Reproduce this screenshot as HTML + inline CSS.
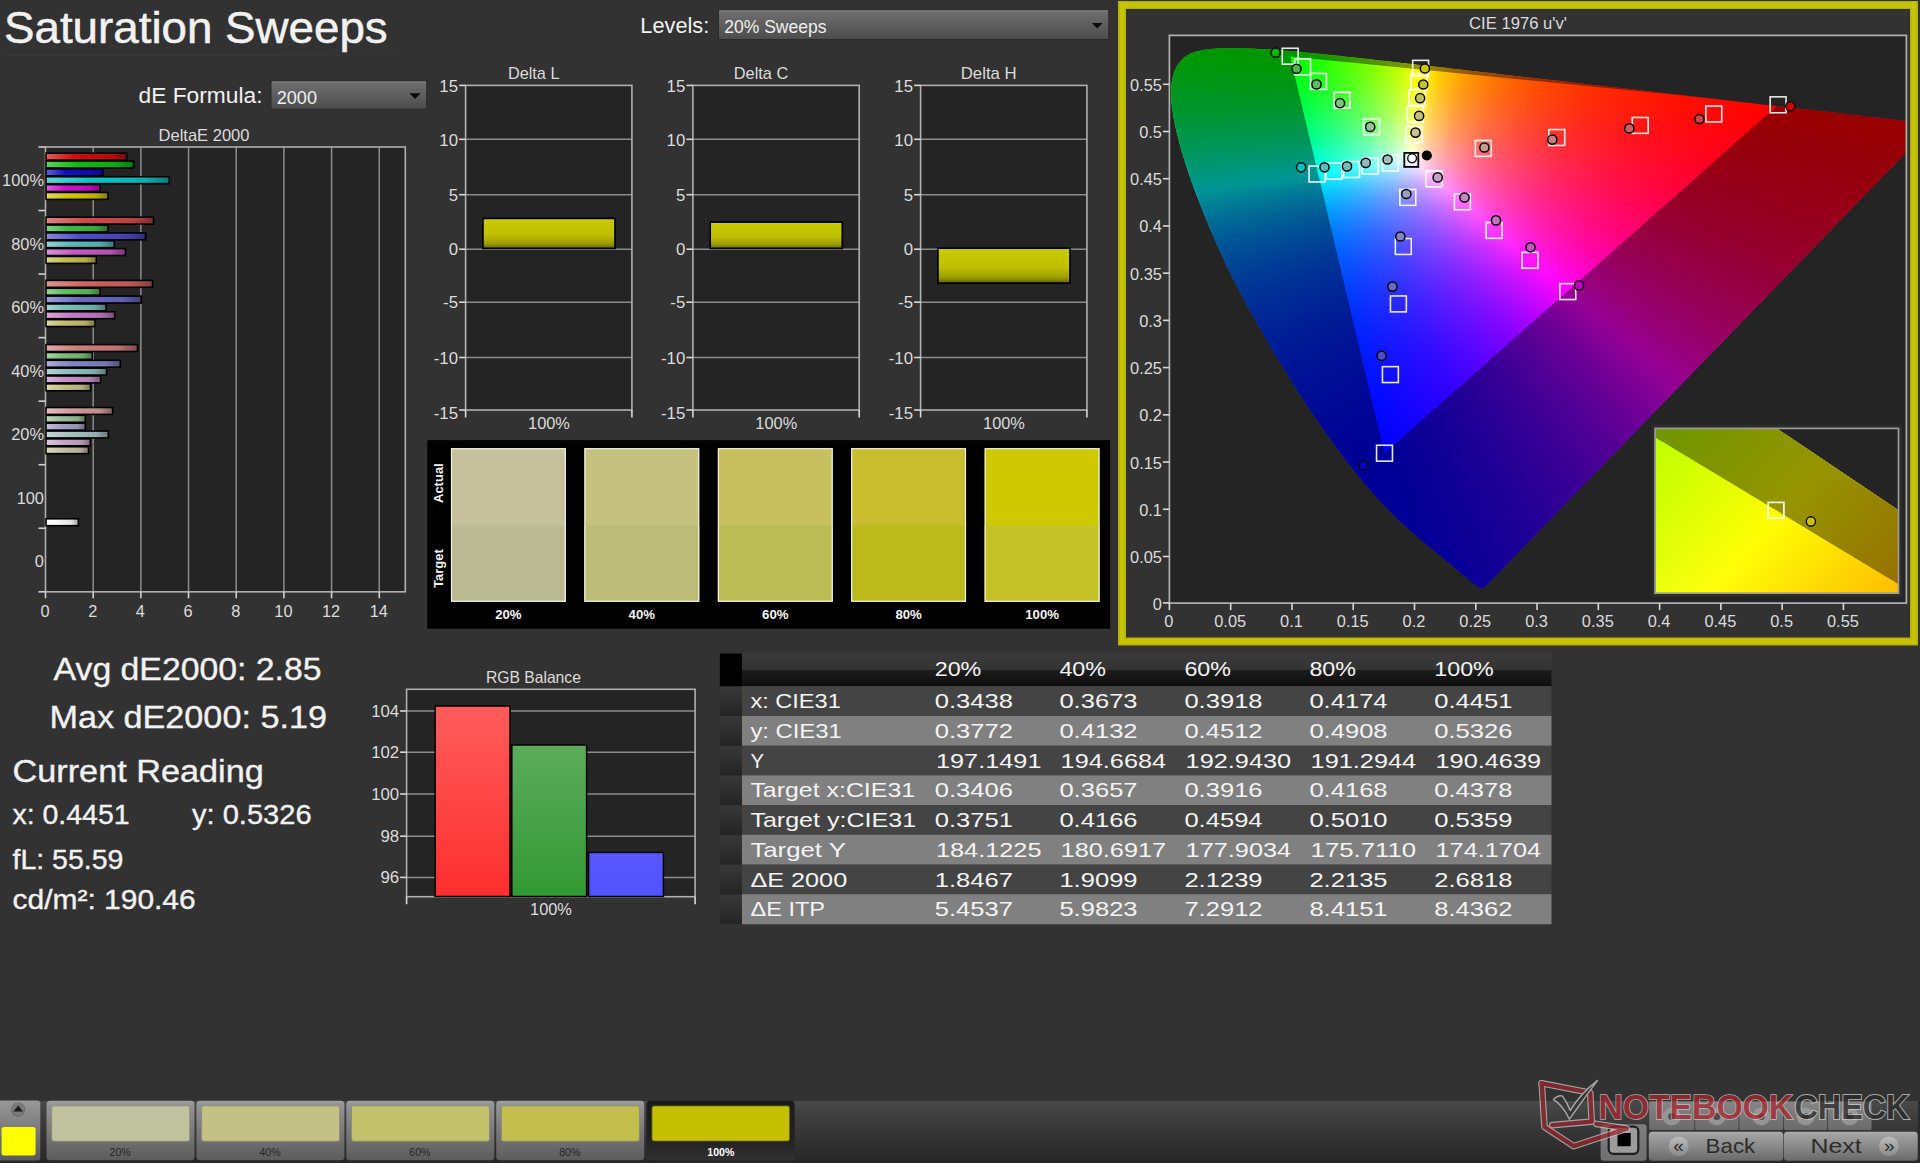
<!DOCTYPE html>
<html><head><meta charset="utf-8"><title>Saturation Sweeps</title>
<style>html,body{margin:0;padding:0;background:#323232;overflow:hidden}svg{display:block}text{font-family:"Liberation Sans", sans-serif}</style></head>
<body>
<svg width="1920" height="1163" viewBox="0 0 1920 1163">
<defs>
<linearGradient id="g1" x1="0" y1="0" x2="0" y2="1"><stop offset="0" stop-color="#707070"/><stop offset="0.5" stop-color="#5e5e5e"/><stop offset="1" stop-color="#4c4c4c"/></linearGradient>
<linearGradient id="g2" x1="0" y1="0" x2="0" y2="1"><stop offset="0" stop-color="#707070"/><stop offset="0.5" stop-color="#5e5e5e"/><stop offset="1" stop-color="#4c4c4c"/></linearGradient>
<linearGradient id="g3" x1="0" y1="0" x2="1" y2="0"><stop offset="0" stop-color="#3b3b3b"/><stop offset="0.6" stop-color="#393939"/><stop offset="1" stop-color="#323232"/></linearGradient>
<linearGradient id="g4" x1="0" y1="0" x2="1" y2="0"><stop offset="0" stop-color="#e05f5f"/><stop offset="0.35" stop-color="#d00c0c"/><stop offset="0.8" stop-color="#bb0b0b"/><stop offset="1" stop-color="#810707"/></linearGradient>
<linearGradient id="g5" x1="0" y1="0" x2="1" y2="0"><stop offset="0" stop-color="#5fd35f"/><stop offset="0.35" stop-color="#0cbc0c"/><stop offset="0.8" stop-color="#0ba90b"/><stop offset="1" stop-color="#077507"/></linearGradient>
<linearGradient id="g6" x1="0" y1="0" x2="1" y2="0"><stop offset="0" stop-color="#6060d8"/><stop offset="0.35" stop-color="#0e0ec4"/><stop offset="0.8" stop-color="#0d0db0"/><stop offset="1" stop-color="#09097a"/></linearGradient>
<linearGradient id="g7" x1="0" y1="0" x2="1" y2="0"><stop offset="0" stop-color="#5fd8d8"/><stop offset="0.35" stop-color="#0cc4c4"/><stop offset="0.8" stop-color="#0bb0b0"/><stop offset="1" stop-color="#077a7a"/></linearGradient>
<linearGradient id="g8" x1="0" y1="0" x2="1" y2="0"><stop offset="0" stop-color="#df61df"/><stop offset="0.35" stop-color="#ce10ce"/><stop offset="0.8" stop-color="#b90eb9"/><stop offset="1" stop-color="#800a80"/></linearGradient>
<linearGradient id="g9" x1="0" y1="0" x2="1" y2="0"><stop offset="0" stop-color="#ddd95d"/><stop offset="0.35" stop-color="#ccc60a"/><stop offset="0.8" stop-color="#b8b209"/><stop offset="1" stop-color="#7e7b06"/></linearGradient>
<linearGradient id="g10" x1="0" y1="0" x2="1" y2="0"><stop offset="0" stop-color="#e08686"/><stop offset="0.35" stop-color="#d04848"/><stop offset="0.8" stop-color="#bb4141"/><stop offset="1" stop-color="#812d2d"/></linearGradient>
<linearGradient id="g11" x1="0" y1="0" x2="1" y2="0"><stop offset="0" stop-color="#82d182"/><stop offset="0.35" stop-color="#42ba42"/><stop offset="0.8" stop-color="#3ba73b"/><stop offset="1" stop-color="#297329"/></linearGradient>
<linearGradient id="g12" x1="0" y1="0" x2="1" y2="0"><stop offset="0" stop-color="#8989d9"/><stop offset="0.35" stop-color="#4c4cc6"/><stop offset="0.8" stop-color="#4444b2"/><stop offset="1" stop-color="#2f2f7b"/></linearGradient>
<linearGradient id="g13" x1="0" y1="0" x2="1" y2="0"><stop offset="0" stop-color="#93d3d3"/><stop offset="0.35" stop-color="#5cbcbc"/><stop offset="0.8" stop-color="#53a9a9"/><stop offset="1" stop-color="#397575"/></linearGradient>
<linearGradient id="g14" x1="0" y1="0" x2="1" y2="0"><stop offset="0" stop-color="#d993d9"/><stop offset="0.35" stop-color="#c65cc6"/><stop offset="0.8" stop-color="#b253b2"/><stop offset="1" stop-color="#7b397b"/></linearGradient>
<linearGradient id="g15" x1="0" y1="0" x2="1" y2="0"><stop offset="0" stop-color="#d9d58c"/><stop offset="0.35" stop-color="#c6c050"/><stop offset="0.8" stop-color="#b2ad48"/><stop offset="1" stop-color="#7b7732"/></linearGradient>
<linearGradient id="g16" x1="0" y1="0" x2="1" y2="0"><stop offset="0" stop-color="#e09797"/><stop offset="0.35" stop-color="#d06262"/><stop offset="0.8" stop-color="#bb5858"/><stop offset="1" stop-color="#813d3d"/></linearGradient>
<linearGradient id="g17" x1="0" y1="0" x2="1" y2="0"><stop offset="0" stop-color="#96d496"/><stop offset="0.35" stop-color="#60be60"/><stop offset="0.8" stop-color="#56ab56"/><stop offset="1" stop-color="#3c763c"/></linearGradient>
<linearGradient id="g18" x1="0" y1="0" x2="1" y2="0"><stop offset="0" stop-color="#9d9dd7"/><stop offset="0.35" stop-color="#6a6ac2"/><stop offset="0.8" stop-color="#5f5faf"/><stop offset="1" stop-color="#424278"/></linearGradient>
<linearGradient id="g19" x1="0" y1="0" x2="1" y2="0"><stop offset="0" stop-color="#a7d3d0"/><stop offset="0.35" stop-color="#7abcb8"/><stop offset="0.8" stop-color="#6ea9a6"/><stop offset="1" stop-color="#4c7572"/></linearGradient>
<linearGradient id="g20" x1="0" y1="0" x2="1" y2="0"><stop offset="0" stop-color="#d9a7d9"/><stop offset="0.35" stop-color="#c67ac6"/><stop offset="0.8" stop-color="#b26eb2"/><stop offset="1" stop-color="#7b4c7b"/></linearGradient>
<linearGradient id="g21" x1="0" y1="0" x2="1" y2="0"><stop offset="0" stop-color="#d9d5a1"/><stop offset="0.35" stop-color="#c6c070"/><stop offset="0.8" stop-color="#b2ad65"/><stop offset="1" stop-color="#7b7745"/></linearGradient>
<linearGradient id="g22" x1="0" y1="0" x2="1" y2="0"><stop offset="0" stop-color="#e0a9a9"/><stop offset="0.35" stop-color="#d07c7c"/><stop offset="0.8" stop-color="#bb7070"/><stop offset="1" stop-color="#814d4d"/></linearGradient>
<linearGradient id="g23" x1="0" y1="0" x2="1" y2="0"><stop offset="0" stop-color="#a6d4a6"/><stop offset="0.35" stop-color="#78be78"/><stop offset="0.8" stop-color="#6cab6c"/><stop offset="1" stop-color="#4a764a"/></linearGradient>
<linearGradient id="g24" x1="0" y1="0" x2="1" y2="0"><stop offset="0" stop-color="#aeaed7"/><stop offset="0.35" stop-color="#8484c2"/><stop offset="0.8" stop-color="#7777af"/><stop offset="1" stop-color="#525278"/></linearGradient>
<linearGradient id="g25" x1="0" y1="0" x2="1" y2="0"><stop offset="0" stop-color="#b4d5d3"/><stop offset="0.35" stop-color="#8ec0bc"/><stop offset="0.8" stop-color="#80ada9"/><stop offset="1" stop-color="#587775"/></linearGradient>
<linearGradient id="g26" x1="0" y1="0" x2="1" y2="0"><stop offset="0" stop-color="#d9b6d9"/><stop offset="0.35" stop-color="#c690c6"/><stop offset="0.8" stop-color="#b282b2"/><stop offset="1" stop-color="#7b597b"/></linearGradient>
<linearGradient id="g27" x1="0" y1="0" x2="1" y2="0"><stop offset="0" stop-color="#d9d7af"/><stop offset="0.35" stop-color="#c6c286"/><stop offset="0.8" stop-color="#b2af79"/><stop offset="1" stop-color="#7b7853"/></linearGradient>
<linearGradient id="g28" x1="0" y1="0" x2="1" y2="0"><stop offset="0" stop-color="#e0bfbf"/><stop offset="0.35" stop-color="#d09e9e"/><stop offset="0.8" stop-color="#bb8e8e"/><stop offset="1" stop-color="#816262"/></linearGradient>
<linearGradient id="g29" x1="0" y1="0" x2="1" y2="0"><stop offset="0" stop-color="#bbd5bb"/><stop offset="0.35" stop-color="#98c098"/><stop offset="0.8" stop-color="#89ad89"/><stop offset="1" stop-color="#5e775e"/></linearGradient>
<linearGradient id="g30" x1="0" y1="0" x2="1" y2="0"><stop offset="0" stop-color="#c2c2d9"/><stop offset="0.35" stop-color="#a2a2c6"/><stop offset="0.8" stop-color="#9292b2"/><stop offset="1" stop-color="#64647b"/></linearGradient>
<linearGradient id="g31" x1="0" y1="0" x2="1" y2="0"><stop offset="0" stop-color="#c6d7d5"/><stop offset="0.35" stop-color="#a8c2c0"/><stop offset="0.8" stop-color="#97afad"/><stop offset="1" stop-color="#687877"/></linearGradient>
<linearGradient id="g32" x1="0" y1="0" x2="1" y2="0"><stop offset="0" stop-color="#dbc6db"/><stop offset="0.35" stop-color="#c8a8c8"/><stop offset="0.8" stop-color="#b497b4"/><stop offset="1" stop-color="#7c687c"/></linearGradient>
<linearGradient id="g33" x1="0" y1="0" x2="1" y2="0"><stop offset="0" stop-color="#d9d8c3"/><stop offset="0.35" stop-color="#c6c4a4"/><stop offset="0.8" stop-color="#b2b094"/><stop offset="1" stop-color="#7b7a66"/></linearGradient>
<linearGradient id="g34" x1="0" y1="0" x2="1" y2="0"><stop offset="0" stop-color="#fcfcfc"/><stop offset="0.35" stop-color="#fafafa"/><stop offset="0.8" stop-color="#e1e1e1"/><stop offset="1" stop-color="#9b9b9b"/></linearGradient>
<linearGradient id="g35" x1="0" y1="0" x2="0" y2="1"><stop offset="0" stop-color="#d2d21e"/><stop offset="0.08" stop-color="#c8c800"/><stop offset="0.55" stop-color="#c0c000"/><stop offset="0.85" stop-color="#9a9a00"/><stop offset="1" stop-color="#5e5e00"/></linearGradient>
<linearGradient id="g36" x1="0" y1="0" x2="0" y2="1"><stop offset="0" stop-color="#d2d21e"/><stop offset="0.08" stop-color="#c8c800"/><stop offset="0.55" stop-color="#c0c000"/><stop offset="0.85" stop-color="#9a9a00"/><stop offset="1" stop-color="#5e5e00"/></linearGradient>
<linearGradient id="g37" x1="0" y1="0" x2="0" y2="1"><stop offset="0" stop-color="#d2d21e"/><stop offset="0.08" stop-color="#c8c800"/><stop offset="0.55" stop-color="#c0c000"/><stop offset="0.85" stop-color="#9a9a00"/><stop offset="1" stop-color="#5e5e00"/></linearGradient>
<clipPath id="cplot"><rect x="1169.4" y="35.4" width="737" height="567.7"/></clipPath>
<clipPath id="cloc"><path d="M1484.32,587.42 L1483.09,587.82 L1481.58,587.93 L1480.13,587.78 L1478.62,587.03 L1477.46,586.33 L1476.16,585.46 L1474.69,584.39 L1473.02,583.11 L1472.1,582.39 L1471.1,581.61 L1470.02,580.76 L1468.86,579.85 L1467.63,578.87 L1466.34,577.83 L1464.99,576.71 L1463.58,575.51 L1462.1,574.23 L1460.54,572.88 L1458.91,571.48 L1457.2,570.02 L1455.42,568.51 L1453.54,566.94 L1451.57,565.29 L1449.48,563.55 L1447.27,561.72 L1444.93,559.78 L1442.47,557.74 L1439.88,555.6 L1437.18,553.36 L1434.36,551.03 L1431.44,548.62 L1428.42,546.12 L1425.28,543.51 L1422.03,540.76 L1418.63,537.87 L1415.08,534.79 L1411.37,531.54 L1407.53,528.09 L1403.56,524.46 L1399.47,520.63 L1395.26,516.6 L1390.92,512.33 L1386.39,507.73 L1381.63,502.73 L1376.57,497.2 L1371.15,491.06 L1365.35,484.26 L1359.2,476.83 L1352.75,468.8 L1346.06,460.24 L1339.2,451.18 L1332.16,441.62 L1324.94,431.52 L1317.54,420.88 L1309.99,409.7 L1302.29,397.96 L1294.5,385.74 L1286.66,373.1 L1278.78,360.14 L1270.92,346.93 L1263.1,333.55 L1255.36,320.01 L1247.76,306.37 L1240.38,292.66 L1233.32,278.97 L1226.65,265.41 L1220.39,252.06 L1214.53,238.98 L1209.05,226.2 L1203.92,213.77 L1199.13,201.74 L1194.73,190.18 L1190.73,179.14 L1187.14,168.66 L1183.95,158.77 L1181.16,149.48 L1178.76,140.77 L1176.72,132.63 L1175.02,125.01 L1173.64,117.89 L1172.56,111.28 L1171.78,105.17 L1171.29,99.52 L1171.08,94.29 L1171.14,89.44 L1171.45,84.91 L1172,80.7 L1172.79,76.8 L1173.81,73.19 L1175.08,69.89 L1176.57,66.87 L1178.26,64.11 L1180.14,61.63 L1182.2,59.42 L1184.44,57.48 L1186.85,55.79 L1189.39,54.32 L1192.07,53.07 L1194.85,52.02 L1197.74,51.14 L1200.73,50.43 L1203.81,49.87 L1206.97,49.43 L1210.22,49.08 L1213.53,48.8 L1216.91,48.59 L1220.35,48.44 L1223.82,48.33 L1227.3,48.26 L1230.78,48.23 L1234.26,48.22 L1237.73,48.24 L1241.22,48.28 L1244.72,48.34 L1248.26,48.44 L1251.84,48.56 L1255.44,48.71 L1259.09,48.88 L1262.79,49.07 L1266.53,49.29 L1270.34,49.53 L1274.21,49.8 L1278.14,50.08 L1282.13,50.39 L1286.19,50.72 L1290.31,51.07 L1294.51,51.44 L1298.78,51.82 L1303.14,52.23 L1307.57,52.65 L1312.1,53.09 L1316.71,53.55 L1321.41,54.03 L1326.21,54.52 L1331.1,55.04 L1336.09,55.56 L1341.19,56.11 L1346.39,56.67 L1351.7,57.25 L1357.11,57.84 L1362.64,58.45 L1368.29,59.08 L1374.04,59.72 L1379.92,60.38 L1385.91,61.05 L1392.03,61.74 L1398.28,62.45 L1404.64,63.17 L1411.13,63.91 L1417.75,64.67 L1424.5,65.44 L1431.38,66.23 L1438.39,67.03 L1445.53,67.86 L1452.8,68.69 L1460.19,69.55 L1467.72,70.42 L1475.37,71.3 L1483.14,72.2 L1491.03,73.11 L1499.04,74.03 L1507.17,74.97 L1515.41,75.92 L1523.76,76.88 L1532.21,77.85 L1540.76,78.83 L1549.4,79.83 L1558.12,80.83 L1566.92,81.84 L1575.79,82.86 L1584.74,83.9 L1593.74,84.94 L1602.76,85.98 L1611.75,87.02 L1620.67,88.05 L1629.5,89.07 L1638.22,90.08 L1646.88,91.07 L1655.5,92.07 L1664.1,93.06 L1672.71,94.05 L1681.28,95.04 L1689.77,96.01 L1698.15,96.98 L1706.36,97.92 L1714.36,98.84 L1722.17,99.74 L1729.8,100.61 L1737.26,101.46 L1744.55,102.3 L1751.68,103.12 L1758.64,103.92 L1765.4,104.7 L1771.98,105.46 L1778.35,106.2 L1784.52,106.91 L1790.49,107.6 L1796.25,108.27 L1801.81,108.91 L1807.18,109.53 L1812.36,110.12 L1817.36,110.7 L1822.19,111.25 L1826.85,111.79 L1831.35,112.31 L1835.68,112.8 L1839.86,113.28 L1843.9,113.75 L1847.83,114.2 L1851.65,114.64 L1855.39,115.07 L1859.03,115.49 L1862.56,115.9 L1865.98,116.3 L1869.29,116.68 L1872.49,117.05 L1875.57,117.4 L1878.55,117.75 L1881.42,118.08 L1884.18,118.4 L1886.84,118.71 L1889.4,119 L1891.85,119.28 L1894.18,119.55 L1896.39,119.81 L1898.46,120.04 L1900.4,120.27 L1902.22,120.48 L1903.94,120.67 L1905.58,120.86 L1907.17,121.05 L1908.68,121.22 L1910.13,121.39 L1911.5,121.55 L1914.03,121.84 L1916.28,122.1 L1918.24,122.33 L1919.87,122.51 L1921.23,122.67 L1923.08,122.89 L1924.79,123.08 L1926.26,123.25 L1927.62,123.41 L1929,123.57 L1930.75,123.77 L1932.1,123.93 L1933.51,124.09Z"/></clipPath>
<linearGradient id="s1" gradientUnits="userSpaceOnUse" x1="1209" x2="1263"><stop offset="0" stop-color="#00ff00"/><stop offset="1" stop-color="#00ff00"/></linearGradient>
<linearGradient id="s2" gradientUnits="userSpaceOnUse" x1="1196" x2="1292"><stop offset="0" stop-color="#00ff02"/><stop offset="0.9896" stop-color="#02ff00"/><stop offset="1" stop-color="#03ff00"/></linearGradient>
<linearGradient id="s3" gradientUnits="userSpaceOnUse" x1="1190" x2="1313"><stop offset="0" stop-color="#00ff04"/><stop offset="0.8293" stop-color="#02ff00"/><stop offset="1" stop-color="#1bff00"/></linearGradient>
<linearGradient id="s4" gradientUnits="userSpaceOnUse" x1="1186" x2="1333"><stop offset="0" stop-color="#00ff06"/><stop offset="0.7211" stop-color="#02ff00"/><stop offset="0.932" stop-color="#29ff00"/><stop offset="1" stop-color="#39ff00"/></linearGradient>
<linearGradient id="s5" gradientUnits="userSpaceOnUse" x1="1183" x2="1351"><stop offset="0" stop-color="#00ff08"/><stop offset="0.6488" stop-color="#01ff00"/><stop offset="0.8333" stop-color="#28ff00"/><stop offset="1" stop-color="#58ff00"/></linearGradient>
<linearGradient id="s6" gradientUnits="userSpaceOnUse" x1="1181" x2="1370"><stop offset="0" stop-color="#00ff0b"/><stop offset="0.5926" stop-color="#02ff01"/><stop offset="0.7566" stop-color="#2aff00"/><stop offset="0.9471" stop-color="#69ff00"/><stop offset="1" stop-color="#7dff00"/></linearGradient>
<linearGradient id="s7" gradientUnits="userSpaceOnUse" x1="1179" x2="1387"><stop offset="0" stop-color="#00ff0d"/><stop offset="0.5481" stop-color="#01ff03"/><stop offset="0.6971" stop-color="#29ff00"/><stop offset="0.8702" stop-color="#68ff00"/><stop offset="1" stop-color="#a4ff00"/></linearGradient>
<linearGradient id="s8" gradientUnits="userSpaceOnUse" x1="1177" x2="1405"><stop offset="0" stop-color="#00ff0f"/><stop offset="0.5132" stop-color="#02ff05"/><stop offset="0.6491" stop-color="#2aff01"/><stop offset="0.807" stop-color="#6aff00"/><stop offset="0.9561" stop-color="#b7ff00"/><stop offset="1" stop-color="#d1ff00"/></linearGradient>
<linearGradient id="s9" gradientUnits="userSpaceOnUse" x1="1176" x2="1423"><stop offset="0" stop-color="#00ff11"/><stop offset="0.4777" stop-color="#02ff07"/><stop offset="0.5992" stop-color="#28ff04"/><stop offset="0.7449" stop-color="#68ff00"/><stop offset="0.8826" stop-color="#b5ff00"/><stop offset="0.9919" stop-color="#ffff00"/><stop offset="1" stop-color="#fff900"/></linearGradient>
<linearGradient id="s10" gradientUnits="userSpaceOnUse" x1="1175" x2="1440"><stop offset="0" stop-color="#00ff14"/><stop offset="0.4528" stop-color="#02ff09"/><stop offset="0.5698" stop-color="#2bff06"/><stop offset="0.7057" stop-color="#6cff02"/><stop offset="0.834" stop-color="#baff00"/><stop offset="0.9283" stop-color="#fffe00"/><stop offset="1" stop-color="#ffcd00"/></linearGradient>
<linearGradient id="s11" gradientUnits="userSpaceOnUse" x1="1174" x2="1457"><stop offset="0" stop-color="#00ff16"/><stop offset="0.4276" stop-color="#02ff0c"/><stop offset="0.5336" stop-color="#29ff08"/><stop offset="0.6608" stop-color="#6aff04"/><stop offset="0.7809" stop-color="#b8ff01"/><stop offset="0.8728" stop-color="#fffe00"/><stop offset="0.9435" stop-color="#ffca00"/><stop offset="1" stop-color="#ffab00"/></linearGradient>
<linearGradient id="s12" gradientUnits="userSpaceOnUse" x1="1173" x2="1475"><stop offset="0" stop-color="#00ff18"/><stop offset="0.4073" stop-color="#02ff0e"/><stop offset="0.5066" stop-color="#2aff0b"/><stop offset="0.6225" stop-color="#69ff07"/><stop offset="0.7318" stop-color="#b5ff03"/><stop offset="0.8212" stop-color="#fffd00"/><stop offset="0.8874" stop-color="#ffca00"/><stop offset="0.9735" stop-color="#ff9a00"/><stop offset="1" stop-color="#ff8f00"/></linearGradient>
<linearGradient id="s13" gradientUnits="userSpaceOnUse" x1="1172" x2="1492"><stop offset="0" stop-color="#00ff1b"/><stop offset="0.3875" stop-color="#02ff11"/><stop offset="0.4813" stop-color="#29ff0e"/><stop offset="0.5906" stop-color="#69ff0a"/><stop offset="0.6937" stop-color="#b5ff06"/><stop offset="0.775" stop-color="#feff02"/><stop offset="0.8406" stop-color="#ffc900"/><stop offset="0.9219" stop-color="#ff9a00"/><stop offset="1" stop-color="#ff7900"/></linearGradient>
<linearGradient id="s14" gradientUnits="userSpaceOnUse" x1="1171" x2="1509"><stop offset="0" stop-color="#00ff1d"/><stop offset="0.3728" stop-color="#02ff13"/><stop offset="0.4615" stop-color="#2aff11"/><stop offset="0.5651" stop-color="#6bff0d"/><stop offset="0.6627" stop-color="#b8ff09"/><stop offset="0.7367" stop-color="#ffff05"/><stop offset="0.7959" stop-color="#ffcb02"/><stop offset="0.8728" stop-color="#ff9a00"/><stop offset="0.9734" stop-color="#ff6f00"/><stop offset="1" stop-color="#ff6700"/></linearGradient>
<linearGradient id="s15" gradientUnits="userSpaceOnUse" x1="1171" x2="1527"><stop offset="0" stop-color="#00ff20"/><stop offset="0.3539" stop-color="#02ff16"/><stop offset="0.4382" stop-color="#2aff13"/><stop offset="0.5365" stop-color="#6bff10"/><stop offset="0.6292" stop-color="#b8ff0c"/><stop offset="0.6994" stop-color="#fffe08"/><stop offset="0.7556" stop-color="#ffca04"/><stop offset="0.8287" stop-color="#ff9a01"/><stop offset="0.9242" stop-color="#ff6f00"/><stop offset="1" stop-color="#ff5700"/></linearGradient>
<linearGradient id="s16" gradientUnits="userSpaceOnUse" x1="1170" x2="1544"><stop offset="0" stop-color="#00ff22"/><stop offset="0.3396" stop-color="#01ff19"/><stop offset="0.4171" stop-color="#28ff17"/><stop offset="0.5107" stop-color="#68ff13"/><stop offset="0.5989" stop-color="#b6ff0f"/><stop offset="0.6684" stop-color="#fffe0c"/><stop offset="0.7219" stop-color="#ffc907"/><stop offset="0.7888" stop-color="#ff9b03"/><stop offset="0.877" stop-color="#ff7000"/><stop offset="0.9973" stop-color="#ff4b00"/><stop offset="1" stop-color="#ff4a00"/></linearGradient>
<linearGradient id="s17" gradientUnits="userSpaceOnUse" x1="1170" x2="1562"><stop offset="0" stop-color="#00ff25"/><stop offset="0.3265" stop-color="#02ff1c"/><stop offset="0.4005" stop-color="#29ff1a"/><stop offset="0.4872" stop-color="#68ff16"/><stop offset="0.5714" stop-color="#b6ff13"/><stop offset="0.6378" stop-color="#fffd0f"/><stop offset="0.6888" stop-color="#ffc90a"/><stop offset="0.7526" stop-color="#ff9a05"/><stop offset="0.8367" stop-color="#ff7002"/><stop offset="0.9515" stop-color="#ff4a00"/><stop offset="1" stop-color="#ff3e00"/></linearGradient>
<linearGradient id="s18" gradientUnits="userSpaceOnUse" x1="1170" x2="1579"><stop offset="0" stop-color="#00ff27"/><stop offset="0.313" stop-color="#01ff1f"/><stop offset="0.3839" stop-color="#28ff1d"/><stop offset="0.467" stop-color="#68ff1a"/><stop offset="0.5452" stop-color="#b3ff16"/><stop offset="0.6088" stop-color="#feff13"/><stop offset="0.6601" stop-color="#ffc80d"/><stop offset="0.7213" stop-color="#ff9908"/><stop offset="0.802" stop-color="#ff6f03"/><stop offset="0.912" stop-color="#ff4900"/><stop offset="1" stop-color="#ff3500"/></linearGradient>
<linearGradient id="s19" gradientUnits="userSpaceOnUse" x1="1169" x2="1596"><stop offset="0" stop-color="#00ff2a"/><stop offset="0.3044" stop-color="#02ff22"/><stop offset="0.3724" stop-color="#2aff20"/><stop offset="0.452" stop-color="#6aff1d"/><stop offset="0.5269" stop-color="#b6ff1a"/><stop offset="0.5855" stop-color="#ffff17"/><stop offset="0.6323" stop-color="#ffca10"/><stop offset="0.6909" stop-color="#ff9a0a"/><stop offset="0.7681" stop-color="#ff6f05"/><stop offset="0.8735" stop-color="#ff4a01"/><stop offset="1" stop-color="#ff2d00"/></linearGradient>
<linearGradient id="s20" gradientUnits="userSpaceOnUse" x1="1169" x2="1614"><stop offset="0" stop-color="#00ff2d"/><stop offset="0.2921" stop-color="#01ff25"/><stop offset="0.3551" stop-color="#27ff23"/><stop offset="0.4315" stop-color="#67ff21"/><stop offset="0.5034" stop-color="#b4ff1e"/><stop offset="0.5618" stop-color="#ffff1b"/><stop offset="0.6045" stop-color="#ffcb14"/><stop offset="0.6607" stop-color="#ff9b0d"/><stop offset="0.7348" stop-color="#ff7007"/><stop offset="0.8337" stop-color="#ff4a02"/><stop offset="0.973" stop-color="#ff2a00"/><stop offset="1" stop-color="#ff2500"/></linearGradient>
<linearGradient id="s21" gradientUnits="userSpaceOnUse" x1="1169" x2="1631"><stop offset="0" stop-color="#00ff2f"/><stop offset="0.2835" stop-color="#02ff29"/><stop offset="0.3463" stop-color="#2aff27"/><stop offset="0.4199" stop-color="#6bff24"/><stop offset="0.4892" stop-color="#b9ff21"/><stop offset="0.5411" stop-color="#fffe1f"/><stop offset="0.5823" stop-color="#ffcb17"/><stop offset="0.6364" stop-color="#ff9a10"/><stop offset="0.7078" stop-color="#ff6f09"/><stop offset="0.803" stop-color="#ff4a04"/><stop offset="0.9394" stop-color="#ff2900"/><stop offset="1" stop-color="#ff1f00"/></linearGradient>
<linearGradient id="s22" gradientUnits="userSpaceOnUse" x1="1169" x2="1648"><stop offset="0" stop-color="#00ff32"/><stop offset="0.2735" stop-color="#02ff2c"/><stop offset="0.3319" stop-color="#28ff2a"/><stop offset="0.4008" stop-color="#67ff28"/><stop offset="0.4676" stop-color="#b4ff26"/><stop offset="0.5219" stop-color="#fffd23"/><stop offset="0.5616" stop-color="#ffca1a"/><stop offset="0.6138" stop-color="#ff9a12"/><stop offset="0.6827" stop-color="#ff6f0b"/><stop offset="0.7745" stop-color="#ff4905"/><stop offset="0.9061" stop-color="#ff2901"/><stop offset="1" stop-color="#ff1900"/></linearGradient>
<linearGradient id="s23" gradientUnits="userSpaceOnUse" x1="1169" x2="1666"><stop offset="0" stop-color="#00ff35"/><stop offset="0.2656" stop-color="#02ff2f"/><stop offset="0.3239" stop-color="#2bff2e"/><stop offset="0.3903" stop-color="#6bff2c"/><stop offset="0.4527" stop-color="#b7ff2a"/><stop offset="0.503" stop-color="#fffd27"/><stop offset="0.5412" stop-color="#ffc91e"/><stop offset="0.5915" stop-color="#ff9915"/><stop offset="0.6559" stop-color="#ff6f0e"/><stop offset="0.7445" stop-color="#ff4907"/><stop offset="0.8692" stop-color="#ff2902"/><stop offset="1" stop-color="#ff1400"/></linearGradient>
<linearGradient id="s24" gradientUnits="userSpaceOnUse" x1="1169" x2="1683"><stop offset="0" stop-color="#00ff38"/><stop offset="0.2568" stop-color="#02ff33"/><stop offset="0.3113" stop-color="#29ff32"/><stop offset="0.3755" stop-color="#68ff30"/><stop offset="0.4358" stop-color="#b4ff2e"/><stop offset="0.4844" stop-color="#ffff2c"/><stop offset="0.5233" stop-color="#ffc921"/><stop offset="0.57" stop-color="#ff9a18"/><stop offset="0.6323" stop-color="#ff6f10"/><stop offset="0.7179" stop-color="#ff4909"/><stop offset="0.8385" stop-color="#ff2903"/><stop offset="1" stop-color="#ff1000"/></linearGradient>
<linearGradient id="s25" gradientUnits="userSpaceOnUse" x1="1169" x2="1700"><stop offset="0" stop-color="#00ff3a"/><stop offset="0.2505" stop-color="#02ff36"/><stop offset="0.3032" stop-color="#2aff35"/><stop offset="0.3653" stop-color="#6aff34"/><stop offset="0.4237" stop-color="#b7ff32"/><stop offset="0.4689" stop-color="#ffff31"/><stop offset="0.5047" stop-color="#ffca26"/><stop offset="0.5499" stop-color="#ff9b1c"/><stop offset="0.6102" stop-color="#ff7013"/><stop offset="0.6911" stop-color="#ff4a0b"/><stop offset="0.806" stop-color="#ff2904"/><stop offset="0.9755" stop-color="#ff0f00"/><stop offset="1" stop-color="#ff0c00"/></linearGradient>
<linearGradient id="s26" gradientUnits="userSpaceOnUse" x1="1169" x2="1718"><stop offset="0" stop-color="#00ff3d"/><stop offset="0.2423" stop-color="#02ff3a"/><stop offset="0.2933" stop-color="#29ff39"/><stop offset="0.3534" stop-color="#6aff38"/><stop offset="0.4098" stop-color="#b7ff36"/><stop offset="0.4536" stop-color="#fffe35"/><stop offset="0.4882" stop-color="#ffc929"/><stop offset="0.5319" stop-color="#ff9a1f"/><stop offset="0.5902" stop-color="#ff6f15"/><stop offset="0.6685" stop-color="#ff4a0d"/><stop offset="0.7796" stop-color="#ff2906"/><stop offset="0.9435" stop-color="#ff0e00"/><stop offset="1" stop-color="#ff0900"/></linearGradient>
<linearGradient id="s27" gradientUnits="userSpaceOnUse" x1="1169" x2="1735"><stop offset="0" stop-color="#00ff40"/><stop offset="0.2367" stop-color="#02ff3e"/><stop offset="0.2862" stop-color="#2bff3d"/><stop offset="0.3445" stop-color="#6cff3c"/><stop offset="0.3993" stop-color="#baff3b"/><stop offset="0.4399" stop-color="#fffe3a"/><stop offset="0.4735" stop-color="#ffc92d"/><stop offset="0.5159" stop-color="#ff9922"/><stop offset="0.5724" stop-color="#ff6e17"/><stop offset="0.6484" stop-color="#ff490f"/><stop offset="0.7562" stop-color="#ff2807"/><stop offset="0.9152" stop-color="#ff0e01"/><stop offset="1" stop-color="#ff0600"/></linearGradient>
<linearGradient id="s28" gradientUnits="userSpaceOnUse" x1="1169" x2="1753"><stop offset="0" stop-color="#00ff43"/><stop offset="0.2295" stop-color="#02ff41"/><stop offset="0.2757" stop-color="#28ff41"/><stop offset="0.3305" stop-color="#67ff40"/><stop offset="0.3836" stop-color="#b5ff40"/><stop offset="0.4264" stop-color="#fffd3e"/><stop offset="0.4589" stop-color="#ffc831"/><stop offset="0.5" stop-color="#ff9925"/><stop offset="0.5548" stop-color="#ff6e1a"/><stop offset="0.6284" stop-color="#ff4810"/><stop offset="0.7329" stop-color="#ff2808"/><stop offset="0.887" stop-color="#ff0e02"/><stop offset="1" stop-color="#ff0300"/></linearGradient>
<linearGradient id="s29" gradientUnits="userSpaceOnUse" x1="1170" x2="1770"><stop offset="0" stop-color="#00ff46"/><stop offset="0.2217" stop-color="#01ff45"/><stop offset="0.2667" stop-color="#28ff45"/><stop offset="0.32" stop-color="#67ff45"/><stop offset="0.37" stop-color="#b2ff44"/><stop offset="0.4117" stop-color="#feff44"/><stop offset="0.445" stop-color="#ffc735"/><stop offset="0.485" stop-color="#ff9828"/><stop offset="0.5383" stop-color="#ff6d1c"/><stop offset="0.61" stop-color="#ff4812"/><stop offset="0.7117" stop-color="#ff280a"/><stop offset="0.8617" stop-color="#ff0d03"/><stop offset="1" stop-color="#ff0100"/></linearGradient>
<linearGradient id="s30" gradientUnits="userSpaceOnUse" x1="1170" x2="1787"><stop offset="0" stop-color="#00ff49"/><stop offset="0.2172" stop-color="#02ff49"/><stop offset="0.2609" stop-color="#29ff49"/><stop offset="0.3128" stop-color="#69ff49"/><stop offset="0.3614" stop-color="#b5ff49"/><stop offset="0.4003" stop-color="#ffff49"/><stop offset="0.4295" stop-color="#ffcb3a"/><stop offset="0.4668" stop-color="#ff9c2d"/><stop offset="0.517" stop-color="#ff7120"/><stop offset="0.5851" stop-color="#ff4b15"/><stop offset="0.6807" stop-color="#ff2a0c"/><stop offset="0.8217" stop-color="#ff0f04"/><stop offset="0.9951" stop-color="#ff0000"/><stop offset="1" stop-color="#ff0000"/></linearGradient>
<linearGradient id="s31" gradientUnits="userSpaceOnUse" x1="1170" x2="1805"><stop offset="0" stop-color="#00ff4c"/><stop offset="0.211" stop-color="#01ff4d"/><stop offset="0.2535" stop-color="#28ff4d"/><stop offset="0.3039" stop-color="#69ff4e"/><stop offset="0.3512" stop-color="#b5ff4e"/><stop offset="0.389" stop-color="#fffe4e"/><stop offset="0.4173" stop-color="#ffcb3e"/><stop offset="0.4535" stop-color="#ff9c30"/><stop offset="0.5008" stop-color="#ff7123"/><stop offset="0.5654" stop-color="#ff4c18"/><stop offset="0.6567" stop-color="#ff2b0e"/><stop offset="0.7906" stop-color="#ff1006"/><stop offset="0.9622" stop-color="#ff0000"/><stop offset="1" stop-color="#ff0000"/></linearGradient>
<linearGradient id="s32" gradientUnits="userSpaceOnUse" x1="1170" x2="1822"><stop offset="0" stop-color="#00ff4f"/><stop offset="0.2071" stop-color="#02ff51"/><stop offset="0.2485" stop-color="#2aff52"/><stop offset="0.2975" stop-color="#6bff52"/><stop offset="0.3436" stop-color="#b8ff53"/><stop offset="0.3788" stop-color="#fffe53"/><stop offset="0.4064" stop-color="#ffca43"/><stop offset="0.4417" stop-color="#ff9b34"/><stop offset="0.4877" stop-color="#ff7126"/><stop offset="0.5506" stop-color="#ff4b1a"/><stop offset="0.6396" stop-color="#ff2a0f"/><stop offset="0.7699" stop-color="#ff1007"/><stop offset="0.934" stop-color="#ff0001"/><stop offset="1" stop-color="#ff0000"/></linearGradient>
<linearGradient id="s33" gradientUnits="userSpaceOnUse" x1="1171" x2="1839"><stop offset="0" stop-color="#00ff52"/><stop offset="0.2006" stop-color="#01ff55"/><stop offset="0.2395" stop-color="#27ff56"/><stop offset="0.2859" stop-color="#66ff57"/><stop offset="0.3308" stop-color="#b2ff58"/><stop offset="0.3683" stop-color="#fffd58"/><stop offset="0.3952" stop-color="#ffc947"/><stop offset="0.4296" stop-color="#ff9a37"/><stop offset="0.4746" stop-color="#ff7029"/><stop offset="0.5359" stop-color="#ff4a1c"/><stop offset="0.6228" stop-color="#ff2a11"/><stop offset="0.75" stop-color="#ff0f08"/><stop offset="0.9087" stop-color="#ff0002"/><stop offset="1" stop-color="#ff0000"/></linearGradient>
<linearGradient id="s34" gradientUnits="userSpaceOnUse" x1="1171" x2="1857"><stop offset="0" stop-color="#00ff56"/><stop offset="0.1968" stop-color="#02ff59"/><stop offset="0.2362" stop-color="#2aff5a"/><stop offset="0.2813" stop-color="#6aff5c"/><stop offset="0.3236" stop-color="#b5ff5d"/><stop offset="0.3571" stop-color="#feff5e"/><stop offset="0.3863" stop-color="#ffc64a"/><stop offset="0.4198" stop-color="#ff983a"/><stop offset="0.465" stop-color="#ff6d2b"/><stop offset="0.5262" stop-color="#ff481d"/><stop offset="0.6122" stop-color="#ff2712"/><stop offset="0.7391" stop-color="#ff0d08"/><stop offset="0.8863" stop-color="#ff0002"/><stop offset="1" stop-color="#ff0000"/></linearGradient>
<linearGradient id="s35" gradientUnits="userSpaceOnUse" x1="1171" x2="1874"><stop offset="0" stop-color="#00ff59"/><stop offset="0.192" stop-color="#01ff5e"/><stop offset="0.229" stop-color="#28ff5f"/><stop offset="0.2731" stop-color="#67ff60"/><stop offset="0.3144" stop-color="#b3ff62"/><stop offset="0.3485" stop-color="#ffff64"/><stop offset="0.3741" stop-color="#ffca51"/><stop offset="0.4068" stop-color="#ff9a3f"/><stop offset="0.4495" stop-color="#ff702f"/><stop offset="0.5078" stop-color="#ff4a21"/><stop offset="0.5903" stop-color="#ff2914"/><stop offset="0.7112" stop-color="#ff0f0a"/><stop offset="0.8578" stop-color="#ff0003"/><stop offset="1" stop-color="#ff0000"/></linearGradient>
<linearGradient id="s36" gradientUnits="userSpaceOnUse" x1="1171" x2="1891"><stop offset="0" stop-color="#00ff5c"/><stop offset="0.1889" stop-color="#02ff62"/><stop offset="0.225" stop-color="#29ff63"/><stop offset="0.2681" stop-color="#69ff66"/><stop offset="0.3083" stop-color="#b6ff68"/><stop offset="0.3403" stop-color="#ffff6a"/><stop offset="0.3653" stop-color="#ffca55"/><stop offset="0.3972" stop-color="#ff9a42"/><stop offset="0.4389" stop-color="#ff6f32"/><stop offset="0.4958" stop-color="#ff4923"/><stop offset="0.5764" stop-color="#ff2916"/><stop offset="0.6944" stop-color="#ff0e0b"/><stop offset="0.8361" stop-color="#ff0004"/><stop offset="1" stop-color="#ff0000"/></linearGradient>
<linearGradient id="s37" gradientUnits="userSpaceOnUse" x1="1172" x2="1907"><stop offset="0" stop-color="#00ff60"/><stop offset="0.1837" stop-color="#02ff66"/><stop offset="0.219" stop-color="#29ff68"/><stop offset="0.2612" stop-color="#69ff6b"/><stop offset="0.3007" stop-color="#b6ff6d"/><stop offset="0.332" stop-color="#fffe6f"/><stop offset="0.3565" stop-color="#ffc95a"/><stop offset="0.3878" stop-color="#ff9946"/><stop offset="0.4286" stop-color="#ff6e35"/><stop offset="0.4844" stop-color="#ff4925"/><stop offset="0.5633" stop-color="#ff2818"/><stop offset="0.6789" stop-color="#ff0e0c"/><stop offset="0.815" stop-color="#ff0005"/><stop offset="1" stop-color="#ff0000"/></linearGradient>
<linearGradient id="s38" gradientUnits="userSpaceOnUse" x1="1172" x2="1907"><stop offset="0" stop-color="#00ff63"/><stop offset="0.185" stop-color="#02ff6b"/><stop offset="0.2204" stop-color="#2aff6d"/><stop offset="0.2612" stop-color="#69ff70"/><stop offset="0.3007" stop-color="#b6ff73"/><stop offset="0.332" stop-color="#fffd75"/><stop offset="0.3551" stop-color="#ffcb5f"/><stop offset="0.385" stop-color="#ff9c4b"/><stop offset="0.4245" stop-color="#ff7139"/><stop offset="0.4789" stop-color="#ff4b29"/><stop offset="0.5551" stop-color="#ff2a1a"/><stop offset="0.6667" stop-color="#ff100f"/><stop offset="0.8068" stop-color="#ff0006"/><stop offset="1" stop-color="#ff0001"/></linearGradient>
<linearGradient id="s39" gradientUnits="userSpaceOnUse" x1="1173" x2="1907"><stop offset="0" stop-color="#00ff66"/><stop offset="0.1839" stop-color="#02ff6f"/><stop offset="0.2193" stop-color="#29ff72"/><stop offset="0.2602" stop-color="#69ff75"/><stop offset="0.2997" stop-color="#b6ff79"/><stop offset="0.3297" stop-color="#feff7c"/><stop offset="0.3569" stop-color="#ffc562"/><stop offset="0.3883" stop-color="#ff964d"/><stop offset="0.4292" stop-color="#ff6c3a"/><stop offset="0.485" stop-color="#ff4729"/><stop offset="0.564" stop-color="#ff271b"/><stop offset="0.6812" stop-color="#ff0d0f"/><stop offset="0.812" stop-color="#ff0007"/><stop offset="1" stop-color="#ff0001"/></linearGradient>
<linearGradient id="s40" gradientUnits="userSpaceOnUse" x1="1173" x2="1907"><stop offset="0" stop-color="#00ff6a"/><stop offset="0.1853" stop-color="#02ff74"/><stop offset="0.2207" stop-color="#2bff77"/><stop offset="0.2616" stop-color="#6bff7a"/><stop offset="0.2997" stop-color="#b6ff7e"/><stop offset="0.3297" stop-color="#ffff82"/><stop offset="0.3542" stop-color="#ffc969"/><stop offset="0.3842" stop-color="#ff9a53"/><stop offset="0.4237" stop-color="#ff703f"/><stop offset="0.4782" stop-color="#ff4a2e"/><stop offset="0.5545" stop-color="#ff291e"/><stop offset="0.6676" stop-color="#ff0e11"/><stop offset="0.8038" stop-color="#ff0008"/><stop offset="1" stop-color="#ff0002"/></linearGradient>
<linearGradient id="s41" gradientUnits="userSpaceOnUse" x1="1173" x2="1907"><stop offset="0" stop-color="#00ff6d"/><stop offset="0.1853" stop-color="#02ff79"/><stop offset="0.2193" stop-color="#28ff7c"/><stop offset="0.2602" stop-color="#68ff80"/><stop offset="0.2984" stop-color="#b4ff84"/><stop offset="0.3297" stop-color="#ffff88"/><stop offset="0.3529" stop-color="#ffcb6f"/><stop offset="0.3828" stop-color="#ff9b58"/><stop offset="0.4223" stop-color="#ff7043"/><stop offset="0.4755" stop-color="#ff4a31"/><stop offset="0.5504" stop-color="#ff2a21"/><stop offset="0.6608" stop-color="#ff0f13"/><stop offset="0.7984" stop-color="#ff0009"/><stop offset="1" stop-color="#ff0002"/></linearGradient>
<linearGradient id="s42" gradientUnits="userSpaceOnUse" x1="1174" x2="1907"><stop offset="0" stop-color="#00ff71"/><stop offset="0.1842" stop-color="#01ff7d"/><stop offset="0.2183" stop-color="#28ff81"/><stop offset="0.2592" stop-color="#68ff85"/><stop offset="0.2974" stop-color="#b4ff8a"/><stop offset="0.3288" stop-color="#fffe8e"/><stop offset="0.352" stop-color="#ffca74"/><stop offset="0.382" stop-color="#ff9a5c"/><stop offset="0.4216" stop-color="#ff6f46"/><stop offset="0.4748" stop-color="#ff4a33"/><stop offset="0.5498" stop-color="#ff2922"/><stop offset="0.6603" stop-color="#ff0f14"/><stop offset="0.7954" stop-color="#ff000a"/><stop offset="1" stop-color="#ff0003"/></linearGradient>
<linearGradient id="s43" gradientUnits="userSpaceOnUse" x1="1174" x2="1907"><stop offset="0" stop-color="#00ff75"/><stop offset="0.1855" stop-color="#02ff82"/><stop offset="0.2196" stop-color="#29ff86"/><stop offset="0.2606" stop-color="#6aff8b"/><stop offset="0.2988" stop-color="#b7ff90"/><stop offset="0.3288" stop-color="#fffd94"/><stop offset="0.352" stop-color="#ffc979"/><stop offset="0.382" stop-color="#ff9a60"/><stop offset="0.4216" stop-color="#ff6f4a"/><stop offset="0.4748" stop-color="#ff4936"/><stop offset="0.5498" stop-color="#ff2924"/><stop offset="0.6603" stop-color="#ff0e15"/><stop offset="0.794" stop-color="#ff000b"/><stop offset="1" stop-color="#ff0003"/></linearGradient>
<linearGradient id="s44" gradientUnits="userSpaceOnUse" x1="1175" x2="1907"><stop offset="0" stop-color="#00ff78"/><stop offset="0.1844" stop-color="#01ff87"/><stop offset="0.2186" stop-color="#28ff8b"/><stop offset="0.2582" stop-color="#67ff90"/><stop offset="0.2964" stop-color="#b4ff96"/><stop offset="0.3279" stop-color="#fffd9b"/><stop offset="0.3511" stop-color="#ffc97e"/><stop offset="0.3811" stop-color="#ff9964"/><stop offset="0.4208" stop-color="#ff6e4d"/><stop offset="0.474" stop-color="#ff4938"/><stop offset="0.5492" stop-color="#ff2826"/><stop offset="0.6598" stop-color="#ff0e17"/><stop offset="0.791" stop-color="#ff000c"/><stop offset="1" stop-color="#ff0004"/></linearGradient>
<linearGradient id="s45" gradientUnits="userSpaceOnUse" x1="1175" x2="1907"><stop offset="0" stop-color="#00ff7c"/><stop offset="0.1858" stop-color="#02ff8c"/><stop offset="0.2199" stop-color="#2aff91"/><stop offset="0.2596" stop-color="#69ff96"/><stop offset="0.2978" stop-color="#b7ff9d"/><stop offset="0.3265" stop-color="#feffa3"/><stop offset="0.3511" stop-color="#ffc884"/><stop offset="0.3811" stop-color="#ff9869"/><stop offset="0.4208" stop-color="#ff6d50"/><stop offset="0.474" stop-color="#ff483b"/><stop offset="0.5492" stop-color="#ff2828"/><stop offset="0.6598" stop-color="#ff0e18"/><stop offset="0.7896" stop-color="#ff000e"/><stop offset="1" stop-color="#ff0005"/></linearGradient>
<linearGradient id="s46" gradientUnits="userSpaceOnUse" x1="1176" x2="1907"><stop offset="0" stop-color="#00ff80"/><stop offset="0.1847" stop-color="#01ff92"/><stop offset="0.2175" stop-color="#27ff96"/><stop offset="0.2572" stop-color="#66ff9c"/><stop offset="0.2941" stop-color="#b1ffa3"/><stop offset="0.3256" stop-color="#ffffa9"/><stop offset="0.3488" stop-color="#ffca8a"/><stop offset="0.3776" stop-color="#ff9b6f"/><stop offset="0.4159" stop-color="#ff7056"/><stop offset="0.4679" stop-color="#ff4a3f"/><stop offset="0.5417" stop-color="#ff292b"/><stop offset="0.6498" stop-color="#ff0f1b"/><stop offset="0.7825" stop-color="#ff000f"/><stop offset="1" stop-color="#ff0005"/></linearGradient>
<linearGradient id="s47" gradientUnits="userSpaceOnUse" x1="1176" x2="1907"><stop offset="0" stop-color="#00ff84"/><stop offset="0.186" stop-color="#02ff97"/><stop offset="0.2202" stop-color="#2aff9c"/><stop offset="0.2599" stop-color="#6bffa3"/><stop offset="0.2969" stop-color="#b8ffaa"/><stop offset="0.3256" stop-color="#fffeb0"/><stop offset="0.3475" stop-color="#ffcc91"/><stop offset="0.3762" stop-color="#ff9c75"/><stop offset="0.4145" stop-color="#ff715a"/><stop offset="0.4665" stop-color="#ff4a42"/><stop offset="0.539" stop-color="#ff2a2e"/><stop offset="0.6457" stop-color="#ff0f1c"/><stop offset="0.7784" stop-color="#ff0010"/><stop offset="1" stop-color="#ff0006"/></linearGradient>
<linearGradient id="s48" gradientUnits="userSpaceOnUse" x1="1177" x2="1907"><stop offset="0" stop-color="#00ff87"/><stop offset="0.1849" stop-color="#01ff9c"/><stop offset="0.2178" stop-color="#28ffa1"/><stop offset="0.2575" stop-color="#68ffa9"/><stop offset="0.2945" stop-color="#b5ffb0"/><stop offset="0.3247" stop-color="#fffeb7"/><stop offset="0.3466" stop-color="#ffcb97"/><stop offset="0.3753" stop-color="#ff9b79"/><stop offset="0.4137" stop-color="#ff705e"/><stop offset="0.4658" stop-color="#ff4a45"/><stop offset="0.5384" stop-color="#ff2930"/><stop offset="0.6452" stop-color="#ff0f1e"/><stop offset="0.7767" stop-color="#ff0011"/><stop offset="1" stop-color="#ff0006"/></linearGradient>
<linearGradient id="s49" gradientUnits="userSpaceOnUse" x1="1177" x2="1907"><stop offset="0" stop-color="#00ff8b"/><stop offset="0.1863" stop-color="#02ffa2"/><stop offset="0.2192" stop-color="#29ffa7"/><stop offset="0.2575" stop-color="#68ffaf"/><stop offset="0.2945" stop-color="#b5ffb7"/><stop offset="0.3247" stop-color="#fffdbe"/><stop offset="0.3466" stop-color="#ffca9d"/><stop offset="0.3753" stop-color="#ff9a7e"/><stop offset="0.4123" stop-color="#ff7062"/><stop offset="0.463" stop-color="#ff4b49"/><stop offset="0.5342" stop-color="#ff2a33"/><stop offset="0.6397" stop-color="#ff0f20"/><stop offset="0.7712" stop-color="#ff0013"/><stop offset="1" stop-color="#ff0007"/></linearGradient>
<linearGradient id="s50" gradientUnits="userSpaceOnUse" x1="1178" x2="1907"><stop offset="0" stop-color="#00ff8f"/><stop offset="0.1852" stop-color="#02ffa7"/><stop offset="0.2181" stop-color="#29ffad"/><stop offset="0.2565" stop-color="#68ffb5"/><stop offset="0.2936" stop-color="#b5ffbe"/><stop offset="0.3224" stop-color="#feffc6"/><stop offset="0.3471" stop-color="#ffc7a0"/><stop offset="0.3759" stop-color="#ff9881"/><stop offset="0.4143" stop-color="#ff6d64"/><stop offset="0.4664" stop-color="#ff484a"/><stop offset="0.5405" stop-color="#ff2733"/><stop offset="0.6488" stop-color="#ff0d20"/><stop offset="0.7737" stop-color="#ff0014"/><stop offset="1" stop-color="#ff0008"/></linearGradient>
<linearGradient id="s51" gradientUnits="userSpaceOnUse" x1="1178" x2="1907"><stop offset="0" stop-color="#00ff93"/><stop offset="0.1866" stop-color="#02ffad"/><stop offset="0.2195" stop-color="#2affb3"/><stop offset="0.2579" stop-color="#6affbc"/><stop offset="0.2936" stop-color="#b5ffc5"/><stop offset="0.3224" stop-color="#ffffce"/><stop offset="0.3457" stop-color="#ffc8a8"/><stop offset="0.3745" stop-color="#ff9987"/><stop offset="0.4115" stop-color="#ff6f69"/><stop offset="0.4623" stop-color="#ff494f"/><stop offset="0.5336" stop-color="#ff2937"/><stop offset="0.6392" stop-color="#ff0f23"/><stop offset="0.7668" stop-color="#ff0015"/><stop offset="1" stop-color="#ff0008"/></linearGradient>
<linearGradient id="s52" gradientUnits="userSpaceOnUse" x1="1179" x2="1907"><stop offset="0" stop-color="#00ff98"/><stop offset="0.1854" stop-color="#02ffb2"/><stop offset="0.2184" stop-color="#29ffb9"/><stop offset="0.2569" stop-color="#6affc2"/><stop offset="0.2926" stop-color="#b5ffcc"/><stop offset="0.3214" stop-color="#ffffd5"/><stop offset="0.3434" stop-color="#ffcab0"/><stop offset="0.3709" stop-color="#ff9c8e"/><stop offset="0.408" stop-color="#ff716f"/><stop offset="0.4574" stop-color="#ff4b53"/><stop offset="0.5275" stop-color="#ff2a3b"/><stop offset="0.6305" stop-color="#ff1026"/><stop offset="0.761" stop-color="#ff0017"/><stop offset="1" stop-color="#ff0009"/></linearGradient>
<linearGradient id="s53" gradientUnits="userSpaceOnUse" x1="1180" x2="1907"><stop offset="0" stop-color="#00ff9c"/><stop offset="0.1857" stop-color="#02ffb8"/><stop offset="0.2187" stop-color="#2bffc0"/><stop offset="0.2572" stop-color="#6cffc9"/><stop offset="0.293" stop-color="#b9ffd4"/><stop offset="0.3205" stop-color="#fffedd"/><stop offset="0.3425" stop-color="#ffcab6"/><stop offset="0.37" stop-color="#ff9b93"/><stop offset="0.4072" stop-color="#ff7073"/><stop offset="0.4567" stop-color="#ff4a56"/><stop offset="0.5268" stop-color="#ff2a3d"/><stop offset="0.63" stop-color="#ff0f27"/><stop offset="0.7579" stop-color="#ff0018"/><stop offset="1" stop-color="#ff000a"/></linearGradient>
<linearGradient id="s54" gradientUnits="userSpaceOnUse" x1="1180" x2="1907"><stop offset="0" stop-color="#00ffa0"/><stop offset="0.1829" stop-color="#00ffbe"/><stop offset="0.2091" stop-color="#1dffc4"/><stop offset="0.2462" stop-color="#57ffcd"/><stop offset="0.282" stop-color="#9fffd8"/><stop offset="0.3205" stop-color="#fffde4"/><stop offset="0.3425" stop-color="#ffc9bc"/><stop offset="0.37" stop-color="#ff9a98"/><stop offset="0.4072" stop-color="#ff6f77"/><stop offset="0.4567" stop-color="#ff4a59"/><stop offset="0.5268" stop-color="#ff293f"/><stop offset="0.63" stop-color="#ff0f29"/><stop offset="0.7565" stop-color="#ff0019"/><stop offset="1" stop-color="#ff000b"/></linearGradient>
<linearGradient id="s55" gradientUnits="userSpaceOnUse" x1="1181" x2="1906"><stop offset="0" stop-color="#00ffa4"/><stop offset="0.1793" stop-color="#00ffc3"/><stop offset="0.189" stop-color="#05ffc5"/><stop offset="0.2234" stop-color="#32ffce"/><stop offset="0.2607" stop-color="#73ffd9"/><stop offset="0.2952" stop-color="#c0ffe4"/><stop offset="0.3186" stop-color="#feffed"/><stop offset="0.3434" stop-color="#ffc5c0"/><stop offset="0.3724" stop-color="#ff959a"/><stop offset="0.4097" stop-color="#ff6c78"/><stop offset="0.4607" stop-color="#ff475a"/><stop offset="0.5338" stop-color="#ff263f"/><stop offset="0.6414" stop-color="#ff0c29"/><stop offset="0.76" stop-color="#ff001a"/><stop offset="1" stop-color="#ff000b"/></linearGradient>
<linearGradient id="s56" gradientUnits="userSpaceOnUse" x1="1181" x2="1904"><stop offset="0" stop-color="#00ffa9"/><stop offset="0.1757" stop-color="#00ffc8"/><stop offset="0.1881" stop-color="#03ffcb"/><stop offset="0.2213" stop-color="#2dffd3"/><stop offset="0.2586" stop-color="#6effdf"/><stop offset="0.2932" stop-color="#b9ffeb"/><stop offset="0.3195" stop-color="#fefff6"/><stop offset="0.343" stop-color="#ffc7c8"/><stop offset="0.3707" stop-color="#ff98a2"/><stop offset="0.408" stop-color="#ff6d7e"/><stop offset="0.4578" stop-color="#ff485f"/><stop offset="0.5284" stop-color="#ff2844"/><stop offset="0.6321" stop-color="#ff0e2c"/><stop offset="0.7552" stop-color="#ff001c"/><stop offset="1" stop-color="#ff000c"/></linearGradient>
<linearGradient id="s57" gradientUnits="userSpaceOnUse" x1="1182" x2="1902"><stop offset="0" stop-color="#00ffad"/><stop offset="0.1722" stop-color="#00ffcd"/><stop offset="0.1875" stop-color="#02ffd1"/><stop offset="0.2194" stop-color="#2affda"/><stop offset="0.2569" stop-color="#6bffe5"/><stop offset="0.2917" stop-color="#b6fff2"/><stop offset="0.3194" stop-color="#fffffe"/><stop offset="0.3403" stop-color="#ffccd3"/><stop offset="0.3681" stop-color="#ff9caa"/><stop offset="0.4042" stop-color="#ff7186"/><stop offset="0.4528" stop-color="#ff4b65"/><stop offset="0.5222" stop-color="#ff2a48"/><stop offset="0.6236" stop-color="#ff0f2f"/><stop offset="0.75" stop-color="#ff001e"/><stop offset="1" stop-color="#ff000d"/></linearGradient>
<linearGradient id="s58" gradientUnits="userSpaceOnUse" x1="1183" x2="1900"><stop offset="0" stop-color="#00ffb2"/><stop offset="0.1688" stop-color="#00ffd2"/><stop offset="0.1869" stop-color="#02ffd7"/><stop offset="0.219" stop-color="#2affe0"/><stop offset="0.2566" stop-color="#6affed"/><stop offset="0.2915" stop-color="#b6fffa"/><stop offset="0.311" stop-color="#e5fbff"/><stop offset="0.3222" stop-color="#fff6ff"/><stop offset="0.3445" stop-color="#ffc3d2"/><stop offset="0.3724" stop-color="#ff95aa"/><stop offset="0.41" stop-color="#ff6b85"/><stop offset="0.4616" stop-color="#ff4564"/><stop offset="0.5342" stop-color="#ff2647"/><stop offset="0.6416" stop-color="#ff0c2e"/><stop offset="0.7573" stop-color="#ff001f"/><stop offset="1" stop-color="#ff000e"/></linearGradient>
<linearGradient id="s59" gradientUnits="userSpaceOnUse" x1="1183" x2="1898"><stop offset="0" stop-color="#00ffb6"/><stop offset="0.165" stop-color="#00ffd7"/><stop offset="0.1888" stop-color="#03ffde"/><stop offset="0.221" stop-color="#2bffe7"/><stop offset="0.2587" stop-color="#6dfff5"/><stop offset="0.2895" stop-color="#aefdff"/><stop offset="0.3273" stop-color="#ffeafd"/><stop offset="0.351" stop-color="#ffb7cf"/><stop offset="0.3818" stop-color="#ff89a6"/><stop offset="0.4224" stop-color="#ff6081"/><stop offset="0.4783" stop-color="#ff3c5f"/><stop offset="0.558" stop-color="#ff1e43"/><stop offset="0.6769" stop-color="#ff072a"/><stop offset="0.772" stop-color="#ff001f"/><stop offset="1" stop-color="#ff000f"/></linearGradient>
<linearGradient id="s60" gradientUnits="userSpaceOnUse" x1="1184" x2="1896"><stop offset="0" stop-color="#00ffbb"/><stop offset="0.1615" stop-color="#00ffdd"/><stop offset="0.1882" stop-color="#02ffe4"/><stop offset="0.2205" stop-color="#2bffee"/><stop offset="0.257" stop-color="#6afffc"/><stop offset="0.2809" stop-color="#98f8ff"/><stop offset="0.3301" stop-color="#ffe3fe"/><stop offset="0.3539" stop-color="#ffb1d1"/><stop offset="0.3848" stop-color="#ff85a7"/><stop offset="0.427" stop-color="#ff5c81"/><stop offset="0.4846" stop-color="#ff3960"/><stop offset="0.5674" stop-color="#ff1b42"/><stop offset="0.691" stop-color="#ff052a"/><stop offset="0.7823" stop-color="#ff001f"/><stop offset="1" stop-color="#ff0010"/></linearGradient>
<linearGradient id="s61" gradientUnits="userSpaceOnUse" x1="1185" x2="1894"><stop offset="0" stop-color="#00ffbf"/><stop offset="0.158" stop-color="#00ffe2"/><stop offset="0.1876" stop-color="#01ffeb"/><stop offset="0.2186" stop-color="#28fff5"/><stop offset="0.2525" stop-color="#60fcff"/><stop offset="0.3061" stop-color="#c6e6ff"/><stop offset="0.3329" stop-color="#ffdbff"/><stop offset="0.3583" stop-color="#ffa9d0"/><stop offset="0.3907" stop-color="#ff7da6"/><stop offset="0.4344" stop-color="#ff5680"/><stop offset="0.4951" stop-color="#ff345e"/><stop offset="0.5839" stop-color="#ff1740"/><stop offset="0.7137" stop-color="#ff0228"/><stop offset="0.9492" stop-color="#ff0013"/><stop offset="1" stop-color="#ff0011"/></linearGradient>
<linearGradient id="s62" gradientUnits="userSpaceOnUse" x1="1185" x2="1892"><stop offset="0" stop-color="#00ffc4"/><stop offset="0.1556" stop-color="#00ffe7"/><stop offset="0.1895" stop-color="#02fff2"/><stop offset="0.2207" stop-color="#29fffd"/><stop offset="0.2673" stop-color="#75efff"/><stop offset="0.3225" stop-color="#e0d9ff"/><stop offset="0.338" stop-color="#ffd1fd"/><stop offset="0.3635" stop-color="#ffa2cf"/><stop offset="0.3975" stop-color="#ff76a5"/><stop offset="0.4427" stop-color="#ff507e"/><stop offset="0.5064" stop-color="#ff2f5c"/><stop offset="0.5997" stop-color="#ff133f"/><stop offset="0.7327" stop-color="#ff0027"/><stop offset="0.9788" stop-color="#ff0013"/><stop offset="1" stop-color="#ff0011"/></linearGradient>
<linearGradient id="s63" gradientUnits="userSpaceOnUse" x1="1186" x2="1890"><stop offset="0" stop-color="#00ffc9"/><stop offset="0.152" stop-color="#00ffed"/><stop offset="0.1889" stop-color="#01fff8"/><stop offset="0.2159" stop-color="#22fcff"/><stop offset="0.267" stop-color="#72e8ff"/><stop offset="0.3239" stop-color="#dcd1ff"/><stop offset="0.3409" stop-color="#ffcafe"/><stop offset="0.3679" stop-color="#ff9acf"/><stop offset="0.4034" stop-color="#ff70a3"/><stop offset="0.4517" stop-color="#ff4a7c"/><stop offset="0.5199" stop-color="#ff295a"/><stop offset="0.6207" stop-color="#ff0f3c"/><stop offset="0.7429" stop-color="#ff0028"/><stop offset="0.9929" stop-color="#ff0013"/><stop offset="1" stop-color="#ff0012"/></linearGradient>
<linearGradient id="s64" gradientUnits="userSpaceOnUse" x1="1187" x2="1888"><stop offset="0" stop-color="#00ffce"/><stop offset="0.1498" stop-color="#00fff2"/><stop offset="0.1897" stop-color="#02feff"/><stop offset="0.2282" stop-color="#32f0ff"/><stop offset="0.2825" stop-color="#89dcff"/><stop offset="0.3409" stop-color="#f9c4ff"/><stop offset="0.3452" stop-color="#ffc0fd"/><stop offset="0.3738" stop-color="#ff91cc"/><stop offset="0.4108" stop-color="#ff68a1"/><stop offset="0.4608" stop-color="#ff447a"/><stop offset="0.5321" stop-color="#ff2558"/><stop offset="0.6391" stop-color="#ff0b3a"/><stop offset="0.7504" stop-color="#ff0028"/><stop offset="1" stop-color="#ff0013"/></linearGradient>
<linearGradient id="s65" gradientUnits="userSpaceOnUse" x1="1187" x2="1886"><stop offset="0" stop-color="#00ffd3"/><stop offset="0.1474" stop-color="#00fff8"/><stop offset="0.1774" stop-color="#00fcff"/><stop offset="0.1917" stop-color="#03f7ff"/><stop offset="0.2318" stop-color="#34e9ff"/><stop offset="0.2876" stop-color="#8dd4ff"/><stop offset="0.3491" stop-color="#ffbafe"/><stop offset="0.3777" stop-color="#ff8dcd"/><stop offset="0.4149" stop-color="#ff65a2"/><stop offset="0.4664" stop-color="#ff417b"/><stop offset="0.5393" stop-color="#ff2258"/><stop offset="0.6466" stop-color="#ff0a3b"/><stop offset="0.7525" stop-color="#ff002a"/><stop offset="1" stop-color="#ff0014"/></linearGradient>
<linearGradient id="s66" gradientUnits="userSpaceOnUse" x1="1188" x2="1884"><stop offset="0" stop-color="#00ffd8"/><stop offset="0.1552" stop-color="#00fdff"/><stop offset="0.1911" stop-color="#02f1ff"/><stop offset="0.2299" stop-color="#30e3ff"/><stop offset="0.2859" stop-color="#86ceff"/><stop offset="0.3463" stop-color="#f4b6ff"/><stop offset="0.3534" stop-color="#ffb1fc"/><stop offset="0.3822" stop-color="#ff86cd"/><stop offset="0.421" stop-color="#ff5fa1"/><stop offset="0.4741" stop-color="#ff3c7a"/><stop offset="0.5489" stop-color="#ff1f58"/><stop offset="0.6595" stop-color="#ff083a"/><stop offset="0.7557" stop-color="#ff002b"/><stop offset="1" stop-color="#ff0015"/></linearGradient>
<linearGradient id="s67" gradientUnits="userSpaceOnUse" x1="1189" x2="1882"><stop offset="0" stop-color="#00ffdd"/><stop offset="0.1356" stop-color="#00fdff"/><stop offset="0.1905" stop-color="#02eaff"/><stop offset="0.2294" stop-color="#2eddff"/><stop offset="0.2872" stop-color="#85c8ff"/><stop offset="0.3564" stop-color="#ffabfd"/><stop offset="0.3867" stop-color="#ff80cc"/><stop offset="0.4257" stop-color="#ff5ba1"/><stop offset="0.4791" stop-color="#ff3a7a"/><stop offset="0.5541" stop-color="#ff1d58"/><stop offset="0.6667" stop-color="#ff073b"/><stop offset="0.759" stop-color="#ff002c"/><stop offset="1" stop-color="#ff0016"/></linearGradient>
<linearGradient id="s68" gradientUnits="userSpaceOnUse" x1="1189" x2="1880"><stop offset="0" stop-color="#00ffe2"/><stop offset="0.1158" stop-color="#00fdff"/><stop offset="0.1925" stop-color="#02e4ff"/><stop offset="0.233" stop-color="#31d6ff"/><stop offset="0.2923" stop-color="#88c0ff"/><stop offset="0.3603" stop-color="#ffa5fe"/><stop offset="0.3907" stop-color="#ff7cce"/><stop offset="0.4313" stop-color="#ff57a2"/><stop offset="0.4863" stop-color="#ff367a"/><stop offset="0.563" stop-color="#ff1b58"/><stop offset="0.6773" stop-color="#ff053b"/><stop offset="0.7656" stop-color="#ff002d"/><stop offset="1" stop-color="#ff0017"/></linearGradient>
<linearGradient id="s69" gradientUnits="userSpaceOnUse" x1="1190" x2="1878"><stop offset="0" stop-color="#00ffe7"/><stop offset="0.0959" stop-color="#00fdff"/><stop offset="0.1919" stop-color="#02deff"/><stop offset="0.2326" stop-color="#2fd0ff"/><stop offset="0.2922" stop-color="#84bbff"/><stop offset="0.3561" stop-color="#f2a3ff"/><stop offset="0.3634" stop-color="#ffa0ff"/><stop offset="0.3939" stop-color="#ff78cf"/><stop offset="0.4346" stop-color="#ff54a3"/><stop offset="0.4898" stop-color="#ff347c"/><stop offset="0.5683" stop-color="#ff1959"/><stop offset="0.6846" stop-color="#ff043b"/><stop offset="0.7776" stop-color="#ff002d"/><stop offset="1" stop-color="#ff0018"/></linearGradient>
<linearGradient id="s70" gradientUnits="userSpaceOnUse" x1="1191" x2="1876"><stop offset="0" stop-color="#00ffed"/><stop offset="0.0759" stop-color="#00fdff"/><stop offset="0.1927" stop-color="#02d8ff"/><stop offset="0.235" stop-color="#31caff"/><stop offset="0.2964" stop-color="#88b4ff"/><stop offset="0.3679" stop-color="#ff98fd"/><stop offset="0.4" stop-color="#ff71cc"/><stop offset="0.4423" stop-color="#ff4ea1"/><stop offset="0.4993" stop-color="#ff307a"/><stop offset="0.5796" stop-color="#ff1658"/><stop offset="0.6993" stop-color="#ff023a"/><stop offset="0.892" stop-color="#ff0022"/><stop offset="1" stop-color="#ff0019"/></linearGradient>
<linearGradient id="s71" gradientUnits="userSpaceOnUse" x1="1192" x2="1875"><stop offset="0" stop-color="#00fff2"/><stop offset="0.0556" stop-color="#00fcff"/><stop offset="0.1918" stop-color="#02d3ff"/><stop offset="0.2343" stop-color="#2fc4ff"/><stop offset="0.2958" stop-color="#84afff"/><stop offset="0.3631" stop-color="#f396ff"/><stop offset="0.3704" stop-color="#ff93fe"/><stop offset="0.4026" stop-color="#ff6dce"/><stop offset="0.4451" stop-color="#ff4ba2"/><stop offset="0.5022" stop-color="#ff2e7b"/><stop offset="0.5827" stop-color="#ff1559"/><stop offset="0.7028" stop-color="#ff023b"/><stop offset="0.8946" stop-color="#ff0023"/><stop offset="1" stop-color="#ff001a"/></linearGradient>
<linearGradient id="s72" gradientUnits="userSpaceOnUse" x1="1192" x2="1873"><stop offset="0" stop-color="#00fff8"/><stop offset="0.0382" stop-color="#00fcff"/><stop offset="0.1938" stop-color="#02cdff"/><stop offset="0.2379" stop-color="#31beff"/><stop offset="0.301" stop-color="#87a9ff"/><stop offset="0.3686" stop-color="#f590ff"/><stop offset="0.3759" stop-color="#ff8cfc"/><stop offset="0.4082" stop-color="#ff68cd"/><stop offset="0.4508" stop-color="#ff48a2"/><stop offset="0.5095" stop-color="#ff2b7b"/><stop offset="0.5918" stop-color="#ff1359"/><stop offset="0.7151" stop-color="#ff003b"/><stop offset="0.9119" stop-color="#ff0022"/><stop offset="1" stop-color="#ff001b"/></linearGradient>
<linearGradient id="s73" gradientUnits="userSpaceOnUse" x1="1193" x2="1871"><stop offset="0" stop-color="#00fffd"/><stop offset="0.1932" stop-color="#02c8ff"/><stop offset="0.2375" stop-color="#2fbaff"/><stop offset="0.3024" stop-color="#86a4ff"/><stop offset="0.3791" stop-color="#ff87fd"/><stop offset="0.413" stop-color="#ff63cd"/><stop offset="0.4572" stop-color="#ff43a1"/><stop offset="0.5177" stop-color="#ff277a"/><stop offset="0.6032" stop-color="#ff1058"/><stop offset="0.7242" stop-color="#ff003b"/><stop offset="0.9233" stop-color="#ff0022"/><stop offset="1" stop-color="#ff001c"/></linearGradient>
<linearGradient id="s74" gradientUnits="userSpaceOnUse" x1="1194" x2="1869"><stop offset="0" stop-color="#00fbff"/><stop offset="0.1941" stop-color="#02c3ff"/><stop offset="0.24" stop-color="#31b4ff"/><stop offset="0.3052" stop-color="#879eff"/><stop offset="0.3822" stop-color="#ff83fe"/><stop offset="0.4163" stop-color="#ff60ce"/><stop offset="0.4607" stop-color="#ff41a3"/><stop offset="0.5215" stop-color="#ff267b"/><stop offset="0.6074" stop-color="#ff0f59"/><stop offset="0.7259" stop-color="#ff003d"/><stop offset="0.923" stop-color="#ff0024"/><stop offset="1" stop-color="#ff001e"/></linearGradient>
<linearGradient id="s75" gradientUnits="userSpaceOnUse" x1="1195" x2="1867"><stop offset="0" stop-color="#00f5ff"/><stop offset="0.1935" stop-color="#02beff"/><stop offset="0.2396" stop-color="#2fafff"/><stop offset="0.3065" stop-color="#8599ff"/><stop offset="0.3795" stop-color="#f580ff"/><stop offset="0.3869" stop-color="#ff7cfd"/><stop offset="0.4211" stop-color="#ff5bcd"/><stop offset="0.4673" stop-color="#ff3da1"/><stop offset="0.5298" stop-color="#ff227a"/><stop offset="0.6176" stop-color="#ff0d58"/><stop offset="0.7292" stop-color="#ff003e"/><stop offset="0.9256" stop-color="#ff0025"/><stop offset="1" stop-color="#ff001f"/></linearGradient>
<linearGradient id="s76" gradientUnits="userSpaceOnUse" x1="1195" x2="1865"><stop offset="0" stop-color="#00f0ff"/><stop offset="0.1955" stop-color="#02b9ff"/><stop offset="0.2433" stop-color="#31aaff"/><stop offset="0.3119" stop-color="#8894ff"/><stop offset="0.391" stop-color="#ff78fe"/><stop offset="0.4269" stop-color="#ff57cd"/><stop offset="0.4731" stop-color="#ff3aa2"/><stop offset="0.5358" stop-color="#ff207b"/><stop offset="0.6254" stop-color="#ff0b59"/><stop offset="0.7313" stop-color="#ff0040"/><stop offset="0.9269" stop-color="#ff0026"/><stop offset="1" stop-color="#ff0020"/></linearGradient>
<linearGradient id="s77" gradientUnits="userSpaceOnUse" x1="1196" x2="1863"><stop offset="0" stop-color="#00ebff"/><stop offset="0.1949" stop-color="#02b4ff"/><stop offset="0.2429" stop-color="#30a6ff"/><stop offset="0.3118" stop-color="#8590ff"/><stop offset="0.3868" stop-color="#f477ff"/><stop offset="0.3958" stop-color="#ff72fc"/><stop offset="0.4318" stop-color="#ff52cc"/><stop offset="0.4798" stop-color="#ff36a1"/><stop offset="0.5442" stop-color="#ff1d7a"/><stop offset="0.6357" stop-color="#ff0958"/><stop offset="0.7346" stop-color="#ff0041"/><stop offset="0.9295" stop-color="#ff0027"/><stop offset="1" stop-color="#ff0021"/></linearGradient>
<linearGradient id="s78" gradientUnits="userSpaceOnUse" x1="1197" x2="1861"><stop offset="0" stop-color="#00e6ff"/><stop offset="0.1958" stop-color="#02b0ff"/><stop offset="0.2455" stop-color="#31a1ff"/><stop offset="0.3163" stop-color="#888aff"/><stop offset="0.3991" stop-color="#ff6efd"/><stop offset="0.4352" stop-color="#ff4fce"/><stop offset="0.4834" stop-color="#ff34a2"/><stop offset="0.5497" stop-color="#ff1c7b"/><stop offset="0.6431" stop-color="#ff0858"/><stop offset="0.7364" stop-color="#ff0042"/><stop offset="0.9292" stop-color="#ff0028"/><stop offset="1" stop-color="#ff0022"/></linearGradient>
<linearGradient id="s79" gradientUnits="userSpaceOnUse" x1="1198" x2="1859"><stop offset="0" stop-color="#00e1ff"/><stop offset="0.1952" stop-color="#02acff"/><stop offset="0.2451" stop-color="#309dff"/><stop offset="0.3177" stop-color="#8786ff"/><stop offset="0.4024" stop-color="#ff6afe"/><stop offset="0.4402" stop-color="#ff4bcd"/><stop offset="0.4902" stop-color="#ff30a1"/><stop offset="0.5567" stop-color="#ff197a"/><stop offset="0.652" stop-color="#ff0658"/><stop offset="0.7398" stop-color="#ff0044"/><stop offset="0.9319" stop-color="#ff0029"/><stop offset="1" stop-color="#ff0023"/></linearGradient>
<linearGradient id="s80" gradientUnits="userSpaceOnUse" x1="1198" x2="1857"><stop offset="0" stop-color="#00dcff"/><stop offset="0.1973" stop-color="#02a7ff"/><stop offset="0.2489" stop-color="#3198ff"/><stop offset="0.3217" stop-color="#8782ff"/><stop offset="0.4006" stop-color="#f668ff"/><stop offset="0.4082" stop-color="#ff65fc"/><stop offset="0.4461" stop-color="#ff48cd"/><stop offset="0.4962" stop-color="#ff2ea1"/><stop offset="0.5645" stop-color="#ff177a"/><stop offset="0.6616" stop-color="#ff0558"/><stop offset="0.7466" stop-color="#ff0044"/><stop offset="0.9393" stop-color="#ff002a"/><stop offset="1" stop-color="#ff0024"/></linearGradient>
<linearGradient id="s81" gradientUnits="userSpaceOnUse" x1="1199" x2="1855"><stop offset="0" stop-color="#00d8ff"/><stop offset="0.1966" stop-color="#02a3ff"/><stop offset="0.2485" stop-color="#3094ff"/><stop offset="0.3232" stop-color="#867eff"/><stop offset="0.4116" stop-color="#ff61fd"/><stop offset="0.4497" stop-color="#ff45ce"/><stop offset="0.5" stop-color="#ff2ca2"/><stop offset="0.5686" stop-color="#ff167b"/><stop offset="0.6662" stop-color="#ff0459"/><stop offset="0.7546" stop-color="#ff0045"/><stop offset="0.9497" stop-color="#ff002a"/><stop offset="1" stop-color="#ff0026"/></linearGradient>
<linearGradient id="s82" gradientUnits="userSpaceOnUse" x1="1200" x2="1853"><stop offset="0" stop-color="#00d3ff"/><stop offset="0.1975" stop-color="#029fff"/><stop offset="0.2511" stop-color="#3290ff"/><stop offset="0.3277" stop-color="#8979ff"/><stop offset="0.415" stop-color="#ff5efe"/><stop offset="0.4548" stop-color="#ff41cd"/><stop offset="0.5069" stop-color="#ff28a1"/><stop offset="0.5773" stop-color="#ff137b"/><stop offset="0.6769" stop-color="#ff0358"/><stop offset="0.8254" stop-color="#ff003b"/><stop offset="1" stop-color="#ff0027"/></linearGradient>
<linearGradient id="s83" gradientUnits="userSpaceOnUse" x1="1201" x2="1851"><stop offset="0" stop-color="#00ceff"/><stop offset="0.1969" stop-color="#029bff"/><stop offset="0.2492" stop-color="#2e8dff"/><stop offset="0.3262" stop-color="#8476ff"/><stop offset="0.4092" stop-color="#f25dff"/><stop offset="0.42" stop-color="#ff59fd"/><stop offset="0.46" stop-color="#ff3ecd"/><stop offset="0.5123" stop-color="#ff26a2"/><stop offset="0.5846" stop-color="#ff117a"/><stop offset="0.6862" stop-color="#ff0158"/><stop offset="0.8385" stop-color="#ff003a"/><stop offset="1" stop-color="#ff0028"/></linearGradient>
<linearGradient id="s84" gradientUnits="userSpaceOnUse" x1="1202" x2="1849"><stop offset="0" stop-color="#00caff"/><stop offset="0.1978" stop-color="#0297ff"/><stop offset="0.2535" stop-color="#3288ff"/><stop offset="0.3323" stop-color="#8971ff"/><stop offset="0.4235" stop-color="#ff55fd"/><stop offset="0.4637" stop-color="#ff3bce"/><stop offset="0.5178" stop-color="#ff24a2"/><stop offset="0.5904" stop-color="#ff107b"/><stop offset="0.694" stop-color="#ff0158"/><stop offset="0.8485" stop-color="#ff003b"/><stop offset="1" stop-color="#ff0029"/></linearGradient>
<linearGradient id="s85" gradientUnits="userSpaceOnUse" x1="1202" x2="1847"><stop offset="0" stop-color="#00c6ff"/><stop offset="0.1984" stop-color="#0294ff"/><stop offset="0.2527" stop-color="#2f85ff"/><stop offset="0.3318" stop-color="#846fff"/><stop offset="0.4186" stop-color="#f355ff"/><stop offset="0.4295" stop-color="#ff51fc"/><stop offset="0.4713" stop-color="#ff37cc"/><stop offset="0.5271" stop-color="#ff20a0"/><stop offset="0.6031" stop-color="#ff0d79"/><stop offset="0.7101" stop-color="#ff0057"/><stop offset="0.8698" stop-color="#ff0039"/><stop offset="1" stop-color="#ff002b"/></linearGradient>
<linearGradient id="s86" gradientUnits="userSpaceOnUse" x1="1203" x2="1845"><stop offset="0" stop-color="#00c2ff"/><stop offset="0.1994" stop-color="#0290ff"/><stop offset="0.2555" stop-color="#3081ff"/><stop offset="0.3364" stop-color="#866bff"/><stop offset="0.433" stop-color="#ff4efd"/><stop offset="0.4751" stop-color="#ff35cd"/><stop offset="0.5312" stop-color="#ff1fa1"/><stop offset="0.6075" stop-color="#ff0c7a"/><stop offset="0.7118" stop-color="#ff0058"/><stop offset="0.8707" stop-color="#ff003b"/><stop offset="1" stop-color="#ff002c"/></linearGradient>
<linearGradient id="s87" gradientUnits="userSpaceOnUse" x1="1204" x2="1843"><stop offset="0" stop-color="#00beff"/><stop offset="0.1987" stop-color="#028dff"/><stop offset="0.2551" stop-color="#2f7eff"/><stop offset="0.338" stop-color="#8567ff"/><stop offset="0.4366" stop-color="#ff4bfe"/><stop offset="0.4789" stop-color="#ff33ce"/><stop offset="0.5352" stop-color="#ff1da2"/><stop offset="0.6119" stop-color="#ff0b7b"/><stop offset="0.7121" stop-color="#ff005b"/><stop offset="0.8685" stop-color="#ff003d"/><stop offset="1" stop-color="#ff002d"/></linearGradient>
<linearGradient id="s88" gradientUnits="userSpaceOnUse" x1="1205" x2="1842"><stop offset="0" stop-color="#00baff"/><stop offset="0.1994" stop-color="#028aff"/><stop offset="0.2575" stop-color="#307aff"/><stop offset="0.3422" stop-color="#8863ff"/><stop offset="0.4396" stop-color="#ff48fe"/><stop offset="0.4835" stop-color="#ff30cd"/><stop offset="0.5416" stop-color="#ff1ba1"/><stop offset="0.6201" stop-color="#ff097a"/><stop offset="0.7143" stop-color="#ff005c"/><stop offset="0.8713" stop-color="#ff003e"/><stop offset="1" stop-color="#ff002e"/></linearGradient>
<linearGradient id="s89" gradientUnits="userSpaceOnUse" x1="1206" x2="1840"><stop offset="0" stop-color="#00b6ff"/><stop offset="0.1987" stop-color="#0286ff"/><stop offset="0.2571" stop-color="#2f77ff"/><stop offset="0.3423" stop-color="#8561ff"/><stop offset="0.4338" stop-color="#f347ff"/><stop offset="0.4448" stop-color="#ff44fd"/><stop offset="0.489" stop-color="#ff2dcd"/><stop offset="0.5473" stop-color="#ff19a1"/><stop offset="0.6262" stop-color="#ff087b"/><stop offset="0.7145" stop-color="#ff005e"/><stop offset="0.8691" stop-color="#ff0040"/><stop offset="1" stop-color="#ff0030"/></linearGradient>
<linearGradient id="s90" gradientUnits="userSpaceOnUse" x1="1207" x2="1838"><stop offset="0" stop-color="#00b2ff"/><stop offset="0.1997" stop-color="#0283ff"/><stop offset="0.2599" stop-color="#3174ff"/><stop offset="0.3471" stop-color="#875dff"/><stop offset="0.4406" stop-color="#f643ff"/><stop offset="0.4485" stop-color="#ff41fe"/><stop offset="0.4929" stop-color="#ff2bce"/><stop offset="0.5515" stop-color="#ff17a3"/><stop offset="0.6323" stop-color="#ff077b"/><stop offset="0.7163" stop-color="#ff0060"/><stop offset="0.87" stop-color="#ff0041"/><stop offset="1" stop-color="#ff0031"/></linearGradient>
<linearGradient id="s91" gradientUnits="userSpaceOnUse" x1="1207" x2="1836"><stop offset="0" stop-color="#00afff"/><stop offset="0.2003" stop-color="#0280ff"/><stop offset="0.2607" stop-color="#2f71ff"/><stop offset="0.3482" stop-color="#855aff"/><stop offset="0.4436" stop-color="#f441ff"/><stop offset="0.4547" stop-color="#ff3dfc"/><stop offset="0.5008" stop-color="#ff27cc"/><stop offset="0.5612" stop-color="#ff14a1"/><stop offset="0.6439" stop-color="#ff057a"/><stop offset="0.725" stop-color="#ff0060"/><stop offset="0.8808" stop-color="#ff0041"/><stop offset="1" stop-color="#ff0033"/></linearGradient>
<linearGradient id="s92" gradientUnits="userSpaceOnUse" x1="1208" x2="1834"><stop offset="0" stop-color="#00abff"/><stop offset="0.2013" stop-color="#027dff"/><stop offset="0.2636" stop-color="#316eff"/><stop offset="0.353" stop-color="#8757ff"/><stop offset="0.4505" stop-color="#f73dff"/><stop offset="0.4585" stop-color="#ff3afd"/><stop offset="0.5048" stop-color="#ff25cd"/><stop offset="0.5655" stop-color="#ff13a2"/><stop offset="0.6486" stop-color="#ff047b"/><stop offset="0.7332" stop-color="#ff0060"/><stop offset="0.8914" stop-color="#ff0042"/><stop offset="1" stop-color="#ff0034"/></linearGradient>
<linearGradient id="s93" gradientUnits="userSpaceOnUse" x1="1209" x2="1832"><stop offset="0" stop-color="#00a8ff"/><stop offset="0.2006" stop-color="#027aff"/><stop offset="0.2632" stop-color="#2f6bff"/><stop offset="0.3547" stop-color="#8654ff"/><stop offset="0.4526" stop-color="#f43bff"/><stop offset="0.4623" stop-color="#ff38fe"/><stop offset="0.5088" stop-color="#ff23ce"/><stop offset="0.5714" stop-color="#ff11a2"/><stop offset="0.6565" stop-color="#ff037b"/><stop offset="0.7769" stop-color="#ff0058"/><stop offset="0.9551" stop-color="#ff003b"/><stop offset="1" stop-color="#ff0035"/></linearGradient>
<linearGradient id="s94" gradientUnits="userSpaceOnUse" x1="1210" x2="1830"><stop offset="0" stop-color="#00a4ff"/><stop offset="0.2016" stop-color="#0277ff"/><stop offset="0.2661" stop-color="#3168ff"/><stop offset="0.3597" stop-color="#8851ff"/><stop offset="0.4597" stop-color="#f837ff"/><stop offset="0.4677" stop-color="#ff35fd"/><stop offset="0.5161" stop-color="#ff20cc"/><stop offset="0.579" stop-color="#ff0fa1"/><stop offset="0.6661" stop-color="#ff017a"/><stop offset="0.7887" stop-color="#ff0058"/><stop offset="0.971" stop-color="#ff003a"/><stop offset="1" stop-color="#ff0037"/></linearGradient>
<linearGradient id="s95" gradientUnits="userSpaceOnUse" x1="1211" x2="1828"><stop offset="0" stop-color="#00a1ff"/><stop offset="0.201" stop-color="#0275ff"/><stop offset="0.2658" stop-color="#2f65ff"/><stop offset="0.3598" stop-color="#864fff"/><stop offset="0.4716" stop-color="#ff32fd"/><stop offset="0.5203" stop-color="#ff1fcd"/><stop offset="0.5851" stop-color="#ff0ea1"/><stop offset="0.6726" stop-color="#ff017a"/><stop offset="0.7974" stop-color="#ff0058"/><stop offset="0.9822" stop-color="#ff003a"/><stop offset="1" stop-color="#ff0038"/></linearGradient>
<linearGradient id="s96" gradientUnits="userSpaceOnUse" x1="1212" x2="1826"><stop offset="0" stop-color="#009eff"/><stop offset="0.202" stop-color="#0272ff"/><stop offset="0.2687" stop-color="#3162ff"/><stop offset="0.3648" stop-color="#884bff"/><stop offset="0.4756" stop-color="#ff30fe"/><stop offset="0.5244" stop-color="#ff1dce"/><stop offset="0.5896" stop-color="#ff0ca2"/><stop offset="0.6775" stop-color="#ff007b"/><stop offset="0.8029" stop-color="#ff0059"/><stop offset="0.9886" stop-color="#ff003b"/><stop offset="1" stop-color="#ff003a"/></linearGradient>
<linearGradient id="s97" gradientUnits="userSpaceOnUse" x1="1213" x2="1824"><stop offset="0" stop-color="#009bff"/><stop offset="0.2013" stop-color="#026fff"/><stop offset="0.2684" stop-color="#3060ff"/><stop offset="0.365" stop-color="#8549ff"/><stop offset="0.4812" stop-color="#ff2dfd"/><stop offset="0.5319" stop-color="#ff1acd"/><stop offset="0.599" stop-color="#ff0aa1"/><stop offset="0.6907" stop-color="#ff007a"/><stop offset="0.82" stop-color="#ff0057"/><stop offset="1" stop-color="#ff003b"/></linearGradient>
<linearGradient id="s98" gradientUnits="userSpaceOnUse" x1="1213" x2="1822"><stop offset="0" stop-color="#0098ff"/><stop offset="0.2036" stop-color="#026cff"/><stop offset="0.2726" stop-color="#315dff"/><stop offset="0.3711" stop-color="#8846ff"/><stop offset="0.486" stop-color="#ff2afd"/><stop offset="0.5369" stop-color="#ff18cd"/><stop offset="0.6043" stop-color="#ff09a2"/><stop offset="0.6946" stop-color="#ff007b"/><stop offset="0.8243" stop-color="#ff0058"/><stop offset="1" stop-color="#ff003d"/></linearGradient>
<linearGradient id="s99" gradientUnits="userSpaceOnUse" x1="1214" x2="1820"><stop offset="0" stop-color="#0095ff"/><stop offset="0.203" stop-color="#026aff"/><stop offset="0.2723" stop-color="#305bff"/><stop offset="0.3729" stop-color="#8744ff"/><stop offset="0.4901" stop-color="#ff28fe"/><stop offset="0.5413" stop-color="#ff17ce"/><stop offset="0.6089" stop-color="#ff08a3"/><stop offset="0.6947" stop-color="#ff007e"/><stop offset="0.8218" stop-color="#ff005b"/><stop offset="1" stop-color="#ff003e"/></linearGradient>
<linearGradient id="s100" gradientUnits="userSpaceOnUse" x1="1215" x2="1818"><stop offset="0" stop-color="#0092ff"/><stop offset="0.204" stop-color="#0268ff"/><stop offset="0.2753" stop-color="#3158ff"/><stop offset="0.3781" stop-color="#8941ff"/><stop offset="0.4959" stop-color="#ff25fd"/><stop offset="0.5489" stop-color="#ff14cd"/><stop offset="0.6186" stop-color="#ff06a1"/><stop offset="0.6982" stop-color="#ff007f"/><stop offset="0.8259" stop-color="#ff005c"/><stop offset="1" stop-color="#ff0040"/></linearGradient>
<linearGradient id="s101" gradientUnits="userSpaceOnUse" x1="1216" x2="1816"><stop offset="0" stop-color="#008fff"/><stop offset="0.2033" stop-color="#0265ff"/><stop offset="0.275" stop-color="#3056ff"/><stop offset="0.3783" stop-color="#863fff"/><stop offset="0.5" stop-color="#ff23fe"/><stop offset="0.5533" stop-color="#ff13ce"/><stop offset="0.6233" stop-color="#ff05a2"/><stop offset="0.7" stop-color="#ff0081"/><stop offset="0.8267" stop-color="#ff005e"/><stop offset="1" stop-color="#ff0041"/></linearGradient>
<linearGradient id="s102" gradientUnits="userSpaceOnUse" x1="1217" x2="1814"><stop offset="0" stop-color="#008cff"/><stop offset="0.2044" stop-color="#0263ff"/><stop offset="0.2781" stop-color="#3153ff"/><stop offset="0.3836" stop-color="#893cff"/><stop offset="0.5042" stop-color="#ff21fe"/><stop offset="0.5578" stop-color="#ff11ce"/><stop offset="0.6298" stop-color="#ff04a2"/><stop offset="0.7102" stop-color="#ff0081"/><stop offset="0.8409" stop-color="#ff005d"/><stop offset="1" stop-color="#ff0043"/></linearGradient>
<linearGradient id="s103" gradientUnits="userSpaceOnUse" x1="1218" x2="1812"><stop offset="0" stop-color="#0089ff"/><stop offset="0.2037" stop-color="#0261ff"/><stop offset="0.2761" stop-color="#2f52ff"/><stop offset="0.3822" stop-color="#853bff"/><stop offset="0.5101" stop-color="#ff1ffd"/><stop offset="0.5657" stop-color="#ff0fcd"/><stop offset="0.638" stop-color="#ff03a1"/><stop offset="0.7374" stop-color="#ff007a"/><stop offset="0.8771" stop-color="#ff0058"/><stop offset="1" stop-color="#ff0045"/></linearGradient>
<linearGradient id="s104" gradientUnits="userSpaceOnUse" x1="1219" x2="1811"><stop offset="0" stop-color="#0086ff"/><stop offset="0.2044" stop-color="#025eff"/><stop offset="0.2804" stop-color="#314fff"/><stop offset="0.3885" stop-color="#8838ff"/><stop offset="0.5135" stop-color="#ff1dfe"/><stop offset="0.5693" stop-color="#ff0ece"/><stop offset="0.6436" stop-color="#ff02a2"/><stop offset="0.7449" stop-color="#ff007a"/><stop offset="0.8868" stop-color="#ff0058"/><stop offset="1" stop-color="#ff0046"/></linearGradient>
<linearGradient id="s105" gradientUnits="userSpaceOnUse" x1="1220" x2="1809"><stop offset="0" stop-color="#0084ff"/><stop offset="0.2037" stop-color="#025cff"/><stop offset="0.2784" stop-color="#2f4dff"/><stop offset="0.3888" stop-color="#8636ff"/><stop offset="0.5076" stop-color="#f51dff"/><stop offset="0.5195" stop-color="#ff1afd"/><stop offset="0.5772" stop-color="#ff0ccc"/><stop offset="0.6537" stop-color="#ff00a0"/><stop offset="0.7572" stop-color="#ff0079"/><stop offset="0.9032" stop-color="#ff0057"/><stop offset="1" stop-color="#ff0048"/></linearGradient>
<linearGradient id="s106" gradientUnits="userSpaceOnUse" x1="1221" x2="1807"><stop offset="0" stop-color="#0081ff"/><stop offset="0.2048" stop-color="#025aff"/><stop offset="0.2833" stop-color="#314aff"/><stop offset="0.3959" stop-color="#8933ff"/><stop offset="0.5239" stop-color="#ff19fd"/><stop offset="0.5819" stop-color="#ff0bcd"/><stop offset="0.6587" stop-color="#ff00a1"/><stop offset="0.7628" stop-color="#ff007a"/><stop offset="0.9096" stop-color="#ff0058"/><stop offset="1" stop-color="#ff0049"/></linearGradient>
<linearGradient id="s107" gradientUnits="userSpaceOnUse" x1="1222" x2="1805"><stop offset="0" stop-color="#007eff"/><stop offset="0.2041" stop-color="#0258ff"/><stop offset="0.2813" stop-color="#2f49ff"/><stop offset="0.3945" stop-color="#8632ff"/><stop offset="0.5283" stop-color="#ff17fe"/><stop offset="0.5866" stop-color="#ff09ce"/><stop offset="0.6638" stop-color="#ff00a2"/><stop offset="0.7684" stop-color="#ff007b"/><stop offset="0.916" stop-color="#ff0059"/><stop offset="1" stop-color="#ff004b"/></linearGradient>
<linearGradient id="s108" gradientUnits="userSpaceOnUse" x1="1223" x2="1803"><stop offset="0" stop-color="#007cff"/><stop offset="0.2052" stop-color="#0256ff"/><stop offset="0.2845" stop-color="#3046ff"/><stop offset="0.4" stop-color="#8830ff"/><stop offset="0.5345" stop-color="#ff15fd"/><stop offset="0.5948" stop-color="#ff07cc"/><stop offset="0.6741" stop-color="#ff00a0"/><stop offset="0.781" stop-color="#ff007a"/><stop offset="0.9328" stop-color="#ff0058"/><stop offset="1" stop-color="#ff004d"/></linearGradient>
<linearGradient id="s109" gradientUnits="userSpaceOnUse" x1="1224" x2="1801"><stop offset="0" stop-color="#0079ff"/><stop offset="0.2062" stop-color="#0254ff"/><stop offset="0.2894" stop-color="#3344ff"/><stop offset="0.4073" stop-color="#8b2dff"/><stop offset="0.539" stop-color="#ff13fd"/><stop offset="0.5997" stop-color="#ff06cd"/><stop offset="0.6759" stop-color="#ff00a3"/><stop offset="0.7834" stop-color="#ff007c"/><stop offset="0.9359" stop-color="#ff0059"/><stop offset="1" stop-color="#ff004f"/></linearGradient>
<linearGradient id="s110" gradientUnits="userSpaceOnUse" x1="1224" x2="1799"><stop offset="0" stop-color="#0077ff"/><stop offset="0.207" stop-color="#0252ff"/><stop offset="0.2887" stop-color="#3042ff"/><stop offset="0.407" stop-color="#872cff"/><stop offset="0.5443" stop-color="#ff11fe"/><stop offset="0.6052" stop-color="#ff05ce"/><stop offset="0.6783" stop-color="#ff00a5"/><stop offset="0.7843" stop-color="#ff007e"/><stop offset="0.9339" stop-color="#ff005b"/><stop offset="1" stop-color="#ff0050"/></linearGradient>
<linearGradient id="s111" gradientUnits="userSpaceOnUse" x1="1225" x2="1797"><stop offset="0" stop-color="#0075ff"/><stop offset="0.208" stop-color="#0250ff"/><stop offset="0.292" stop-color="#3240ff"/><stop offset="0.4126" stop-color="#8929ff"/><stop offset="0.5507" stop-color="#ff0ffd"/><stop offset="0.6136" stop-color="#ff04cc"/><stop offset="0.6941" stop-color="#ff00a2"/><stop offset="0.8059" stop-color="#ff007a"/><stop offset="0.9633" stop-color="#ff0058"/><stop offset="1" stop-color="#ff0052"/></linearGradient>
<linearGradient id="s112" gradientUnits="userSpaceOnUse" x1="1226" x2="1795"><stop offset="0" stop-color="#0073ff"/><stop offset="0.2074" stop-color="#024eff"/><stop offset="0.2917" stop-color="#313fff"/><stop offset="0.413" stop-color="#8728ff"/><stop offset="0.5554" stop-color="#ff0efe"/><stop offset="0.6186" stop-color="#ff03cd"/><stop offset="0.7012" stop-color="#ff00a2"/><stop offset="0.8137" stop-color="#ff007b"/><stop offset="0.9736" stop-color="#ff0058"/><stop offset="1" stop-color="#ff0054"/></linearGradient>
<linearGradient id="s113" gradientUnits="userSpaceOnUse" x1="1227" x2="1793"><stop offset="0" stop-color="#0070ff"/><stop offset="0.2085" stop-color="#024cff"/><stop offset="0.2951" stop-color="#323dff"/><stop offset="0.4187" stop-color="#8926ff"/><stop offset="0.5601" stop-color="#ff0cfe"/><stop offset="0.6237" stop-color="#ff02ce"/><stop offset="0.7085" stop-color="#ff00a2"/><stop offset="0.8233" stop-color="#ff007b"/><stop offset="0.9859" stop-color="#ff0058"/><stop offset="1" stop-color="#ff0056"/></linearGradient>
<linearGradient id="s114" gradientUnits="userSpaceOnUse" x1="1228" x2="1791"><stop offset="0" stop-color="#006eff"/><stop offset="0.2078" stop-color="#024bff"/><stop offset="0.2948" stop-color="#313bff"/><stop offset="0.421" stop-color="#8824ff"/><stop offset="0.5666" stop-color="#ff0bfd"/><stop offset="0.6323" stop-color="#ff01cd"/><stop offset="0.7176" stop-color="#ff00a1"/><stop offset="0.8348" stop-color="#ff007a"/><stop offset="1" stop-color="#ff0058"/></linearGradient>
<linearGradient id="s115" gradientUnits="userSpaceOnUse" x1="1229" x2="1789"><stop offset="0" stop-color="#006cff"/><stop offset="0.2089" stop-color="#0249ff"/><stop offset="0.2982" stop-color="#3239ff"/><stop offset="0.425" stop-color="#8923ff"/><stop offset="0.5714" stop-color="#ff09fe"/><stop offset="0.6375" stop-color="#ff00cd"/><stop offset="0.725" stop-color="#ff00a1"/><stop offset="0.8429" stop-color="#ff007a"/><stop offset="1" stop-color="#ff005a"/></linearGradient>
<linearGradient id="s116" gradientUnits="userSpaceOnUse" x1="1230" x2="1787"><stop offset="0" stop-color="#006aff"/><stop offset="0.2083" stop-color="#0247ff"/><stop offset="0.298" stop-color="#3138ff"/><stop offset="0.4273" stop-color="#8821ff"/><stop offset="0.5763" stop-color="#ff08fe"/><stop offset="0.6427" stop-color="#ff00ce"/><stop offset="0.7307" stop-color="#ff00a2"/><stop offset="0.851" stop-color="#ff007b"/><stop offset="1" stop-color="#ff005c"/></linearGradient>
<linearGradient id="s117" gradientUnits="userSpaceOnUse" x1="1231" x2="1785"><stop offset="0" stop-color="#0068ff"/><stop offset="0.2094" stop-color="#0245ff"/><stop offset="0.3014" stop-color="#3236ff"/><stop offset="0.4332" stop-color="#8a1fff"/><stop offset="0.583" stop-color="#ff06fd"/><stop offset="0.6516" stop-color="#ff00cd"/><stop offset="0.7419" stop-color="#ff00a1"/><stop offset="0.8646" stop-color="#ff007a"/><stop offset="1" stop-color="#ff005e"/></linearGradient>
<linearGradient id="s118" gradientUnits="userSpaceOnUse" x1="1232" x2="1783"><stop offset="0" stop-color="#0065ff"/><stop offset="0.2087" stop-color="#0244ff"/><stop offset="0.3013" stop-color="#3134ff"/><stop offset="0.4338" stop-color="#871eff"/><stop offset="0.588" stop-color="#ff05fe"/><stop offset="0.657" stop-color="#ff00cd"/><stop offset="0.7477" stop-color="#ff00a2"/><stop offset="0.8711" stop-color="#ff007a"/><stop offset="1" stop-color="#ff005f"/></linearGradient>
<linearGradient id="s119" gradientUnits="userSpaceOnUse" x1="1233" x2="1781"><stop offset="0" stop-color="#0063ff"/><stop offset="0.2099" stop-color="#0242ff"/><stop offset="0.3047" stop-color="#3232ff"/><stop offset="0.4398" stop-color="#891cff"/><stop offset="0.5949" stop-color="#ff04fd"/><stop offset="0.6642" stop-color="#ff00cd"/><stop offset="0.7573" stop-color="#ff00a1"/><stop offset="0.8832" stop-color="#ff007a"/><stop offset="1" stop-color="#ff0061"/></linearGradient>
<linearGradient id="s120" gradientUnits="userSpaceOnUse" x1="1234" x2="1780"><stop offset="0" stop-color="#0061ff"/><stop offset="0.2088" stop-color="#0241ff"/><stop offset="0.304" stop-color="#3131ff"/><stop offset="0.4414" stop-color="#881bff"/><stop offset="0.5989" stop-color="#ff03fd"/><stop offset="0.6703" stop-color="#ff00cd"/><stop offset="0.7637" stop-color="#ff00a1"/><stop offset="0.8919" stop-color="#ff007a"/><stop offset="1" stop-color="#ff0063"/></linearGradient>
<linearGradient id="s121" gradientUnits="userSpaceOnUse" x1="1235" x2="1778"><stop offset="0" stop-color="#005fff"/><stop offset="0.2099" stop-color="#023fff"/><stop offset="0.3076" stop-color="#322fff"/><stop offset="0.4457" stop-color="#8919ff"/><stop offset="0.6041" stop-color="#ff02fe"/><stop offset="0.6759" stop-color="#ff00cd"/><stop offset="0.7698" stop-color="#ff00a2"/><stop offset="0.8987" stop-color="#ff007b"/><stop offset="1" stop-color="#ff0065"/></linearGradient>
<linearGradient id="s122" gradientUnits="userSpaceOnUse" x1="1236" x2="1776"><stop offset="0" stop-color="#005eff"/><stop offset="0.2093" stop-color="#023eff"/><stop offset="0.3074" stop-color="#312eff"/><stop offset="0.4481" stop-color="#8818ff"/><stop offset="0.6111" stop-color="#ff01fd"/><stop offset="0.6833" stop-color="#ff00cd"/><stop offset="0.7796" stop-color="#ff00a1"/><stop offset="0.9111" stop-color="#ff007a"/><stop offset="1" stop-color="#ff0067"/></linearGradient>
<linearGradient id="s123" gradientUnits="userSpaceOnUse" x1="1238" x2="1774"><stop offset="0" stop-color="#005bff"/><stop offset="0.209" stop-color="#023cff"/><stop offset="0.3097" stop-color="#322cff"/><stop offset="0.4534" stop-color="#8a16ff"/><stop offset="0.6157" stop-color="#ff00fe"/><stop offset="0.6903" stop-color="#ff00cd"/><stop offset="0.7873" stop-color="#ff00a1"/><stop offset="0.9198" stop-color="#ff007a"/><stop offset="1" stop-color="#ff0069"/></linearGradient>
<linearGradient id="s124" gradientUnits="userSpaceOnUse" x1="1239" x2="1772"><stop offset="0" stop-color="#005aff"/><stop offset="0.2083" stop-color="#023bff"/><stop offset="0.3096" stop-color="#312bff"/><stop offset="0.454" stop-color="#8815ff"/><stop offset="0.621" stop-color="#ff00fe"/><stop offset="0.6961" stop-color="#ff00ce"/><stop offset="0.7955" stop-color="#ff00a1"/><stop offset="0.9306" stop-color="#ff007a"/><stop offset="1" stop-color="#ff006c"/></linearGradient>
<linearGradient id="s125" gradientUnits="userSpaceOnUse" x1="1240" x2="1770"><stop offset="0" stop-color="#0058ff"/><stop offset="0.2094" stop-color="#0239ff"/><stop offset="0.3132" stop-color="#322aff"/><stop offset="0.4604" stop-color="#8a14ff"/><stop offset="0.6189" stop-color="#fa00ff"/><stop offset="0.6302" stop-color="#ff00fc"/><stop offset="0.7075" stop-color="#ff00cb"/><stop offset="0.8094" stop-color="#ff00a0"/><stop offset="0.9472" stop-color="#ff0079"/><stop offset="1" stop-color="#ff006e"/></linearGradient>
<linearGradient id="s126" gradientUnits="userSpaceOnUse" x1="1241" x2="1768"><stop offset="0" stop-color="#0056ff"/><stop offset="0.2087" stop-color="#0238ff"/><stop offset="0.3131" stop-color="#3128ff"/><stop offset="0.463" stop-color="#8913ff"/><stop offset="0.6224" stop-color="#f800ff"/><stop offset="0.6357" stop-color="#ff00fc"/><stop offset="0.7135" stop-color="#ff00cc"/><stop offset="0.8159" stop-color="#ff00a0"/><stop offset="0.9564" stop-color="#ff0079"/><stop offset="1" stop-color="#ff0070"/></linearGradient>
<linearGradient id="s127" gradientUnits="userSpaceOnUse" x1="1242" x2="1766"><stop offset="0" stop-color="#0054ff"/><stop offset="0.2099" stop-color="#0236ff"/><stop offset="0.3168" stop-color="#3227ff"/><stop offset="0.4676" stop-color="#8911ff"/><stop offset="0.6202" stop-color="#f200ff"/><stop offset="0.6412" stop-color="#ff00fd"/><stop offset="0.7195" stop-color="#ff00cd"/><stop offset="0.8225" stop-color="#ff00a1"/><stop offset="0.9637" stop-color="#ff007a"/><stop offset="1" stop-color="#ff0072"/></linearGradient>
<linearGradient id="s128" gradientUnits="userSpaceOnUse" x1="1243" x2="1764"><stop offset="0" stop-color="#0052ff"/><stop offset="0.2092" stop-color="#0235ff"/><stop offset="0.3148" stop-color="#3026ff"/><stop offset="0.4683" stop-color="#8710ff"/><stop offset="0.618" stop-color="#ec00ff"/><stop offset="0.6468" stop-color="#ff00fd"/><stop offset="0.7255" stop-color="#ff00cd"/><stop offset="0.8292" stop-color="#ff00a2"/><stop offset="0.9712" stop-color="#ff007b"/><stop offset="1" stop-color="#ff0075"/></linearGradient>
<linearGradient id="s129" gradientUnits="userSpaceOnUse" x1="1244" x2="1762"><stop offset="0" stop-color="#0051ff"/><stop offset="0.2104" stop-color="#0234ff"/><stop offset="0.3205" stop-color="#3224ff"/><stop offset="0.4768" stop-color="#8a0fff"/><stop offset="0.6158" stop-color="#e600ff"/><stop offset="0.6525" stop-color="#ff00fe"/><stop offset="0.7336" stop-color="#ff00cd"/><stop offset="0.8398" stop-color="#ff00a1"/><stop offset="0.9846" stop-color="#ff007a"/><stop offset="1" stop-color="#ff0077"/></linearGradient>
<linearGradient id="s130" gradientUnits="userSpaceOnUse" x1="1245" x2="1760"><stop offset="0" stop-color="#004fff"/><stop offset="0.2097" stop-color="#0232ff"/><stop offset="0.3184" stop-color="#3023ff"/><stop offset="0.4757" stop-color="#870eff"/><stop offset="0.6136" stop-color="#e000ff"/><stop offset="0.6602" stop-color="#ff00fd"/><stop offset="0.7417" stop-color="#ff00cd"/><stop offset="0.8505" stop-color="#ff00a1"/><stop offset="0.9981" stop-color="#ff007a"/><stop offset="1" stop-color="#ff0079"/></linearGradient>
<linearGradient id="s131" gradientUnits="userSpaceOnUse" x1="1246" x2="1758"><stop offset="0" stop-color="#004dff"/><stop offset="0.2109" stop-color="#0231ff"/><stop offset="0.3223" stop-color="#3122ff"/><stop offset="0.4824" stop-color="#890dff"/><stop offset="0.6133" stop-color="#dc00ff"/><stop offset="0.666" stop-color="#ff00fd"/><stop offset="0.748" stop-color="#ff00cd"/><stop offset="0.8574" stop-color="#ff00a1"/><stop offset="1" stop-color="#ff007c"/></linearGradient>
<linearGradient id="s132" gradientUnits="userSpaceOnUse" x1="1247" x2="1756"><stop offset="0" stop-color="#004cff"/><stop offset="0.2102" stop-color="#0230ff"/><stop offset="0.3222" stop-color="#3021ff"/><stop offset="0.4833" stop-color="#870cff"/><stop offset="0.611" stop-color="#d700ff"/><stop offset="0.6719" stop-color="#ff00fe"/><stop offset="0.7564" stop-color="#ff00cd"/><stop offset="0.8664" stop-color="#ff00a2"/><stop offset="1" stop-color="#ff007e"/></linearGradient>
<linearGradient id="s133" gradientUnits="userSpaceOnUse" x1="1248" x2="1754"><stop offset="0" stop-color="#004aff"/><stop offset="0.2115" stop-color="#022fff"/><stop offset="0.3261" stop-color="#3120ff"/><stop offset="0.4901" stop-color="#890aff"/><stop offset="0.6107" stop-color="#d300ff"/><stop offset="0.6798" stop-color="#ff00fd"/><stop offset="0.7648" stop-color="#ff00cd"/><stop offset="0.8775" stop-color="#ff00a1"/><stop offset="1" stop-color="#ff0080"/></linearGradient>
<linearGradient id="s134" gradientUnits="userSpaceOnUse" x1="1249" x2="1752"><stop offset="0" stop-color="#0049ff"/><stop offset="0.2107" stop-color="#022eff"/><stop offset="0.326" stop-color="#311fff"/><stop offset="0.493" stop-color="#880aff"/><stop offset="0.6083" stop-color="#ce00ff"/><stop offset="0.6859" stop-color="#ff00fe"/><stop offset="0.7714" stop-color="#ff00ce"/><stop offset="0.8847" stop-color="#ff00a2"/><stop offset="1" stop-color="#ff0083"/></linearGradient>
<linearGradient id="s135" gradientUnits="userSpaceOnUse" x1="1251" x2="1750"><stop offset="0" stop-color="#0047ff"/><stop offset="0.2104" stop-color="#022cff"/><stop offset="0.3287" stop-color="#321dff"/><stop offset="0.499" stop-color="#8908ff"/><stop offset="0.6072" stop-color="#ca00ff"/><stop offset="0.6914" stop-color="#ff00fe"/><stop offset="0.7796" stop-color="#ff00cd"/><stop offset="0.8958" stop-color="#ff00a1"/><stop offset="1" stop-color="#ff0085"/></linearGradient>
<linearGradient id="s136" gradientUnits="userSpaceOnUse" x1="1252" x2="1748"><stop offset="0" stop-color="#0045ff"/><stop offset="0.2097" stop-color="#022bff"/><stop offset="0.3286" stop-color="#311cff"/><stop offset="0.5" stop-color="#8808ff"/><stop offset="0.6069" stop-color="#c600ff"/><stop offset="0.6996" stop-color="#ff00fd"/><stop offset="0.7883" stop-color="#ff00cd"/><stop offset="0.9052" stop-color="#ff00a1"/><stop offset="1" stop-color="#ff0088"/></linearGradient>
<linearGradient id="s137" gradientUnits="userSpaceOnUse" x1="1253" x2="1747"><stop offset="0" stop-color="#0044ff"/><stop offset="0.2105" stop-color="#022aff"/><stop offset="0.332" stop-color="#321bff"/><stop offset="0.5061" stop-color="#8906ff"/><stop offset="0.6053" stop-color="#c200ff"/><stop offset="0.7045" stop-color="#ff00fe"/><stop offset="0.7935" stop-color="#ff00ce"/><stop offset="0.9109" stop-color="#ff00a2"/><stop offset="1" stop-color="#ff008a"/></linearGradient>
<linearGradient id="s138" gradientUnits="userSpaceOnUse" x1="1254" x2="1745"><stop offset="0" stop-color="#0043ff"/><stop offset="0.2098" stop-color="#0229ff"/><stop offset="0.332" stop-color="#311aff"/><stop offset="0.5071" stop-color="#8706ff"/><stop offset="0.6049" stop-color="#bf00ff"/><stop offset="0.7128" stop-color="#ff00fd"/><stop offset="0.8045" stop-color="#ff00cc"/><stop offset="0.9246" stop-color="#ff00a1"/><stop offset="1" stop-color="#ff008d"/></linearGradient>
<linearGradient id="s139" gradientUnits="userSpaceOnUse" x1="1255" x2="1743"><stop offset="0" stop-color="#0041ff"/><stop offset="0.2111" stop-color="#0228ff"/><stop offset="0.3361" stop-color="#3219ff"/><stop offset="0.5143" stop-color="#8905ff"/><stop offset="0.6107" stop-color="#bf00ff"/><stop offset="0.7193" stop-color="#ff00fd"/><stop offset="0.8115" stop-color="#ff00cd"/><stop offset="0.9344" stop-color="#ff00a1"/><stop offset="1" stop-color="#ff008f"/></linearGradient>
<linearGradient id="s140" gradientUnits="userSpaceOnUse" x1="1256" x2="1741"><stop offset="0" stop-color="#0040ff"/><stop offset="0.2103" stop-color="#0227ff"/><stop offset="0.3361" stop-color="#3118ff"/><stop offset="0.5175" stop-color="#8804ff"/><stop offset="0.6186" stop-color="#c000ff"/><stop offset="0.7258" stop-color="#ff00fe"/><stop offset="0.8186" stop-color="#ff00ce"/><stop offset="0.9423" stop-color="#ff00a2"/><stop offset="1" stop-color="#ff0092"/></linearGradient>
<linearGradient id="s141" gradientUnits="userSpaceOnUse" x1="1257" x2="1739"><stop offset="0" stop-color="#003eff"/><stop offset="0.2116" stop-color="#0226ff"/><stop offset="0.3402" stop-color="#3217ff"/><stop offset="0.5249" stop-color="#8a03ff"/><stop offset="0.6763" stop-color="#de00ff"/><stop offset="0.7344" stop-color="#ff00fd"/><stop offset="0.8299" stop-color="#ff00cd"/><stop offset="0.9564" stop-color="#ff00a1"/><stop offset="1" stop-color="#ff0095"/></linearGradient>
<linearGradient id="s142" gradientUnits="userSpaceOnUse" x1="1258" x2="1737"><stop offset="0" stop-color="#003dff"/><stop offset="0.2109" stop-color="#0225ff"/><stop offset="0.3403" stop-color="#3116ff"/><stop offset="0.5261" stop-color="#8802ff"/><stop offset="0.7411" stop-color="#ff00fd"/><stop offset="0.8372" stop-color="#ff00cd"/><stop offset="0.9645" stop-color="#ff00a1"/><stop offset="1" stop-color="#ff0098"/></linearGradient>
<linearGradient id="s143" gradientUnits="userSpaceOnUse" x1="1260" x2="1735"><stop offset="0" stop-color="#003bff"/><stop offset="0.2105" stop-color="#0224ff"/><stop offset="0.3432" stop-color="#3215ff"/><stop offset="0.5326" stop-color="#8901ff"/><stop offset="0.7474" stop-color="#ff00fe"/><stop offset="0.8442" stop-color="#ff00ce"/><stop offset="0.9726" stop-color="#ff00a2"/><stop offset="1" stop-color="#ff009b"/></linearGradient>
<linearGradient id="s144" gradientUnits="userSpaceOnUse" x1="1261" x2="1733"><stop offset="0" stop-color="#003aff"/><stop offset="0.2097" stop-color="#0223ff"/><stop offset="0.3432" stop-color="#3114ff"/><stop offset="0.5339" stop-color="#8801ff"/><stop offset="0.7564" stop-color="#ff00fd"/><stop offset="0.8559" stop-color="#ff00cd"/><stop offset="0.9873" stop-color="#ff00a1"/><stop offset="1" stop-color="#ff009d"/></linearGradient>
<linearGradient id="s145" gradientUnits="userSpaceOnUse" x1="1262" x2="1731"><stop offset="0" stop-color="#0039ff"/><stop offset="0.2111" stop-color="#0222ff"/><stop offset="0.3475" stop-color="#3213ff"/><stop offset="0.5416" stop-color="#8900ff"/><stop offset="0.7633" stop-color="#ff00fd"/><stop offset="0.8635" stop-color="#ff00cd"/><stop offset="0.9957" stop-color="#ff00a1"/><stop offset="1" stop-color="#ff00a0"/></linearGradient>
<linearGradient id="s146" gradientUnits="userSpaceOnUse" x1="1263" x2="1729"><stop offset="0" stop-color="#0038ff"/><stop offset="0.2103" stop-color="#0221ff"/><stop offset="0.3476" stop-color="#3112ff"/><stop offset="0.5451" stop-color="#8900ff"/><stop offset="0.7704" stop-color="#ff00fe"/><stop offset="0.8712" stop-color="#ff00ce"/><stop offset="1" stop-color="#ff00a3"/></linearGradient>
<linearGradient id="s147" gradientUnits="userSpaceOnUse" x1="1264" x2="1727"><stop offset="0" stop-color="#0036ff"/><stop offset="0.2117" stop-color="#0220ff"/><stop offset="0.3521" stop-color="#3211ff"/><stop offset="0.5529" stop-color="#8a00ff"/><stop offset="0.7797" stop-color="#ff00fd"/><stop offset="0.8834" stop-color="#ff00cd"/><stop offset="1" stop-color="#ff00a6"/></linearGradient>
<linearGradient id="s148" gradientUnits="userSpaceOnUse" x1="1265" x2="1725"><stop offset="0" stop-color="#0035ff"/><stop offset="0.2109" stop-color="#021fff"/><stop offset="0.35" stop-color="#3011ff"/><stop offset="0.5522" stop-color="#8700ff"/><stop offset="0.787" stop-color="#ff00fe"/><stop offset="0.8913" stop-color="#ff00cd"/><stop offset="1" stop-color="#ff00a9"/></linearGradient>
<linearGradient id="s149" gradientUnits="userSpaceOnUse" x1="1267" x2="1723"><stop offset="0" stop-color="#0034ff"/><stop offset="0.2105" stop-color="#021eff"/><stop offset="0.3553" stop-color="#320fff"/><stop offset="0.5548" stop-color="#8700ff"/><stop offset="0.7961" stop-color="#ff00fd"/><stop offset="0.9035" stop-color="#ff00cc"/><stop offset="1" stop-color="#ff00ad"/></linearGradient>
<linearGradient id="s150" gradientUnits="userSpaceOnUse" x1="1268" x2="1721"><stop offset="0" stop-color="#0032ff"/><stop offset="0.2119" stop-color="#021dff"/><stop offset="0.3598" stop-color="#330eff"/><stop offset="0.5519" stop-color="#8300ff"/><stop offset="0.8035" stop-color="#ff00fd"/><stop offset="0.9117" stop-color="#ff00cd"/><stop offset="1" stop-color="#ff00b0"/></linearGradient>
<linearGradient id="s151" gradientUnits="userSpaceOnUse" x1="1269" x2="1719"><stop offset="0" stop-color="#0031ff"/><stop offset="0.2111" stop-color="#021cff"/><stop offset="0.36" stop-color="#320eff"/><stop offset="0.5489" stop-color="#8000ff"/><stop offset="0.7756" stop-color="#ed00ff"/><stop offset="0.8133" stop-color="#ff00fd"/><stop offset="0.9222" stop-color="#ff00cd"/><stop offset="1" stop-color="#ff00b3"/></linearGradient>
<linearGradient id="s152" gradientUnits="userSpaceOnUse" x1="1270" x2="1717"><stop offset="0" stop-color="#0030ff"/><stop offset="0.2125" stop-color="#021bff"/><stop offset="0.3647" stop-color="#330dff"/><stop offset="0.5481" stop-color="#7d00ff"/><stop offset="0.821" stop-color="#ff00fd"/><stop offset="0.9329" stop-color="#ff00cc"/><stop offset="1" stop-color="#ff00b6"/></linearGradient>
<linearGradient id="s153" gradientUnits="userSpaceOnUse" x1="1271" x2="1716"><stop offset="0" stop-color="#002fff"/><stop offset="0.2112" stop-color="#021bff"/><stop offset="0.3618" stop-color="#310cff"/><stop offset="0.5438" stop-color="#7a00ff"/><stop offset="0.7753" stop-color="#e600ff"/><stop offset="0.827" stop-color="#ff00fd"/><stop offset="0.9393" stop-color="#ff00cd"/><stop offset="1" stop-color="#ff00b9"/></linearGradient>
<linearGradient id="s154" gradientUnits="userSpaceOnUse" x1="1273" x2="1714"><stop offset="0" stop-color="#002eff"/><stop offset="0.2109" stop-color="#021aff"/><stop offset="0.3673" stop-color="#330bff"/><stop offset="0.5397" stop-color="#7600ff"/><stop offset="0.7755" stop-color="#e200ff"/><stop offset="0.8367" stop-color="#ff00fd"/><stop offset="0.9501" stop-color="#ff00cd"/><stop offset="1" stop-color="#ff00bc"/></linearGradient>
<linearGradient id="s155" gradientUnits="userSpaceOnUse" x1="1274" x2="1712"><stop offset="0" stop-color="#002dff"/><stop offset="0.21" stop-color="#0219ff"/><stop offset="0.3653" stop-color="#310bff"/><stop offset="0.5365" stop-color="#7300ff"/><stop offset="0.774" stop-color="#de00ff"/><stop offset="0.8447" stop-color="#ff00fd"/><stop offset="0.9612" stop-color="#ff00cc"/><stop offset="1" stop-color="#ff00c0"/></linearGradient>
<linearGradient id="s156" gradientUnits="userSpaceOnUse" x1="1275" x2="1710"><stop offset="0" stop-color="#002cff"/><stop offset="0.2115" stop-color="#0218ff"/><stop offset="0.3701" stop-color="#320aff"/><stop offset="0.5356" stop-color="#7100ff"/><stop offset="0.777" stop-color="#db00ff"/><stop offset="0.8529" stop-color="#ff00fd"/><stop offset="0.9701" stop-color="#ff00cd"/><stop offset="1" stop-color="#ff00c3"/></linearGradient>
<linearGradient id="s157" gradientUnits="userSpaceOnUse" x1="1276" x2="1708"><stop offset="0" stop-color="#002aff"/><stop offset="0.2106" stop-color="#0217ff"/><stop offset="0.3704" stop-color="#3109ff"/><stop offset="0.5324" stop-color="#6d00ff"/><stop offset="0.7778" stop-color="#d800ff"/><stop offset="0.8634" stop-color="#ff00fd"/><stop offset="0.9815" stop-color="#ff00cd"/><stop offset="1" stop-color="#ff00c7"/></linearGradient>
<linearGradient id="s158" gradientUnits="userSpaceOnUse" x1="1277" x2="1706"><stop offset="0" stop-color="#0029ff"/><stop offset="0.2121" stop-color="#0216ff"/><stop offset="0.3753" stop-color="#3208ff"/><stop offset="0.5315" stop-color="#6b00ff"/><stop offset="0.7786" stop-color="#d500ff"/><stop offset="0.8718" stop-color="#ff00fd"/><stop offset="0.993" stop-color="#ff00cd"/><stop offset="1" stop-color="#ff00ca"/></linearGradient>
<linearGradient id="s159" gradientUnits="userSpaceOnUse" x1="1279" x2="1704"><stop offset="0" stop-color="#0028ff"/><stop offset="0.2094" stop-color="#0216ff"/><stop offset="0.3741" stop-color="#3108ff"/><stop offset="0.5271" stop-color="#6800ff"/><stop offset="0.7788" stop-color="#d100ff"/><stop offset="0.88" stop-color="#ff00fe"/><stop offset="1" stop-color="#ff00ce"/></linearGradient>
<linearGradient id="s160" gradientUnits="userSpaceOnUse" x1="1280" x2="1702"><stop offset="0" stop-color="#0027ff"/><stop offset="0.2109" stop-color="#0215ff"/><stop offset="0.3791" stop-color="#3207ff"/><stop offset="0.5284" stop-color="#6700ff"/><stop offset="0.782" stop-color="#cf00ff"/><stop offset="0.891" stop-color="#ff00fd"/><stop offset="1" stop-color="#ff00d2"/></linearGradient>
<linearGradient id="s161" gradientUnits="userSpaceOnUse" x1="1281" x2="1700"><stop offset="0" stop-color="#0026ff"/><stop offset="0.21" stop-color="#0214ff"/><stop offset="0.3795" stop-color="#3107ff"/><stop offset="0.5251" stop-color="#6400ff"/><stop offset="0.7828" stop-color="#cc00ff"/><stop offset="0.8998" stop-color="#ff00fd"/><stop offset="1" stop-color="#ff00d5"/></linearGradient>
<linearGradient id="s162" gradientUnits="userSpaceOnUse" x1="1282" x2="1698"><stop offset="0" stop-color="#0025ff"/><stop offset="0.2115" stop-color="#0214ff"/><stop offset="0.3846" stop-color="#3206ff"/><stop offset="0.5264" stop-color="#6300ff"/><stop offset="0.7861" stop-color="#ca00ff"/><stop offset="0.9087" stop-color="#ff00fe"/><stop offset="1" stop-color="#ff00d9"/></linearGradient>
<linearGradient id="s163" gradientUnits="userSpaceOnUse" x1="1283" x2="1696"><stop offset="0" stop-color="#0024ff"/><stop offset="0.2107" stop-color="#0213ff"/><stop offset="0.385" stop-color="#3205ff"/><stop offset="0.5278" stop-color="#6200ff"/><stop offset="0.7918" stop-color="#c900ff"/><stop offset="0.9201" stop-color="#ff00fd"/><stop offset="1" stop-color="#ff00dd"/></linearGradient>
<linearGradient id="s164" gradientUnits="userSpaceOnUse" x1="1285" x2="1694"><stop offset="0" stop-color="#0023ff"/><stop offset="0.2103" stop-color="#0212ff"/><stop offset="0.3888" stop-color="#3205ff"/><stop offset="0.533" stop-color="#6200ff"/><stop offset="0.802" stop-color="#ca00ff"/><stop offset="0.9291" stop-color="#ff00fd"/><stop offset="1" stop-color="#ff00e1"/></linearGradient>
<linearGradient id="s165" gradientUnits="userSpaceOnUse" x1="1286" x2="1692"><stop offset="0" stop-color="#0022ff"/><stop offset="0.2094" stop-color="#0212ff"/><stop offset="0.3892" stop-color="#3204ff"/><stop offset="0.5369" stop-color="#6200ff"/><stop offset="0.8079" stop-color="#c900ff"/><stop offset="0.9409" stop-color="#ff00fd"/><stop offset="1" stop-color="#ff00e5"/></linearGradient>
<linearGradient id="s166" gradientUnits="userSpaceOnUse" x1="1287" x2="1690"><stop offset="0" stop-color="#0021ff"/><stop offset="0.2109" stop-color="#0211ff"/><stop offset="0.3945" stop-color="#3203ff"/><stop offset="0.5608" stop-color="#6800ff"/><stop offset="0.8387" stop-color="#d200ff"/><stop offset="0.9504" stop-color="#ff00fd"/><stop offset="1" stop-color="#ff00e9"/></linearGradient>
<linearGradient id="s167" gradientUnits="userSpaceOnUse" x1="1288" x2="1688"><stop offset="0" stop-color="#0020ff"/><stop offset="0.21" stop-color="#0210ff"/><stop offset="0.395" stop-color="#3203ff"/><stop offset="0.59" stop-color="#7100ff"/><stop offset="0.8725" stop-color="#dc00ff"/><stop offset="0.96" stop-color="#ff00fd"/><stop offset="1" stop-color="#ff00ed"/></linearGradient>
<linearGradient id="s168" gradientUnits="userSpaceOnUse" x1="1290" x2="1686"><stop offset="0" stop-color="#001fff"/><stop offset="0.2096" stop-color="#020fff"/><stop offset="0.399" stop-color="#3202ff"/><stop offset="0.6667" stop-color="#8a00ff"/><stop offset="0.9722" stop-color="#ff00fd"/><stop offset="1" stop-color="#ff00f2"/></linearGradient>
<linearGradient id="s169" gradientUnits="userSpaceOnUse" x1="1291" x2="1685"><stop offset="0" stop-color="#001eff"/><stop offset="0.2081" stop-color="#020fff"/><stop offset="0.3985" stop-color="#3202ff"/><stop offset="0.6701" stop-color="#8900ff"/><stop offset="0.9797" stop-color="#ff00fd"/><stop offset="1" stop-color="#ff00f5"/></linearGradient>
<linearGradient id="s170" gradientUnits="userSpaceOnUse" x1="1292" x2="1683"><stop offset="0" stop-color="#001eff"/><stop offset="0.2097" stop-color="#020eff"/><stop offset="0.4041" stop-color="#3201ff"/><stop offset="0.6803" stop-color="#8b00ff"/><stop offset="0.9898" stop-color="#ff00fe"/><stop offset="1" stop-color="#ff00f9"/></linearGradient>
<linearGradient id="s171" gradientUnits="userSpaceOnUse" x1="1293" x2="1681"><stop offset="0" stop-color="#001dff"/><stop offset="0.2088" stop-color="#020eff"/><stop offset="0.4046" stop-color="#3201ff"/><stop offset="0.683" stop-color="#8900ff"/><stop offset="1" stop-color="#ff00fe"/></linearGradient>
<linearGradient id="s172" gradientUnits="userSpaceOnUse" x1="1295" x2="1679"><stop offset="0" stop-color="#001cff"/><stop offset="0.2083" stop-color="#020dff"/><stop offset="0.4089" stop-color="#3300ff"/><stop offset="0.6927" stop-color="#8a00ff"/><stop offset="0.9974" stop-color="#fb00ff"/><stop offset="1" stop-color="#fc00ff"/></linearGradient>
<linearGradient id="s173" gradientUnits="userSpaceOnUse" x1="1296" x2="1677"><stop offset="0" stop-color="#001bff"/><stop offset="0.2073" stop-color="#020cff"/><stop offset="0.4068" stop-color="#3100ff"/><stop offset="0.6929" stop-color="#8800ff"/><stop offset="1" stop-color="#f700ff"/></linearGradient>
<linearGradient id="s174" gradientUnits="userSpaceOnUse" x1="1297" x2="1675"><stop offset="0" stop-color="#001aff"/><stop offset="0.209" stop-color="#020cff"/><stop offset="0.4153" stop-color="#3300ff"/><stop offset="0.7063" stop-color="#8a00ff"/><stop offset="1" stop-color="#f300ff"/></linearGradient>
<linearGradient id="s175" gradientUnits="userSpaceOnUse" x1="1298" x2="1673"><stop offset="0" stop-color="#0019ff"/><stop offset="0.208" stop-color="#020bff"/><stop offset="0.4133" stop-color="#3100ff"/><stop offset="0.7093" stop-color="#8900ff"/><stop offset="1" stop-color="#ee00ff"/></linearGradient>
<linearGradient id="s176" gradientUnits="userSpaceOnUse" x1="1300" x2="1671"><stop offset="0" stop-color="#0018ff"/><stop offset="0.2075" stop-color="#020bff"/><stop offset="0.4178" stop-color="#3200ff"/><stop offset="0.7197" stop-color="#8a00ff"/><stop offset="1" stop-color="#ea00ff"/></linearGradient>
<linearGradient id="s177" gradientUnits="userSpaceOnUse" x1="1301" x2="1669"><stop offset="0" stop-color="#0018ff"/><stop offset="0.2065" stop-color="#020aff"/><stop offset="0.4185" stop-color="#3100ff"/><stop offset="0.7228" stop-color="#8900ff"/><stop offset="1" stop-color="#e600ff"/></linearGradient>
<linearGradient id="s178" gradientUnits="userSpaceOnUse" x1="1302" x2="1667"><stop offset="0" stop-color="#0017ff"/><stop offset="0.2082" stop-color="#020aff"/><stop offset="0.4247" stop-color="#3200ff"/><stop offset="0.7342" stop-color="#8a00ff"/><stop offset="1" stop-color="#e200ff"/></linearGradient>
<linearGradient id="s179" gradientUnits="userSpaceOnUse" x1="1304" x2="1665"><stop offset="0" stop-color="#0016ff"/><stop offset="0.205" stop-color="#0209ff"/><stop offset="0.4238" stop-color="#3100ff"/><stop offset="0.7368" stop-color="#8800ff"/><stop offset="1" stop-color="#de00ff"/></linearGradient>
<linearGradient id="s180" gradientUnits="userSpaceOnUse" x1="1305" x2="1663"><stop offset="0" stop-color="#0015ff"/><stop offset="0.2067" stop-color="#0209ff"/><stop offset="0.4274" stop-color="#3100ff"/><stop offset="0.7458" stop-color="#8900ff"/><stop offset="1" stop-color="#da00ff"/></linearGradient>
<linearGradient id="s181" gradientUnits="userSpaceOnUse" x1="1306" x2="1661"><stop offset="0" stop-color="#0014ff"/><stop offset="0.2085" stop-color="#0208ff"/><stop offset="0.4254" stop-color="#3000ff"/><stop offset="0.7465" stop-color="#8700ff"/><stop offset="1" stop-color="#d600ff"/></linearGradient>
<linearGradient id="s182" gradientUnits="userSpaceOnUse" x1="1308" x2="1659"><stop offset="0" stop-color="#0014ff"/><stop offset="0.2051" stop-color="#0208ff"/><stop offset="0.4188" stop-color="#2e00ff"/><stop offset="0.7464" stop-color="#8400ff"/><stop offset="1" stop-color="#d200ff"/></linearGradient>
<linearGradient id="s183" gradientUnits="userSpaceOnUse" x1="1309" x2="1657"><stop offset="0" stop-color="#0013ff"/><stop offset="0.2069" stop-color="#0207ff"/><stop offset="0.4167" stop-color="#2d00ff"/><stop offset="0.7471" stop-color="#8200ff"/><stop offset="1" stop-color="#cf00ff"/></linearGradient>
<linearGradient id="s184" gradientUnits="userSpaceOnUse" x1="1310" x2="1655"><stop offset="0" stop-color="#0012ff"/><stop offset="0.2058" stop-color="#0207ff"/><stop offset="0.4145" stop-color="#2b00ff"/><stop offset="0.7478" stop-color="#8000ff"/><stop offset="1" stop-color="#cb00ff"/></linearGradient>
<linearGradient id="s185" gradientUnits="userSpaceOnUse" x1="1312" x2="1653"><stop offset="0" stop-color="#0011ff"/><stop offset="0.2053" stop-color="#0206ff"/><stop offset="0.4106" stop-color="#2a00ff"/><stop offset="0.7478" stop-color="#7e00ff"/><stop offset="1" stop-color="#c700ff"/></linearGradient>
<linearGradient id="s186" gradientUnits="userSpaceOnUse" x1="1313" x2="1652"><stop offset="0" stop-color="#0011ff"/><stop offset="0.2035" stop-color="#0206ff"/><stop offset="0.41" stop-color="#2a00ff"/><stop offset="0.7522" stop-color="#7e00ff"/><stop offset="1" stop-color="#c500ff"/></linearGradient>
<linearGradient id="s187" gradientUnits="userSpaceOnUse" x1="1314" x2="1650"><stop offset="0" stop-color="#0010ff"/><stop offset="0.2054" stop-color="#0205ff"/><stop offset="0.4107" stop-color="#2900ff"/><stop offset="0.756" stop-color="#7c00ff"/><stop offset="1" stop-color="#c100ff"/></linearGradient>
<linearGradient id="s188" gradientUnits="userSpaceOnUse" x1="1316" x2="1648"><stop offset="0" stop-color="#000fff"/><stop offset="0.2018" stop-color="#0205ff"/><stop offset="0.4096" stop-color="#2800ff"/><stop offset="0.762" stop-color="#7c00ff"/><stop offset="1" stop-color="#be00ff"/></linearGradient>
<linearGradient id="s189" gradientUnits="userSpaceOnUse" x1="1317" x2="1646"><stop offset="0" stop-color="#000fff"/><stop offset="0.2036" stop-color="#0204ff"/><stop offset="0.4164" stop-color="#2900ff"/><stop offset="0.7751" stop-color="#7d00ff"/><stop offset="1" stop-color="#ba00ff"/></linearGradient>
<linearGradient id="s190" gradientUnits="userSpaceOnUse" x1="1318" x2="1644"><stop offset="0" stop-color="#000eff"/><stop offset="0.2025" stop-color="#0204ff"/><stop offset="0.4264" stop-color="#2b00ff"/><stop offset="0.7914" stop-color="#7f00ff"/><stop offset="1" stop-color="#b700ff"/></linearGradient>
<linearGradient id="s191" gradientUnits="userSpaceOnUse" x1="1320" x2="1642"><stop offset="0" stop-color="#000dff"/><stop offset="0.2019" stop-color="#0203ff"/><stop offset="0.4503" stop-color="#2f00ff"/><stop offset="0.8261" stop-color="#8600ff"/><stop offset="1" stop-color="#b300ff"/></linearGradient>
<linearGradient id="s192" gradientUnits="userSpaceOnUse" x1="1321" x2="1640"><stop offset="0" stop-color="#000dff"/><stop offset="0.2006" stop-color="#0203ff"/><stop offset="0.4702" stop-color="#3200ff"/><stop offset="0.8527" stop-color="#8a00ff"/><stop offset="1" stop-color="#b000ff"/></linearGradient>
<linearGradient id="s193" gradientUnits="userSpaceOnUse" x1="1323" x2="1638"><stop offset="0" stop-color="#000cff"/><stop offset="0.2" stop-color="#0203ff"/><stop offset="0.4762" stop-color="#3300ff"/><stop offset="0.8667" stop-color="#8b00ff"/><stop offset="1" stop-color="#ad00ff"/></linearGradient>
<linearGradient id="s194" gradientUnits="userSpaceOnUse" x1="1324" x2="1636"><stop offset="0" stop-color="#000bff"/><stop offset="0.1987" stop-color="#0202ff"/><stop offset="0.4776" stop-color="#3200ff"/><stop offset="0.875" stop-color="#8b00ff"/><stop offset="1" stop-color="#aa00ff"/></linearGradient>
<linearGradient id="s195" gradientUnits="userSpaceOnUse" x1="1325" x2="1634"><stop offset="0" stop-color="#000bff"/><stop offset="0.2006" stop-color="#0202ff"/><stop offset="0.4854" stop-color="#3300ff"/><stop offset="0.8867" stop-color="#8b00ff"/><stop offset="1" stop-color="#a700ff"/></linearGradient>
<linearGradient id="s196" gradientUnits="userSpaceOnUse" x1="1327" x2="1632"><stop offset="0" stop-color="#000aff"/><stop offset="0.1967" stop-color="#0202ff"/><stop offset="0.4852" stop-color="#3200ff"/><stop offset="0.8951" stop-color="#8a00ff"/><stop offset="1" stop-color="#a400ff"/></linearGradient>
<linearGradient id="s197" gradientUnits="userSpaceOnUse" x1="1328" x2="1630"><stop offset="0" stop-color="#0009ff"/><stop offset="0.1987" stop-color="#0201ff"/><stop offset="0.4934" stop-color="#3300ff"/><stop offset="0.9106" stop-color="#8b00ff"/><stop offset="1" stop-color="#a100ff"/></linearGradient>
<linearGradient id="s198" gradientUnits="userSpaceOnUse" x1="1330" x2="1628"><stop offset="0" stop-color="#0009ff"/><stop offset="0.1946" stop-color="#0201ff"/><stop offset="0.4899" stop-color="#3200ff"/><stop offset="0.9128" stop-color="#8900ff"/><stop offset="1" stop-color="#9e00ff"/></linearGradient>
<linearGradient id="s199" gradientUnits="userSpaceOnUse" x1="1331" x2="1626"><stop offset="0" stop-color="#0008ff"/><stop offset="0.1966" stop-color="#0201ff"/><stop offset="0.5017" stop-color="#3300ff"/><stop offset="0.9322" stop-color="#8b00ff"/><stop offset="1" stop-color="#9b00ff"/></linearGradient>
<linearGradient id="s200" gradientUnits="userSpaceOnUse" x1="1333" x2="1624"><stop offset="0" stop-color="#0008ff"/><stop offset="0.1959" stop-color="#0300ff"/><stop offset="0.5086" stop-color="#3400ff"/><stop offset="0.9485" stop-color="#8c00ff"/><stop offset="1" stop-color="#9800ff"/></linearGradient>
<linearGradient id="s201" gradientUnits="userSpaceOnUse" x1="1334" x2="1622"><stop offset="0" stop-color="#0007ff"/><stop offset="0.1944" stop-color="#0200ff"/><stop offset="0.5069" stop-color="#3200ff"/><stop offset="0.9514" stop-color="#8a00ff"/><stop offset="1" stop-color="#9500ff"/></linearGradient>
<linearGradient id="s202" gradientUnits="userSpaceOnUse" x1="1336" x2="1621"><stop offset="0" stop-color="#0006ff"/><stop offset="0.193" stop-color="#0300ff"/><stop offset="0.5158" stop-color="#3400ff"/><stop offset="0.9684" stop-color="#8c00ff"/><stop offset="1" stop-color="#9300ff"/></linearGradient>
<linearGradient id="s203" gradientUnits="userSpaceOnUse" x1="1337" x2="1619"><stop offset="0" stop-color="#0006ff"/><stop offset="0.1915" stop-color="#0200ff"/><stop offset="0.5142" stop-color="#3200ff"/><stop offset="0.9716" stop-color="#8a00ff"/><stop offset="1" stop-color="#9000ff"/></linearGradient>
<linearGradient id="s204" gradientUnits="userSpaceOnUse" x1="1339" x2="1617"><stop offset="0" stop-color="#0005ff"/><stop offset="0.1906" stop-color="#0300ff"/><stop offset="0.5216" stop-color="#3300ff"/><stop offset="0.9892" stop-color="#8b00ff"/><stop offset="1" stop-color="#8d00ff"/></linearGradient>
<linearGradient id="s205" gradientUnits="userSpaceOnUse" x1="1340" x2="1615"><stop offset="0" stop-color="#0005ff"/><stop offset="0.1891" stop-color="#0200ff"/><stop offset="0.5236" stop-color="#3200ff"/><stop offset="1" stop-color="#8b00ff"/></linearGradient>
<linearGradient id="s206" gradientUnits="userSpaceOnUse" x1="1342" x2="1613"><stop offset="0" stop-color="#0004ff"/><stop offset="0.1882" stop-color="#0300ff"/><stop offset="0.5314" stop-color="#3300ff"/><stop offset="1" stop-color="#8800ff"/></linearGradient>
<linearGradient id="s207" gradientUnits="userSpaceOnUse" x1="1343" x2="1611"><stop offset="0" stop-color="#0004ff"/><stop offset="0.1866" stop-color="#0200ff"/><stop offset="0.5336" stop-color="#3300ff"/><stop offset="1" stop-color="#8500ff"/></linearGradient>
<linearGradient id="s208" gradientUnits="userSpaceOnUse" x1="1345" x2="1609"><stop offset="0" stop-color="#0003ff"/><stop offset="0.1856" stop-color="#0300ff"/><stop offset="0.5417" stop-color="#3300ff"/><stop offset="1" stop-color="#8300ff"/></linearGradient>
<linearGradient id="s209" gradientUnits="userSpaceOnUse" x1="1346" x2="1607"><stop offset="0" stop-color="#0003ff"/><stop offset="0.1839" stop-color="#0200ff"/><stop offset="0.5441" stop-color="#3300ff"/><stop offset="1" stop-color="#8000ff"/></linearGradient>
<linearGradient id="s210" gradientUnits="userSpaceOnUse" x1="1348" x2="1605"><stop offset="0" stop-color="#0002ff"/><stop offset="0.1829" stop-color="#0200ff"/><stop offset="0.5525" stop-color="#3300ff"/><stop offset="1" stop-color="#7e00ff"/></linearGradient>
<linearGradient id="s211" gradientUnits="userSpaceOnUse" x1="1349" x2="1603"><stop offset="0" stop-color="#0002ff"/><stop offset="0.1811" stop-color="#0200ff"/><stop offset="0.5551" stop-color="#3300ff"/><stop offset="1" stop-color="#7b00ff"/></linearGradient>
<linearGradient id="s212" gradientUnits="userSpaceOnUse" x1="1351" x2="1601"><stop offset="0" stop-color="#0001ff"/><stop offset="0.18" stop-color="#0200ff"/><stop offset="0.564" stop-color="#3300ff"/><stop offset="1" stop-color="#7900ff"/></linearGradient>
<linearGradient id="s213" gradientUnits="userSpaceOnUse" x1="1353" x2="1599"><stop offset="0" stop-color="#0001ff"/><stop offset="0.1789" stop-color="#0300ff"/><stop offset="0.5732" stop-color="#3400ff"/><stop offset="1" stop-color="#7600ff"/></linearGradient>
<linearGradient id="s214" gradientUnits="userSpaceOnUse" x1="1354" x2="1597"><stop offset="0" stop-color="#0001ff"/><stop offset="0.177" stop-color="#0200ff"/><stop offset="0.5761" stop-color="#3300ff"/><stop offset="1" stop-color="#7400ff"/></linearGradient>
<linearGradient id="s215" gradientUnits="userSpaceOnUse" x1="1356" x2="1595"><stop offset="0" stop-color="#0000ff"/><stop offset="0.1757" stop-color="#0300ff"/><stop offset="0.5858" stop-color="#3400ff"/><stop offset="1" stop-color="#7200ff"/></linearGradient>
<linearGradient id="s216" gradientUnits="userSpaceOnUse" x1="1357" x2="1593"><stop offset="0" stop-color="#0000ff"/><stop offset="0.1737" stop-color="#0200ff"/><stop offset="0.589" stop-color="#3300ff"/><stop offset="1" stop-color="#6f00ff"/></linearGradient>
<linearGradient id="s217" gradientUnits="userSpaceOnUse" x1="1359" x2="1591"><stop offset="0" stop-color="#0000ff"/><stop offset="0.1724" stop-color="#0300ff"/><stop offset="0.5991" stop-color="#3400ff"/><stop offset="1" stop-color="#6d00ff"/></linearGradient>
<linearGradient id="s218" gradientUnits="userSpaceOnUse" x1="1361" x2="1589"><stop offset="0" stop-color="#0000ff"/><stop offset="0.1711" stop-color="#0300ff"/><stop offset="0.6096" stop-color="#3400ff"/><stop offset="1" stop-color="#6b00ff"/></linearGradient>
<linearGradient id="s219" gradientUnits="userSpaceOnUse" x1="1362" x2="1588"><stop offset="0" stop-color="#0000ff"/><stop offset="0.1681" stop-color="#0300ff"/><stop offset="0.6106" stop-color="#3400ff"/><stop offset="1" stop-color="#6900ff"/></linearGradient>
<linearGradient id="s220" gradientUnits="userSpaceOnUse" x1="1364" x2="1586"><stop offset="0" stop-color="#0000ff"/><stop offset="0.1667" stop-color="#0300ff"/><stop offset="0.6216" stop-color="#3400ff"/><stop offset="1" stop-color="#6700ff"/></linearGradient>
<linearGradient id="s221" gradientUnits="userSpaceOnUse" x1="1366" x2="1584"><stop offset="0" stop-color="#0000ff"/><stop offset="0.1651" stop-color="#0300ff"/><stop offset="0.633" stop-color="#3500ff"/><stop offset="1" stop-color="#6500ff"/></linearGradient>
<linearGradient id="s222" gradientUnits="userSpaceOnUse" x1="1367" x2="1582"><stop offset="0" stop-color="#0000ff"/><stop offset="0.1628" stop-color="#0300ff"/><stop offset="0.6372" stop-color="#3400ff"/><stop offset="1" stop-color="#6300ff"/></linearGradient>
<linearGradient id="s223" gradientUnits="userSpaceOnUse" x1="1369" x2="1580"><stop offset="0" stop-color="#0000ff"/><stop offset="0.1611" stop-color="#0300ff"/><stop offset="0.6493" stop-color="#3500ff"/><stop offset="1" stop-color="#6100ff"/></linearGradient>
<linearGradient id="s224" gradientUnits="userSpaceOnUse" x1="1371" x2="1578"><stop offset="0" stop-color="#0000ff"/><stop offset="0.1594" stop-color="#0300ff"/><stop offset="0.6618" stop-color="#3600ff"/><stop offset="1" stop-color="#5f00ff"/></linearGradient>
<linearGradient id="s225" gradientUnits="userSpaceOnUse" x1="1373" x2="1576"><stop offset="0" stop-color="#0000ff"/><stop offset="0.1576" stop-color="#0300ff"/><stop offset="0.6749" stop-color="#3600ff"/><stop offset="1" stop-color="#5d00ff"/></linearGradient>
<linearGradient id="s226" gradientUnits="userSpaceOnUse" x1="1374" x2="1574"><stop offset="0" stop-color="#0000ff"/><stop offset="0.155" stop-color="#0300ff"/><stop offset="0.68" stop-color="#3600ff"/><stop offset="1" stop-color="#5b00ff"/></linearGradient>
<linearGradient id="s227" gradientUnits="userSpaceOnUse" x1="1376" x2="1572"><stop offset="0" stop-color="#0000ff"/><stop offset="0.1531" stop-color="#0300ff"/><stop offset="0.6939" stop-color="#3600ff"/><stop offset="1" stop-color="#5900ff"/></linearGradient>
<linearGradient id="s228" gradientUnits="userSpaceOnUse" x1="1378" x2="1570"><stop offset="0" stop-color="#0000ff"/><stop offset="0.151" stop-color="#0300ff"/><stop offset="0.7083" stop-color="#3700ff"/><stop offset="1" stop-color="#5700ff"/></linearGradient>
<linearGradient id="s229" gradientUnits="userSpaceOnUse" x1="1380" x2="1568"><stop offset="0" stop-color="#0000ff"/><stop offset="0.1489" stop-color="#0400ff"/><stop offset="0.7234" stop-color="#3700ff"/><stop offset="1" stop-color="#5500ff"/></linearGradient>
<linearGradient id="s230" gradientUnits="userSpaceOnUse" x1="1382" x2="1566"><stop offset="0" stop-color="#0000ff"/><stop offset="0.1467" stop-color="#0400ff"/><stop offset="0.7391" stop-color="#3800ff"/><stop offset="1" stop-color="#5300ff"/></linearGradient>
<linearGradient id="s231" gradientUnits="userSpaceOnUse" x1="1384" x2="1564"><stop offset="0" stop-color="#0000ff"/><stop offset="0.15" stop-color="#0400ff"/><stop offset="0.7667" stop-color="#3900ff"/><stop offset="1" stop-color="#5100ff"/></linearGradient>
<linearGradient id="s232" gradientUnits="userSpaceOnUse" x1="1386" x2="1562"><stop offset="0" stop-color="#0000ff"/><stop offset="0.1534" stop-color="#0500ff"/><stop offset="0.7955" stop-color="#3b00ff"/><stop offset="1" stop-color="#4f00ff"/></linearGradient>
<linearGradient id="s233" gradientUnits="userSpaceOnUse" x1="1388" x2="1560"><stop offset="0" stop-color="#0000ff"/><stop offset="0.1628" stop-color="#0600ff"/><stop offset="0.8314" stop-color="#3d00ff"/><stop offset="1" stop-color="#4d00ff"/></linearGradient>
<linearGradient id="s234" gradientUnits="userSpaceOnUse" x1="1390" x2="1558"><stop offset="0" stop-color="#0000ff"/><stop offset="0.1845" stop-color="#0800ff"/><stop offset="0.8929" stop-color="#4100ff"/><stop offset="1" stop-color="#4c00ff"/></linearGradient>
<linearGradient id="s235" gradientUnits="userSpaceOnUse" x1="1392" x2="1557"><stop offset="0" stop-color="#0000ff"/><stop offset="0.2242" stop-color="#0b00ff"/><stop offset="0.9758" stop-color="#4800ff"/><stop offset="1" stop-color="#4a00ff"/></linearGradient>
<linearGradient id="s236" gradientUnits="userSpaceOnUse" x1="1394" x2="1555"><stop offset="0" stop-color="#0000ff"/><stop offset="0.2919" stop-color="#0f00ff"/><stop offset="1" stop-color="#4900ff"/></linearGradient>
<linearGradient id="s237" gradientUnits="userSpaceOnUse" x1="1396" x2="1553"><stop offset="0" stop-color="#0000ff"/><stop offset="0.3758" stop-color="#1500ff"/><stop offset="1" stop-color="#4700ff"/></linearGradient>
<linearGradient id="s238" gradientUnits="userSpaceOnUse" x1="1398" x2="1551"><stop offset="0" stop-color="#0000ff"/><stop offset="0.4706" stop-color="#1c00ff"/><stop offset="1" stop-color="#4500ff"/></linearGradient>
<linearGradient id="s239" gradientUnits="userSpaceOnUse" x1="1400" x2="1549"><stop offset="0" stop-color="#0000ff"/><stop offset="0.5638" stop-color="#2200ff"/><stop offset="1" stop-color="#4300ff"/></linearGradient>
<linearGradient id="s240" gradientUnits="userSpaceOnUse" x1="1402" x2="1547"><stop offset="0" stop-color="#0000ff"/><stop offset="0.6483" stop-color="#2700ff"/><stop offset="1" stop-color="#4200ff"/></linearGradient>
<linearGradient id="s241" gradientUnits="userSpaceOnUse" x1="1404" x2="1545"><stop offset="0" stop-color="#0000ff"/><stop offset="0.7021" stop-color="#2a00ff"/><stop offset="1" stop-color="#4000ff"/></linearGradient>
<linearGradient id="s242" gradientUnits="userSpaceOnUse" x1="1407" x2="1543"><stop offset="0" stop-color="#0100ff"/><stop offset="0.7647" stop-color="#2e00ff"/><stop offset="1" stop-color="#3e00ff"/></linearGradient>
<linearGradient id="s243" gradientUnits="userSpaceOnUse" x1="1409" x2="1541"><stop offset="0" stop-color="#0200ff"/><stop offset="0.8106" stop-color="#3000ff"/><stop offset="1" stop-color="#3d00ff"/></linearGradient>
<linearGradient id="s244" gradientUnits="userSpaceOnUse" x1="1411" x2="1539"><stop offset="0" stop-color="#0200ff"/><stop offset="0.8516" stop-color="#3200ff"/><stop offset="1" stop-color="#3b00ff"/></linearGradient>
<linearGradient id="s245" gradientUnits="userSpaceOnUse" x1="1413" x2="1537"><stop offset="0" stop-color="#0300ff"/><stop offset="0.9032" stop-color="#3400ff"/><stop offset="1" stop-color="#3a00ff"/></linearGradient>
<linearGradient id="s246" gradientUnits="userSpaceOnUse" x1="1416" x2="1535"><stop offset="0" stop-color="#0300ff"/><stop offset="0.9664" stop-color="#3600ff"/><stop offset="1" stop-color="#3800ff"/></linearGradient>
<linearGradient id="s247" gradientUnits="userSpaceOnUse" x1="1418" x2="1533"><stop offset="0" stop-color="#0400ff"/><stop offset="1" stop-color="#3700ff"/></linearGradient>
<linearGradient id="s248" gradientUnits="userSpaceOnUse" x1="1420" x2="1531"><stop offset="0" stop-color="#0400ff"/><stop offset="1" stop-color="#3500ff"/></linearGradient>
<linearGradient id="s249" gradientUnits="userSpaceOnUse" x1="1423" x2="1529"><stop offset="0" stop-color="#0500ff"/><stop offset="1" stop-color="#3400ff"/></linearGradient>
<linearGradient id="s250" gradientUnits="userSpaceOnUse" x1="1425" x2="1527"><stop offset="0" stop-color="#0600ff"/><stop offset="1" stop-color="#3200ff"/></linearGradient>
<linearGradient id="s251" gradientUnits="userSpaceOnUse" x1="1427" x2="1526"><stop offset="0" stop-color="#0600ff"/><stop offset="1" stop-color="#3100ff"/></linearGradient>
<linearGradient id="s252" gradientUnits="userSpaceOnUse" x1="1430" x2="1524"><stop offset="0" stop-color="#0700ff"/><stop offset="1" stop-color="#3000ff"/></linearGradient>
<linearGradient id="s253" gradientUnits="userSpaceOnUse" x1="1432" x2="1522"><stop offset="0" stop-color="#0800ff"/><stop offset="1" stop-color="#2e00ff"/></linearGradient>
<linearGradient id="s254" gradientUnits="userSpaceOnUse" x1="1435" x2="1520"><stop offset="0" stop-color="#0800ff"/><stop offset="1" stop-color="#2d00ff"/></linearGradient>
<linearGradient id="s255" gradientUnits="userSpaceOnUse" x1="1437" x2="1518"><stop offset="0" stop-color="#0900ff"/><stop offset="1" stop-color="#2c00ff"/></linearGradient>
<linearGradient id="s256" gradientUnits="userSpaceOnUse" x1="1440" x2="1516"><stop offset="0" stop-color="#0a00ff"/><stop offset="1" stop-color="#2a00ff"/></linearGradient>
<linearGradient id="s257" gradientUnits="userSpaceOnUse" x1="1442" x2="1514"><stop offset="0" stop-color="#0a00ff"/><stop offset="1" stop-color="#2900ff"/></linearGradient>
<linearGradient id="s258" gradientUnits="userSpaceOnUse" x1="1444" x2="1512"><stop offset="0" stop-color="#0b00ff"/><stop offset="1" stop-color="#2800ff"/></linearGradient>
<linearGradient id="s259" gradientUnits="userSpaceOnUse" x1="1447" x2="1510"><stop offset="0" stop-color="#0c00ff"/><stop offset="1" stop-color="#2600ff"/></linearGradient>
<linearGradient id="s260" gradientUnits="userSpaceOnUse" x1="1449" x2="1508"><stop offset="0" stop-color="#0c00ff"/><stop offset="1" stop-color="#2500ff"/></linearGradient>
<linearGradient id="s261" gradientUnits="userSpaceOnUse" x1="1452" x2="1506"><stop offset="0" stop-color="#0d00ff"/><stop offset="1" stop-color="#2400ff"/></linearGradient>
<linearGradient id="s262" gradientUnits="userSpaceOnUse" x1="1454" x2="1504"><stop offset="0" stop-color="#0e00ff"/><stop offset="1" stop-color="#2200ff"/></linearGradient>
<linearGradient id="s263" gradientUnits="userSpaceOnUse" x1="1456" x2="1502"><stop offset="0" stop-color="#0e00ff"/><stop offset="1" stop-color="#2100ff"/></linearGradient>
<linearGradient id="s264" gradientUnits="userSpaceOnUse" x1="1459" x2="1500"><stop offset="0" stop-color="#0f00ff"/><stop offset="1" stop-color="#2000ff"/></linearGradient>
<linearGradient id="s265" gradientUnits="userSpaceOnUse" x1="1461" x2="1498"><stop offset="0" stop-color="#1000ff"/><stop offset="1" stop-color="#1f00ff"/></linearGradient>
<linearGradient id="s266" gradientUnits="userSpaceOnUse" x1="1463" x2="1496"><stop offset="0" stop-color="#1000ff"/><stop offset="1" stop-color="#1e00ff"/></linearGradient>
<linearGradient id="s267" gradientUnits="userSpaceOnUse" x1="1466" x2="1494"><stop offset="0" stop-color="#1100ff"/><stop offset="1" stop-color="#1c00ff"/></linearGradient>
<linearGradient id="s268" gradientUnits="userSpaceOnUse" x1="1468" x2="1493"><stop offset="0" stop-color="#1200ff"/><stop offset="1" stop-color="#1c00ff"/></linearGradient>
<linearGradient id="s269" gradientUnits="userSpaceOnUse" x1="1471" x2="1491"><stop offset="0" stop-color="#1300ff"/><stop offset="1" stop-color="#1b00ff"/></linearGradient>
<linearGradient id="s270" gradientUnits="userSpaceOnUse" x1="1474" x2="1489"><stop offset="0" stop-color="#1300ff"/><stop offset="1" stop-color="#1900ff"/></linearGradient>
<linearGradient id="s271" gradientUnits="userSpaceOnUse" x1="1477" x2="1487"><stop offset="0" stop-color="#1400ff"/><stop offset="1" stop-color="#1800ff"/></linearGradient>
<linearGradient id="i1" gradientUnits="userSpaceOnUse" x1="1655" x2="1899"><stop offset="0" stop-color="#bcff00"/><stop offset="0.8197" stop-color="#fffd00"/><stop offset="1" stop-color="#ffee00"/></linearGradient>
<linearGradient id="i2" gradientUnits="userSpaceOnUse" x1="1655" x2="1899"><stop offset="0" stop-color="#bdff00"/><stop offset="0.8156" stop-color="#fffd00"/><stop offset="1" stop-color="#ffed00"/></linearGradient>
<linearGradient id="i3" gradientUnits="userSpaceOnUse" x1="1655" x2="1899"><stop offset="0" stop-color="#bdff00"/><stop offset="0.8074" stop-color="#fffd00"/><stop offset="1" stop-color="#ffec00"/></linearGradient>
<linearGradient id="i4" gradientUnits="userSpaceOnUse" x1="1655" x2="1899"><stop offset="0" stop-color="#beff00"/><stop offset="0.7992" stop-color="#fffd00"/><stop offset="1" stop-color="#ffec00"/></linearGradient>
<linearGradient id="i5" gradientUnits="userSpaceOnUse" x1="1655" x2="1899"><stop offset="0" stop-color="#beff00"/><stop offset="0.791" stop-color="#fffd00"/><stop offset="1" stop-color="#ffeb00"/></linearGradient>
<linearGradient id="i6" gradientUnits="userSpaceOnUse" x1="1655" x2="1899"><stop offset="0" stop-color="#bfff00"/><stop offset="0.7828" stop-color="#fffd00"/><stop offset="1" stop-color="#ffeb00"/></linearGradient>
<linearGradient id="i7" gradientUnits="userSpaceOnUse" x1="1655" x2="1899"><stop offset="0" stop-color="#bfff00"/><stop offset="0.7787" stop-color="#fffd00"/><stop offset="1" stop-color="#ffea00"/></linearGradient>
<linearGradient id="i8" gradientUnits="userSpaceOnUse" x1="1655" x2="1899"><stop offset="0" stop-color="#c0ff00"/><stop offset="0.7705" stop-color="#fffd00"/><stop offset="1" stop-color="#ffe900"/></linearGradient>
<linearGradient id="i9" gradientUnits="userSpaceOnUse" x1="1655" x2="1899"><stop offset="0" stop-color="#c0ff00"/><stop offset="0.7623" stop-color="#fffd00"/><stop offset="1" stop-color="#ffe900"/></linearGradient>
<linearGradient id="i10" gradientUnits="userSpaceOnUse" x1="1655" x2="1899"><stop offset="0" stop-color="#c1ff01"/><stop offset="0.7541" stop-color="#fffd00"/><stop offset="1" stop-color="#ffe800"/></linearGradient>
<linearGradient id="i11" gradientUnits="userSpaceOnUse" x1="1655" x2="1899"><stop offset="0" stop-color="#c1ff01"/><stop offset="0.75" stop-color="#fffd00"/><stop offset="1" stop-color="#ffe800"/></linearGradient>
<linearGradient id="i12" gradientUnits="userSpaceOnUse" x1="1655" x2="1899"><stop offset="0" stop-color="#c2ff01"/><stop offset="0.7418" stop-color="#fffd00"/><stop offset="1" stop-color="#ffe700"/></linearGradient>
<linearGradient id="i13" gradientUnits="userSpaceOnUse" x1="1655" x2="1899"><stop offset="0" stop-color="#c2ff01"/><stop offset="0.7336" stop-color="#fffd00"/><stop offset="1" stop-color="#ffe600"/></linearGradient>
<linearGradient id="i14" gradientUnits="userSpaceOnUse" x1="1655" x2="1899"><stop offset="0" stop-color="#c3ff01"/><stop offset="0.7254" stop-color="#fffd00"/><stop offset="1" stop-color="#ffe600"/></linearGradient>
<linearGradient id="i15" gradientUnits="userSpaceOnUse" x1="1655" x2="1899"><stop offset="0" stop-color="#c3ff01"/><stop offset="0.7172" stop-color="#fffd00"/><stop offset="1" stop-color="#ffe500"/></linearGradient>
<linearGradient id="i16" gradientUnits="userSpaceOnUse" x1="1655" x2="1899"><stop offset="0" stop-color="#c4ff01"/><stop offset="0.7131" stop-color="#fffd00"/><stop offset="1" stop-color="#ffe500"/></linearGradient>
<linearGradient id="i17" gradientUnits="userSpaceOnUse" x1="1655" x2="1899"><stop offset="0" stop-color="#c4ff02"/><stop offset="0.7049" stop-color="#fffd00"/><stop offset="1" stop-color="#ffe400"/></linearGradient>
<linearGradient id="i18" gradientUnits="userSpaceOnUse" x1="1655" x2="1899"><stop offset="0" stop-color="#c5ff02"/><stop offset="0.6967" stop-color="#fffd00"/><stop offset="1" stop-color="#ffe300"/></linearGradient>
<linearGradient id="i19" gradientUnits="userSpaceOnUse" x1="1655" x2="1899"><stop offset="0" stop-color="#c5ff02"/><stop offset="0.6885" stop-color="#fffd00"/><stop offset="1" stop-color="#ffe300"/></linearGradient>
<linearGradient id="i20" gradientUnits="userSpaceOnUse" x1="1655" x2="1899"><stop offset="0" stop-color="#c6ff02"/><stop offset="0.6803" stop-color="#fffd00"/><stop offset="1" stop-color="#ffe200"/></linearGradient>
<linearGradient id="i21" gradientUnits="userSpaceOnUse" x1="1655" x2="1899"><stop offset="0" stop-color="#c6ff02"/><stop offset="0.6762" stop-color="#fffd00"/><stop offset="1" stop-color="#ffe200"/></linearGradient>
<linearGradient id="i22" gradientUnits="userSpaceOnUse" x1="1655" x2="1899"><stop offset="0" stop-color="#c7ff02"/><stop offset="0.668" stop-color="#fffd00"/><stop offset="1" stop-color="#ffe100"/></linearGradient>
<linearGradient id="i23" gradientUnits="userSpaceOnUse" x1="1655" x2="1899"><stop offset="0" stop-color="#c8ff03"/><stop offset="0.6598" stop-color="#fffd00"/><stop offset="1" stop-color="#ffe000"/></linearGradient>
<linearGradient id="i24" gradientUnits="userSpaceOnUse" x1="1655" x2="1899"><stop offset="0" stop-color="#c8ff03"/><stop offset="0.6516" stop-color="#fffd00"/><stop offset="1" stop-color="#ffe000"/></linearGradient>
<linearGradient id="i25" gradientUnits="userSpaceOnUse" x1="1655" x2="1899"><stop offset="0" stop-color="#c9ff03"/><stop offset="0.6434" stop-color="#fffd00"/><stop offset="1" stop-color="#ffdf00"/></linearGradient>
<linearGradient id="i26" gradientUnits="userSpaceOnUse" x1="1655" x2="1899"><stop offset="0" stop-color="#c9ff03"/><stop offset="0.6393" stop-color="#fffd00"/><stop offset="1" stop-color="#ffdf00"/></linearGradient>
<linearGradient id="i27" gradientUnits="userSpaceOnUse" x1="1655" x2="1899"><stop offset="0" stop-color="#caff03"/><stop offset="0.6311" stop-color="#fffd00"/><stop offset="1" stop-color="#ffde00"/></linearGradient>
<linearGradient id="i28" gradientUnits="userSpaceOnUse" x1="1655" x2="1899"><stop offset="0" stop-color="#caff03"/><stop offset="0.623" stop-color="#fffd00"/><stop offset="1" stop-color="#ffdd00"/></linearGradient>
<linearGradient id="i29" gradientUnits="userSpaceOnUse" x1="1655" x2="1899"><stop offset="0" stop-color="#cbff04"/><stop offset="0.6148" stop-color="#fffd00"/><stop offset="1" stop-color="#ffdd00"/></linearGradient>
<linearGradient id="i30" gradientUnits="userSpaceOnUse" x1="1655" x2="1899"><stop offset="0" stop-color="#cbff04"/><stop offset="0.6066" stop-color="#fffd00"/><stop offset="1" stop-color="#ffdc00"/></linearGradient>
<linearGradient id="i31" gradientUnits="userSpaceOnUse" x1="1655" x2="1899"><stop offset="0" stop-color="#ccff04"/><stop offset="0.6025" stop-color="#fffd00"/><stop offset="1" stop-color="#ffdc00"/></linearGradient>
<linearGradient id="i32" gradientUnits="userSpaceOnUse" x1="1655" x2="1899"><stop offset="0" stop-color="#ccff04"/><stop offset="0.5943" stop-color="#fffd00"/><stop offset="1" stop-color="#ffdb00"/></linearGradient>
<linearGradient id="i33" gradientUnits="userSpaceOnUse" x1="1655" x2="1899"><stop offset="0" stop-color="#cdff04"/><stop offset="0.5861" stop-color="#fffd00"/><stop offset="1" stop-color="#ffda00"/></linearGradient>
<linearGradient id="i34" gradientUnits="userSpaceOnUse" x1="1655" x2="1899"><stop offset="0" stop-color="#ceff04"/><stop offset="0.5779" stop-color="#fffd00"/><stop offset="1" stop-color="#ffda00"/></linearGradient>
<linearGradient id="i35" gradientUnits="userSpaceOnUse" x1="1655" x2="1899"><stop offset="0" stop-color="#ceff05"/><stop offset="0.5738" stop-color="#fffd00"/><stop offset="1" stop-color="#ffd900"/></linearGradient>
<linearGradient id="i36" gradientUnits="userSpaceOnUse" x1="1655" x2="1899"><stop offset="0" stop-color="#cfff05"/><stop offset="0.5656" stop-color="#fffd00"/><stop offset="1" stop-color="#ffd900"/></linearGradient>
<linearGradient id="i37" gradientUnits="userSpaceOnUse" x1="1655" x2="1899"><stop offset="0" stop-color="#cfff05"/><stop offset="0.5574" stop-color="#fffd00"/><stop offset="1" stop-color="#ffd800"/></linearGradient>
<linearGradient id="i38" gradientUnits="userSpaceOnUse" x1="1655" x2="1899"><stop offset="0" stop-color="#d0ff05"/><stop offset="0.5492" stop-color="#fffd00"/><stop offset="1" stop-color="#ffd800"/></linearGradient>
<linearGradient id="i39" gradientUnits="userSpaceOnUse" x1="1655" x2="1899"><stop offset="0" stop-color="#d0ff05"/><stop offset="0.541" stop-color="#fffd00"/><stop offset="1" stop-color="#ffd700"/></linearGradient>
<linearGradient id="i40" gradientUnits="userSpaceOnUse" x1="1655" x2="1899"><stop offset="0" stop-color="#d1ff06"/><stop offset="0.5369" stop-color="#fffd00"/><stop offset="1" stop-color="#ffd600"/></linearGradient>
<linearGradient id="i41" gradientUnits="userSpaceOnUse" x1="1655" x2="1899"><stop offset="0" stop-color="#d1ff06"/><stop offset="0.5287" stop-color="#fffd00"/><stop offset="1" stop-color="#ffd600"/></linearGradient>
<linearGradient id="i42" gradientUnits="userSpaceOnUse" x1="1655" x2="1899"><stop offset="0" stop-color="#d2ff06"/><stop offset="0.5205" stop-color="#fffd00"/><stop offset="1" stop-color="#ffd500"/></linearGradient>
<linearGradient id="i43" gradientUnits="userSpaceOnUse" x1="1655" x2="1899"><stop offset="0" stop-color="#d3ff06"/><stop offset="0.5123" stop-color="#fffd00"/><stop offset="1" stop-color="#ffd500"/></linearGradient>
<linearGradient id="i44" gradientUnits="userSpaceOnUse" x1="1655" x2="1899"><stop offset="0" stop-color="#d3ff06"/><stop offset="0.5041" stop-color="#fffd00"/><stop offset="1" stop-color="#ffd400"/></linearGradient>
<linearGradient id="i45" gradientUnits="userSpaceOnUse" x1="1655" x2="1899"><stop offset="0" stop-color="#d4ff07"/><stop offset="0.5" stop-color="#fffd00"/><stop offset="1" stop-color="#ffd300"/></linearGradient>
<linearGradient id="i46" gradientUnits="userSpaceOnUse" x1="1655" x2="1899"><stop offset="0" stop-color="#d4ff07"/><stop offset="0.4918" stop-color="#fffd01"/><stop offset="1" stop-color="#ffd300"/></linearGradient>
<linearGradient id="i47" gradientUnits="userSpaceOnUse" x1="1655" x2="1899"><stop offset="0" stop-color="#d5ff07"/><stop offset="0.4836" stop-color="#fffd01"/><stop offset="1" stop-color="#ffd200"/></linearGradient>
<linearGradient id="i48" gradientUnits="userSpaceOnUse" x1="1655" x2="1899"><stop offset="0" stop-color="#d6ff07"/><stop offset="0.4754" stop-color="#fffd01"/><stop offset="1" stop-color="#ffd200"/></linearGradient>
<linearGradient id="i49" gradientUnits="userSpaceOnUse" x1="1655" x2="1899"><stop offset="0" stop-color="#d6ff07"/><stop offset="0.4672" stop-color="#fffd01"/><stop offset="1" stop-color="#ffd100"/></linearGradient>
<linearGradient id="i50" gradientUnits="userSpaceOnUse" x1="1655" x2="1899"><stop offset="0" stop-color="#d7ff08"/><stop offset="0.4631" stop-color="#fffd02"/><stop offset="1" stop-color="#ffd100"/></linearGradient>
<linearGradient id="i51" gradientUnits="userSpaceOnUse" x1="1655" x2="1899"><stop offset="0" stop-color="#d7ff08"/><stop offset="0.4549" stop-color="#fffd02"/><stop offset="1" stop-color="#ffd000"/></linearGradient>
<linearGradient id="i52" gradientUnits="userSpaceOnUse" x1="1655" x2="1899"><stop offset="0" stop-color="#d8ff08"/><stop offset="0.4467" stop-color="#fffd02"/><stop offset="1" stop-color="#ffcf00"/></linearGradient>
<linearGradient id="i53" gradientUnits="userSpaceOnUse" x1="1655" x2="1899"><stop offset="0" stop-color="#d9ff08"/><stop offset="0.4385" stop-color="#fffd02"/><stop offset="1" stop-color="#ffcf00"/></linearGradient>
<linearGradient id="i54" gradientUnits="userSpaceOnUse" x1="1655" x2="1899"><stop offset="0" stop-color="#d9ff09"/><stop offset="0.4303" stop-color="#fffd03"/><stop offset="1" stop-color="#ffce00"/></linearGradient>
<linearGradient id="i55" gradientUnits="userSpaceOnUse" x1="1655" x2="1899"><stop offset="0" stop-color="#daff09"/><stop offset="0.4262" stop-color="#fffd03"/><stop offset="1" stop-color="#ffce00"/></linearGradient>
<linearGradient id="i56" gradientUnits="userSpaceOnUse" x1="1655" x2="1899"><stop offset="0" stop-color="#daff09"/><stop offset="0.418" stop-color="#fffd03"/><stop offset="1" stop-color="#ffcd00"/></linearGradient>
<linearGradient id="i57" gradientUnits="userSpaceOnUse" x1="1655" x2="1899"><stop offset="0" stop-color="#dbff09"/><stop offset="0.4098" stop-color="#fffd03"/><stop offset="1" stop-color="#ffcd00"/></linearGradient>
<linearGradient id="i58" gradientUnits="userSpaceOnUse" x1="1655" x2="1899"><stop offset="0" stop-color="#dcff09"/><stop offset="0.4016" stop-color="#fffd04"/><stop offset="1" stop-color="#ffcc00"/></linearGradient>
<linearGradient id="i59" gradientUnits="userSpaceOnUse" x1="1655" x2="1899"><stop offset="0" stop-color="#dcff0a"/><stop offset="0.3975" stop-color="#fffd04"/><stop offset="1" stop-color="#ffcb00"/></linearGradient>
<linearGradient id="i60" gradientUnits="userSpaceOnUse" x1="1655" x2="1899"><stop offset="0" stop-color="#ddff0a"/><stop offset="0.3893" stop-color="#fffd04"/><stop offset="1" stop-color="#ffcb00"/></linearGradient>
<linearGradient id="i61" gradientUnits="userSpaceOnUse" x1="1655" x2="1899"><stop offset="0" stop-color="#ddff0a"/><stop offset="0.3811" stop-color="#fffd05"/><stop offset="1" stop-color="#ffca00"/></linearGradient>
<linearGradient id="i62" gradientUnits="userSpaceOnUse" x1="1655" x2="1899"><stop offset="0" stop-color="#deff0a"/><stop offset="0.373" stop-color="#fffd05"/><stop offset="1" stop-color="#ffca00"/></linearGradient>
<linearGradient id="i63" gradientUnits="userSpaceOnUse" x1="1655" x2="1899"><stop offset="0" stop-color="#dfff0b"/><stop offset="0.3648" stop-color="#fffd05"/><stop offset="1" stop-color="#ffc900"/></linearGradient>
<linearGradient id="i64" gradientUnits="userSpaceOnUse" x1="1655" x2="1899"><stop offset="0" stop-color="#dfff0b"/><stop offset="0.3607" stop-color="#fffd06"/><stop offset="1" stop-color="#ffc900"/></linearGradient>
<linearGradient id="i65" gradientUnits="userSpaceOnUse" x1="1655" x2="1899"><stop offset="0" stop-color="#e0ff0b"/><stop offset="0.3525" stop-color="#fffd06"/><stop offset="0.9959" stop-color="#ffc800"/><stop offset="1" stop-color="#ffc800"/></linearGradient>
<linearGradient id="i66" gradientUnits="userSpaceOnUse" x1="1655" x2="1899"><stop offset="0" stop-color="#e1ff0b"/><stop offset="0.3443" stop-color="#fffd06"/><stop offset="0.9836" stop-color="#ffc900"/><stop offset="1" stop-color="#ffc700"/></linearGradient>
<linearGradient id="i67" gradientUnits="userSpaceOnUse" x1="1655" x2="1899"><stop offset="0" stop-color="#e1ff0b"/><stop offset="0.3361" stop-color="#fffd07"/><stop offset="0.9754" stop-color="#ffc900"/><stop offset="1" stop-color="#ffc700"/></linearGradient>
<linearGradient id="i68" gradientUnits="userSpaceOnUse" x1="1655" x2="1899"><stop offset="0" stop-color="#e2ff0c"/><stop offset="0.3279" stop-color="#fffd07"/><stop offset="0.9672" stop-color="#ffc900"/><stop offset="1" stop-color="#ffc600"/></linearGradient>
<linearGradient id="i69" gradientUnits="userSpaceOnUse" x1="1655" x2="1899"><stop offset="0" stop-color="#e2ff0c"/><stop offset="0.3238" stop-color="#fffd07"/><stop offset="0.9631" stop-color="#ffc800"/><stop offset="1" stop-color="#ffc600"/></linearGradient>
<linearGradient id="i70" gradientUnits="userSpaceOnUse" x1="1655" x2="1899"><stop offset="0" stop-color="#e3ff0c"/><stop offset="0.3156" stop-color="#fffd07"/><stop offset="0.9549" stop-color="#ffc800"/><stop offset="1" stop-color="#ffc500"/></linearGradient>
<linearGradient id="i71" gradientUnits="userSpaceOnUse" x1="1655" x2="1899"><stop offset="0" stop-color="#e4ff0c"/><stop offset="0.3074" stop-color="#fffd08"/><stop offset="0.9426" stop-color="#ffc900"/><stop offset="1" stop-color="#ffc500"/></linearGradient>
<linearGradient id="i72" gradientUnits="userSpaceOnUse" x1="1655" x2="1899"><stop offset="0" stop-color="#e4ff0d"/><stop offset="0.2992" stop-color="#fffd08"/><stop offset="0.9344" stop-color="#ffc900"/><stop offset="1" stop-color="#ffc400"/></linearGradient>
<linearGradient id="i73" gradientUnits="userSpaceOnUse" x1="1655" x2="1899"><stop offset="0" stop-color="#e5ff0d"/><stop offset="0.2951" stop-color="#fffd08"/><stop offset="0.9303" stop-color="#ffc800"/><stop offset="1" stop-color="#ffc400"/></linearGradient>
<linearGradient id="i74" gradientUnits="userSpaceOnUse" x1="1655" x2="1899"><stop offset="0" stop-color="#e6ff0d"/><stop offset="0.2869" stop-color="#fffd09"/><stop offset="0.9221" stop-color="#ffc800"/><stop offset="1" stop-color="#ffc300"/></linearGradient>
<linearGradient id="i75" gradientUnits="userSpaceOnUse" x1="1655" x2="1899"><stop offset="0" stop-color="#e6ff0d"/><stop offset="0.2787" stop-color="#fffd09"/><stop offset="0.9139" stop-color="#ffc800"/><stop offset="1" stop-color="#ffc200"/></linearGradient>
<linearGradient id="i76" gradientUnits="userSpaceOnUse" x1="1655" x2="1899"><stop offset="0" stop-color="#e7ff0e"/><stop offset="0.2705" stop-color="#fffd0a"/><stop offset="0.9016" stop-color="#ffc901"/><stop offset="1" stop-color="#ffc200"/></linearGradient>
<linearGradient id="i77" gradientUnits="userSpaceOnUse" x1="1655" x2="1899"><stop offset="0" stop-color="#e8ff0e"/><stop offset="0.2664" stop-color="#fffd0a"/><stop offset="0.8975" stop-color="#ffc801"/><stop offset="1" stop-color="#ffc100"/></linearGradient>
<linearGradient id="i78" gradientUnits="userSpaceOnUse" x1="1655" x2="1899"><stop offset="0" stop-color="#e8ff0e"/><stop offset="0.2582" stop-color="#fffd0a"/><stop offset="0.8893" stop-color="#ffc801"/><stop offset="1" stop-color="#ffc100"/></linearGradient>
<linearGradient id="i79" gradientUnits="userSpaceOnUse" x1="1655" x2="1899"><stop offset="0" stop-color="#e9ff0e"/><stop offset="0.25" stop-color="#fffd0b"/><stop offset="0.8811" stop-color="#ffc801"/><stop offset="1" stop-color="#ffc000"/></linearGradient>
<linearGradient id="i80" gradientUnits="userSpaceOnUse" x1="1655" x2="1899"><stop offset="0" stop-color="#eaff0f"/><stop offset="0.2418" stop-color="#fffd0b"/><stop offset="0.873" stop-color="#ffc801"/><stop offset="1" stop-color="#ffc000"/></linearGradient>
<linearGradient id="i81" gradientUnits="userSpaceOnUse" x1="1655" x2="1899"><stop offset="0" stop-color="#eaff0f"/><stop offset="0.2336" stop-color="#fffd0b"/><stop offset="0.8607" stop-color="#ffc902"/><stop offset="1" stop-color="#ffbf00"/></linearGradient>
<linearGradient id="i82" gradientUnits="userSpaceOnUse" x1="1655" x2="1899"><stop offset="0" stop-color="#ebff0f"/><stop offset="0.2295" stop-color="#fffd0c"/><stop offset="0.8566" stop-color="#ffc802"/><stop offset="1" stop-color="#ffbf00"/></linearGradient>
<linearGradient id="i83" gradientUnits="userSpaceOnUse" x1="1655" x2="1899"><stop offset="0" stop-color="#ebff0f"/><stop offset="0.2213" stop-color="#fffd0c"/><stop offset="0.8484" stop-color="#ffc802"/><stop offset="1" stop-color="#ffbe00"/></linearGradient>
<clipPath id="cin"><rect x="1655.1" y="428.4" width="243.4" height="164.8"/></clipPath>
<clipPath id="ciloc"><path d="M493.17,2260.77 L493.05,2260.77 L492.97,2260.74 L492.9,2260.71 L492.8,2260.69 L492.66,2260.71 L492.48,2260.76 L492.29,2260.83 L492.08,2260.89 L491.87,2260.92 L491.65,2260.93 L491.43,2260.89 L491.19,2260.85 L490.94,2260.83 L490.7,2260.84 L490.48,2260.9 L490.26,2260.99 L490.03,2261.09 L489.82,2261.19 L489.6,2261.26 L489.39,2261.32 L489.17,2261.35 L488.91,2261.38 L488.6,2261.39 L488.25,2261.39 L487.86,2261.39 L487.43,2261.37 L486.99,2261.34 L486.54,2261.31 L486.11,2261.3 L485.69,2261.31 L485.27,2261.32 L484.81,2261.32 L484.33,2261.3 L483.82,2261.26 L483.31,2261.2 L482.8,2261.12 L482.26,2261.01 L481.63,2260.85 L480.88,2260.61 L480,2260.31 L479.02,2259.95 L477.98,2259.55 L476.9,2259.1 L475.78,2258.6 L474.61,2258.05 L473.39,2257.44 L472.11,2256.77 L470.74,2256.04 L469.27,2255.25 L467.69,2254.38 L465.97,2253.45 L464.13,2252.44 L462.18,2251.35 L460.14,2250.18 L458.04,2248.93 L455.85,2247.58 L453.56,2246.14 L451.16,2244.61 L448.63,2243.01 L445.95,2241.34 L443.11,2239.6 L440.1,2237.78 L436.89,2235.86 L433.48,2233.83 L429.85,2231.66 L425.98,2229.36 L421.87,2226.92 L417.52,2224.34 L412.94,2221.62 L408.12,2218.77 L403.08,2215.79 L397.82,2212.67 L392.33,2209.38 L386.59,2205.89 L380.59,2202.17 L374.28,2198.19 L367.69,2193.91 L360.84,2189.34 L353.73,2184.45 L346.39,2179.23 L338.82,2173.65 L330.98,2167.66 L322.83,2161.11 L314.28,2153.85 L305.22,2145.68 L295.51,2136.41 L285.1,2125.92 L273.98,2114.14 L262.18,2101.03 L249.8,2086.61 L236.9,2070.84 L223.43,2053.56 L209.34,2034.6 L194.58,2013.79 L179.09,1990.89 L162.87,1965.7 L145.9,1938.09 L128.14,1907.95 L109.53,1875.2 L90.01,1839.74 L69.51,1801.46 L48.07,1760.1 L25.86,1715.42 L3.08,1667.26 L-19.95,1615.54 L-42.89,1560.35 L-65.66,1501.73 L-88.29,1439.63 L-110.86,1374.02 L-133.45,1304.89 L-156,1232.36 L-178.21,1156.82 L-199.82,1078.71 L-220.57,998.54 L-240.21,916.86 L-258.49,834.28 L-275.22,751.23 L-290.24,668 L-303.41,584.95 L-314.65,502.48 L-323.82,421.25 L-330.68,341.99 L-335.02,265.09 L-336.71,190.72 L-335.63,118.83 L-331.8,49.37 L-325.15,-17.29 L-315.52,-80.64 L-302.79,-140.2 L-286.89,-195.49 L-267.92,-246.33 L-246.13,-292.53 L-221.64,-333.65 L-194.64,-369.32 L-165.28,-399.28 L-133.75,-423.59 L-100.41,-442.61 L-65.61,-456.66 L-29.64,-466.05 L7.29,-471.09 L45.03,-472.04 L83.43,-469.39 L122.36,-463.8 L161.7,-455.84 L201.32,-446.05 L241.18,-434.72 L281.09,-422.06 L320.79,-408.37 L360.08,-393.93 L398.78,-379 L436.81,-363.76 L474.3,-348.2 L511.36,-332.27 L548.07,-315.93 L584.51,-299.12 L620.69,-281.89 L656.62,-264.27 L692.35,-246.28 L727.92,-227.9 L763.38,-209.14 L798.74,-190.01 L834.03,-170.53 L869.23,-150.73 L904.34,-130.62 L939.38,-110.25 L974.35,-89.61 L1009.26,-68.72 L1044.13,-47.6 L1078.97,-26.26 L1113.8,-4.72 L1148.63,17.02 L1183.46,38.93 L1218.28,61 L1253.08,83.22 L1287.87,105.56 L1322.68,128.04 L1357.49,150.64 L1392.29,173.33 L1427.08,196.1 L1461.85,218.94 L1496.62,241.84 L1531.35,264.78 L1566.05,287.76 L1600.7,310.76 L1635.32,333.78 L1669.88,356.82 L1704.37,379.85 L1738.77,402.86 L1773.08,425.84 L1807.29,448.79 L1841.37,471.69 L1875.33,494.53 L1909.14,517.29 L1942.79,539.97 L1976.27,562.54 L2009.55,585 L2042.62,607.32 L2075.46,629.5 L2108.04,651.5 L2140.37,673.32 L2172.43,694.95 L2204.21,716.38 L2235.68,737.59 L2266.83,758.58 L2297.61,779.31 L2328.01,799.78 L2358,819.97 L2387.58,839.88 L2416.73,859.51 L2445.43,878.86 L2473.67,897.93 L2501.4,916.67 L2528.54,935.03 L2554.99,952.92 L2580.67,970.27 L2605.5,987.04 L2629.56,1003.27 L2652.94,1019.02 L2675.72,1034.38 L2698,1049.4 L2719.83,1064.11 L2741.15,1078.49 L2761.87,1092.45 L2781.91,1105.95 L2801.19,1118.93 L2819.66,1131.34 L2837.39,1143.24 L2854.41,1154.66 L2870.78,1165.65 L2886.53,1176.23 L2901.67,1186.42 L2916.2,1196.21 L2930.12,1205.61 L2943.46,1214.62 L2956.21,1223.24 L2968.4,1231.47 L2980.03,1239.34 L2991.12,1246.84 L3001.72,1254 L3011.83,1260.83 L3021.5,1267.35 L3030.74,1273.57 L3039.59,1279.51 L3048.05,1285.19 L3056.14,1290.63 L3063.86,1295.83 L3071.24,1300.79 L3078.32,1305.56 L3085.14,1310.16 L3091.73,1314.61 L3098.13,1318.92 L3104.31,1323.09 L3110.26,1327.11 L3115.99,1330.99 L3121.5,1334.7 L3126.78,1338.28 L3131.85,1341.71 L3136.72,1345 L3141.38,1348.15 L3145.84,1351.16 L3150.12,1354.05 L3154.21,1356.82 L3158.12,1359.46 L3161.82,1361.95 L3165.31,1364.3 L3168.57,1366.5 L3171.62,1368.55 L3174.47,1370.47 L3177.16,1372.28 L3179.72,1374 L3182.17,1375.65 L3184.5,1377.24 L3186.73,1378.74 L3188.83,1380.17 L3190.82,1381.51 L3192.69,1382.78 L3194.46,1383.98 L3196.12,1385.1 L3197.66,1386.14 L3199.08,1387.1 L3200.37,1387.98 L3201.54,1388.77 L3202.6,1389.49 L3203.59,1390.16 L3204.53,1390.8 L3205.46,1391.42 L3206.37,1392.04 L3207.26,1392.64 L3208.12,1393.23 L3208.93,1393.78 L3209.7,1394.29 L3210.43,1394.79 L3211.12,1395.26 L3211.8,1395.72 L3212.47,1396.17 L3213.15,1396.63 L3213.83,1397.1 L3214.52,1397.56 L3215.2,1398.02 L3215.86,1398.47 L3216.51,1398.91 L3217.16,1399.35 L3217.79,1399.77 L3218.39,1400.18 L3218.93,1400.55 L3219.4,1400.86 L3219.78,1401.12 L3220.1,1401.33 L3220.36,1401.51 L3220.6,1401.68 L3220.83,1401.83 L3221.05,1401.98 L3221.25,1402.11 L3221.43,1402.23 L3221.58,1402.34 L3221.73,1402.44 L3221.86,1402.53 L3221.98,1402.61 L3222.06,1402.66 L3222.06,1402.66Z"/></clipPath>
<linearGradient id="g38" x1="0" y1="0" x2="0" y2="1"><stop offset="0" stop-color="#ff5c5c"/><stop offset="1" stop-color="#ff2e2e"/></linearGradient>
<linearGradient id="g39" x1="0" y1="0" x2="0" y2="1"><stop offset="0" stop-color="#5cac5c"/><stop offset="1" stop-color="#339933"/></linearGradient>
<linearGradient id="g40" x1="0" y1="0" x2="0" y2="1"><stop offset="0" stop-color="#5858ff"/><stop offset="1" stop-color="#5252ff"/></linearGradient>
<linearGradient id="g41" x1="0" y1="0" x2="0" y2="1"><stop offset="0" stop-color="#3a3a3a"/><stop offset="0.5" stop-color="#333333"/><stop offset="0.52" stop-color="#1c1c1c"/><stop offset="1" stop-color="#0e0e0e"/></linearGradient>
<linearGradient id="g42" x1="0" y1="0" x2="0" y2="1"><stop offset="0" stop-color="#383838"/><stop offset="1" stop-color="#242424"/></linearGradient>
<linearGradient id="g43" x1="0" y1="0" x2="0" y2="1"><stop offset="0" stop-color="#4a4a4a"/><stop offset="0.25" stop-color="#3e3e3e"/><stop offset="1" stop-color="#262626"/></linearGradient>
<linearGradient id="g44" x1="0" y1="0" x2="0" y2="1"><stop offset="0" stop-color="#989898"/><stop offset="1" stop-color="#5a5a5a"/></linearGradient>
<linearGradient id="g45" x1="0" y1="0" x2="0" y2="1"><stop offset="0" stop-color="#a2a2a2"/><stop offset="0.06" stop-color="#949494"/><stop offset="1" stop-color="#5c5c5c"/></linearGradient>
<linearGradient id="g46" x1="0" y1="0" x2="0" y2="1"><stop offset="0" stop-color="#1a1a1a"/><stop offset="0.6" stop-color="#202020"/><stop offset="1" stop-color="#303030"/></linearGradient>
<linearGradient id="g47" x1="0" y1="0" x2="0" y2="1"><stop offset="0" stop-color="#868686"/><stop offset="1" stop-color="#6a6a6a"/></linearGradient>
<linearGradient id="g48" x1="0" y1="0" x2="0" y2="1"><stop offset="0" stop-color="#7e7e7e"/><stop offset="1" stop-color="#707070"/></linearGradient>
<linearGradient id="g49" x1="0" y1="0" x2="0" y2="1"><stop offset="0" stop-color="#b2b2b2"/><stop offset="0.08" stop-color="#a2a2a2"/><stop offset="0.5" stop-color="#8a8a8a"/><stop offset="1" stop-color="#6a6a6a"/></linearGradient>
<linearGradient id="g50" x1="0" y1="0" x2="0" y2="1"><stop offset="0" stop-color="#bcbcbc"/><stop offset="1" stop-color="#8c8c8c"/></linearGradient>
</defs>
<text x="4" y="42.7" font-size="44" fill="#f2f2f2" textLength="383.7" lengthAdjust="spacingAndGlyphs" stroke="#f2f2f2" stroke-width="0.5">Saturation Sweeps</text>
<text x="640.3" y="33.3" font-size="22" fill="#f2f2f2" textLength="69" lengthAdjust="spacingAndGlyphs">Levels:</text>
<rect x="718.4" y="9.9" width="390.4" height="29.7" fill="url(#g1)" stroke="#2a2a2a" stroke-width="1"/>
<line x1="719.4" y1="10.9" x2="1107.8" y2="10.9" stroke="#858585" stroke-width="1"/>
<text x="724.2" y="33.3" font-size="17.8" fill="#f0f0f0" textLength="102.3" lengthAdjust="spacingAndGlyphs">20% Sweeps</text>
<polygon points="1091.9,22.9 1102.6,22.9 1097.25,28.6" fill="#0a0a0a"/>
<text x="138.5" y="103.1" font-size="21.8" fill="#f2f2f2" textLength="124" lengthAdjust="spacingAndGlyphs">dE Formula:</text>
<rect x="271" y="81" width="155.7" height="28.3" fill="url(#g2)" stroke="#2a2a2a" stroke-width="1"/>
<line x1="272" y1="82" x2="425.7" y2="82" stroke="#858585" stroke-width="1"/>
<text x="276.7" y="104.3" font-size="17.8" fill="#f0f0f0" textLength="40.3" lengthAdjust="spacingAndGlyphs">2000</text>
<polygon points="409.3,93.3 420.7,93.3 415,99" fill="#0a0a0a"/>
<rect x="4" y="54.6" width="421" height="1" fill="url(#g3)"/>
<rect x="45.5" y="147" width="359.8" height="444.8" fill="#242424"/>
<text x="204" y="141.3" font-size="16.5" fill="#dcdcdc" text-anchor="middle" textLength="91" lengthAdjust="spacingAndGlyphs">DeltaE 2000</text>
<line x1="93.18" y1="147" x2="93.18" y2="591.8" stroke="#8c8c8c" stroke-width="1.5"/>
<line x1="140.86" y1="147" x2="140.86" y2="591.8" stroke="#8c8c8c" stroke-width="1.5"/>
<line x1="188.54" y1="147" x2="188.54" y2="591.8" stroke="#8c8c8c" stroke-width="1.5"/>
<line x1="236.22" y1="147" x2="236.22" y2="591.8" stroke="#8c8c8c" stroke-width="1.5"/>
<line x1="283.9" y1="147" x2="283.9" y2="591.8" stroke="#8c8c8c" stroke-width="1.5"/>
<line x1="331.58" y1="147" x2="331.58" y2="591.8" stroke="#8c8c8c" stroke-width="1.5"/>
<line x1="379.26" y1="147" x2="379.26" y2="591.8" stroke="#8c8c8c" stroke-width="1.5"/>
<rect x="45.5" y="147" width="359.8" height="444.8" fill="none" stroke="#b0b0b0" stroke-width="1.6"/>
<line x1="45.5" y1="591.8" x2="45.5" y2="598.3" stroke="#d0d0d0" stroke-width="1.6"/>
<text x="45" y="616.5" font-size="15.6" fill="#dcdcdc" text-anchor="middle" textLength="9.11" lengthAdjust="spacingAndGlyphs">0</text>
<line x1="93.18" y1="591.8" x2="93.18" y2="598.3" stroke="#d0d0d0" stroke-width="1.6"/>
<text x="92.68" y="616.5" font-size="15.6" fill="#dcdcdc" text-anchor="middle" textLength="9.11" lengthAdjust="spacingAndGlyphs">2</text>
<line x1="140.86" y1="591.8" x2="140.86" y2="598.3" stroke="#d0d0d0" stroke-width="1.6"/>
<text x="140.36" y="616.5" font-size="15.6" fill="#dcdcdc" text-anchor="middle" textLength="9.11" lengthAdjust="spacingAndGlyphs">4</text>
<line x1="188.54" y1="591.8" x2="188.54" y2="598.3" stroke="#d0d0d0" stroke-width="1.6"/>
<text x="188.04" y="616.5" font-size="15.6" fill="#dcdcdc" text-anchor="middle" textLength="9.11" lengthAdjust="spacingAndGlyphs">6</text>
<line x1="236.22" y1="591.8" x2="236.22" y2="598.3" stroke="#d0d0d0" stroke-width="1.6"/>
<text x="235.72" y="616.5" font-size="15.6" fill="#dcdcdc" text-anchor="middle" textLength="9.11" lengthAdjust="spacingAndGlyphs">8</text>
<line x1="283.9" y1="591.8" x2="283.9" y2="598.3" stroke="#d0d0d0" stroke-width="1.6"/>
<text x="283.4" y="616.5" font-size="15.6" fill="#dcdcdc" text-anchor="middle" textLength="18.22" lengthAdjust="spacingAndGlyphs">10</text>
<line x1="331.58" y1="591.8" x2="331.58" y2="598.3" stroke="#d0d0d0" stroke-width="1.6"/>
<text x="331.08" y="616.5" font-size="15.6" fill="#dcdcdc" text-anchor="middle" textLength="18.22" lengthAdjust="spacingAndGlyphs">12</text>
<line x1="379.26" y1="591.8" x2="379.26" y2="598.3" stroke="#d0d0d0" stroke-width="1.6"/>
<text x="378.76" y="616.5" font-size="15.6" fill="#dcdcdc" text-anchor="middle" textLength="18.22" lengthAdjust="spacingAndGlyphs">14</text>
<line x1="38.5" y1="147" x2="45.5" y2="147" stroke="#d0d0d0" stroke-width="1.6"/>
<line x1="38.5" y1="210.54" x2="45.5" y2="210.54" stroke="#d0d0d0" stroke-width="1.6"/>
<line x1="38.5" y1="274.09" x2="45.5" y2="274.09" stroke="#d0d0d0" stroke-width="1.6"/>
<line x1="38.5" y1="337.63" x2="45.5" y2="337.63" stroke="#d0d0d0" stroke-width="1.6"/>
<line x1="38.5" y1="401.17" x2="45.5" y2="401.17" stroke="#d0d0d0" stroke-width="1.6"/>
<line x1="38.5" y1="464.71" x2="45.5" y2="464.71" stroke="#d0d0d0" stroke-width="1.6"/>
<line x1="38.5" y1="528.26" x2="45.5" y2="528.26" stroke="#d0d0d0" stroke-width="1.6"/>
<line x1="38.5" y1="591.8" x2="45.5" y2="591.8" stroke="#d0d0d0" stroke-width="1.6"/>
<text x="44" y="185.97" font-size="15.6" fill="#dcdcdc" text-anchor="end" textLength="41.89" lengthAdjust="spacingAndGlyphs">100%</text>
<text x="44" y="249.51" font-size="15.6" fill="#dcdcdc" text-anchor="end" textLength="32.78" lengthAdjust="spacingAndGlyphs">80%</text>
<text x="44" y="313.06" font-size="15.6" fill="#dcdcdc" text-anchor="end" textLength="32.78" lengthAdjust="spacingAndGlyphs">60%</text>
<text x="44" y="376.6" font-size="15.6" fill="#dcdcdc" text-anchor="end" textLength="32.78" lengthAdjust="spacingAndGlyphs">40%</text>
<text x="44" y="440.14" font-size="15.6" fill="#dcdcdc" text-anchor="end" textLength="32.78" lengthAdjust="spacingAndGlyphs">20%</text>
<text x="44" y="503.69" font-size="15.6" fill="#dcdcdc" text-anchor="end" textLength="27.33" lengthAdjust="spacingAndGlyphs">100</text>
<text x="44" y="567.23" font-size="15.6" fill="#dcdcdc" text-anchor="end" textLength="9.11" lengthAdjust="spacingAndGlyphs">0</text>
<rect x="46" y="153.2" width="80.7" height="6.9" fill="url(#g4)" stroke="#000" stroke-width="1.6"/>
<rect x="46" y="161.05" width="87.6" height="6.9" fill="url(#g5)" stroke="#000" stroke-width="1.6"/>
<rect x="46" y="168.9" width="57.1" height="6.9" fill="url(#g6)" stroke="#000" stroke-width="1.6"/>
<rect x="46" y="176.75" width="123.3" height="6.9" fill="url(#g7)" stroke="#000" stroke-width="1.6"/>
<rect x="46" y="184.6" width="54.2" height="6.9" fill="url(#g8)" stroke="#000" stroke-width="1.6"/>
<rect x="46" y="192.45" width="62" height="6.9" fill="url(#g9)" stroke="#000" stroke-width="1.6"/>
<rect x="46" y="217.2" width="107.5" height="6.9" fill="url(#g10)" stroke="#000" stroke-width="1.6"/>
<rect x="46" y="225.05" width="62" height="6.9" fill="url(#g11)" stroke="#000" stroke-width="1.6"/>
<rect x="46" y="232.9" width="99.6" height="6.9" fill="url(#g12)" stroke="#000" stroke-width="1.6"/>
<rect x="46" y="240.75" width="68.3" height="6.9" fill="url(#g13)" stroke="#000" stroke-width="1.6"/>
<rect x="46" y="248.6" width="79.5" height="6.9" fill="url(#g14)" stroke="#000" stroke-width="1.6"/>
<rect x="46" y="256.45" width="50.3" height="6.9" fill="url(#g15)" stroke="#000" stroke-width="1.6"/>
<rect x="46" y="280.4" width="106.5" height="6.9" fill="url(#g16)" stroke="#000" stroke-width="1.6"/>
<rect x="46" y="288.25" width="54.2" height="6.9" fill="url(#g17)" stroke="#000" stroke-width="1.6"/>
<rect x="46" y="296.1" width="95.3" height="6.9" fill="url(#g18)" stroke="#000" stroke-width="1.6"/>
<rect x="46" y="303.95" width="60.1" height="6.9" fill="url(#g19)" stroke="#000" stroke-width="1.6"/>
<rect x="46" y="311.8" width="68.7" height="6.9" fill="url(#g20)" stroke="#000" stroke-width="1.6"/>
<rect x="46" y="319.65" width="49.1" height="6.9" fill="url(#g21)" stroke="#000" stroke-width="1.6"/>
<rect x="46" y="344.6" width="91.5" height="6.9" fill="url(#g22)" stroke="#000" stroke-width="1.6"/>
<rect x="46" y="352.45" width="46.3" height="6.9" fill="url(#g23)" stroke="#000" stroke-width="1.6"/>
<rect x="46" y="360.3" width="74.3" height="6.9" fill="url(#g24)" stroke="#000" stroke-width="1.6"/>
<rect x="46" y="368.15" width="60.6" height="6.9" fill="url(#g25)" stroke="#000" stroke-width="1.6"/>
<rect x="46" y="376" width="54.6" height="6.9" fill="url(#g26)" stroke="#000" stroke-width="1.6"/>
<rect x="46" y="383.85" width="44.6" height="6.9" fill="url(#g27)" stroke="#000" stroke-width="1.6"/>
<rect x="46" y="407.5" width="66.6" height="6.9" fill="url(#g28)" stroke="#000" stroke-width="1.6"/>
<rect x="46" y="415.35" width="39.4" height="6.9" fill="url(#g29)" stroke="#000" stroke-width="1.6"/>
<rect x="46" y="423.2" width="39.4" height="6.9" fill="url(#g30)" stroke="#000" stroke-width="1.6"/>
<rect x="46" y="431.05" width="62.3" height="6.9" fill="url(#g31)" stroke="#000" stroke-width="1.6"/>
<rect x="46" y="438.9" width="44.3" height="6.9" fill="url(#g32)" stroke="#000" stroke-width="1.6"/>
<rect x="46" y="446.75" width="42.5" height="6.9" fill="url(#g33)" stroke="#000" stroke-width="1.6"/>
<rect x="46" y="518.8" width="32.4" height="6.9" fill="url(#g34)" stroke="#000" stroke-width="1.6"/>
<rect x="465.6" y="85.4" width="166.3" height="324.6" fill="#242424"/>
<line x1="465.6" y1="139.3" x2="631.9" y2="139.3" stroke="#8c8c8c" stroke-width="1.5"/>
<line x1="465.6" y1="194.7" x2="631.9" y2="194.7" stroke="#8c8c8c" stroke-width="1.5"/>
<line x1="465.6" y1="249.2" x2="631.9" y2="249.2" stroke="#8c8c8c" stroke-width="1.5"/>
<line x1="465.6" y1="302.2" x2="631.9" y2="302.2" stroke="#8c8c8c" stroke-width="1.5"/>
<line x1="465.6" y1="357.5" x2="631.9" y2="357.5" stroke="#8c8c8c" stroke-width="1.5"/>
<rect x="465.6" y="85.4" width="166.3" height="324.6" fill="none" stroke="#b0b0b0" stroke-width="1.6"/>
<line x1="459.1" y1="85.4" x2="465.6" y2="85.4" stroke="#d8d8d8" stroke-width="1.6"/>
<text x="458" y="91.6" font-size="16" fill="#dcdcdc" text-anchor="end" textLength="18.69" lengthAdjust="spacingAndGlyphs">15</text>
<line x1="459.1" y1="139.3" x2="465.6" y2="139.3" stroke="#d8d8d8" stroke-width="1.6"/>
<text x="458" y="145.5" font-size="16" fill="#dcdcdc" text-anchor="end" textLength="18.69" lengthAdjust="spacingAndGlyphs">10</text>
<line x1="459.1" y1="194.7" x2="465.6" y2="194.7" stroke="#d8d8d8" stroke-width="1.6"/>
<text x="458" y="200.9" font-size="16" fill="#dcdcdc" text-anchor="end" textLength="9.34" lengthAdjust="spacingAndGlyphs">5</text>
<line x1="459.1" y1="249.2" x2="465.6" y2="249.2" stroke="#d8d8d8" stroke-width="1.6"/>
<text x="458" y="255.4" font-size="16" fill="#dcdcdc" text-anchor="end" textLength="9.34" lengthAdjust="spacingAndGlyphs">0</text>
<line x1="459.1" y1="302.2" x2="465.6" y2="302.2" stroke="#d8d8d8" stroke-width="1.6"/>
<text x="458" y="308.4" font-size="16" fill="#dcdcdc" text-anchor="end" textLength="14.94" lengthAdjust="spacingAndGlyphs">-5</text>
<line x1="459.1" y1="357.5" x2="465.6" y2="357.5" stroke="#d8d8d8" stroke-width="1.6"/>
<text x="458" y="363.7" font-size="16" fill="#dcdcdc" text-anchor="end" textLength="24.28" lengthAdjust="spacingAndGlyphs">-10</text>
<line x1="459.1" y1="410" x2="465.6" y2="410" stroke="#d8d8d8" stroke-width="1.6"/>
<text x="458" y="419.2" font-size="16" fill="#dcdcdc" text-anchor="end" textLength="24.28" lengthAdjust="spacingAndGlyphs">-15</text>
<line x1="465.6" y1="410" x2="465.6" y2="417.5" stroke="#d8d8d8" stroke-width="1.6"/>
<line x1="631.9" y1="410" x2="631.9" y2="417.5" stroke="#d8d8d8" stroke-width="1.6"/>
<text x="549" y="429.3" font-size="15.6" fill="#dcdcdc" text-anchor="middle" textLength="41.89" lengthAdjust="spacingAndGlyphs">100%</text>
<text x="533.7" y="78.6" font-size="16.4" fill="#dcdcdc" text-anchor="middle" textLength="51.6" lengthAdjust="spacingAndGlyphs">Delta L</text>
<rect x="482.9" y="218.39" width="132.1" height="30.01" fill="url(#g35)" stroke="#000" stroke-width="1.7"/>
<rect x="692.9" y="85.4" width="166.3" height="324.6" fill="#242424"/>
<line x1="692.9" y1="139.3" x2="859.2" y2="139.3" stroke="#8c8c8c" stroke-width="1.5"/>
<line x1="692.9" y1="194.7" x2="859.2" y2="194.7" stroke="#8c8c8c" stroke-width="1.5"/>
<line x1="692.9" y1="249.2" x2="859.2" y2="249.2" stroke="#8c8c8c" stroke-width="1.5"/>
<line x1="692.9" y1="302.2" x2="859.2" y2="302.2" stroke="#8c8c8c" stroke-width="1.5"/>
<line x1="692.9" y1="357.5" x2="859.2" y2="357.5" stroke="#8c8c8c" stroke-width="1.5"/>
<rect x="692.9" y="85.4" width="166.3" height="324.6" fill="none" stroke="#b0b0b0" stroke-width="1.6"/>
<line x1="686.4" y1="85.4" x2="692.9" y2="85.4" stroke="#d8d8d8" stroke-width="1.6"/>
<text x="685.3" y="91.6" font-size="16" fill="#dcdcdc" text-anchor="end" textLength="18.69" lengthAdjust="spacingAndGlyphs">15</text>
<line x1="686.4" y1="139.3" x2="692.9" y2="139.3" stroke="#d8d8d8" stroke-width="1.6"/>
<text x="685.3" y="145.5" font-size="16" fill="#dcdcdc" text-anchor="end" textLength="18.69" lengthAdjust="spacingAndGlyphs">10</text>
<line x1="686.4" y1="194.7" x2="692.9" y2="194.7" stroke="#d8d8d8" stroke-width="1.6"/>
<text x="685.3" y="200.9" font-size="16" fill="#dcdcdc" text-anchor="end" textLength="9.34" lengthAdjust="spacingAndGlyphs">5</text>
<line x1="686.4" y1="249.2" x2="692.9" y2="249.2" stroke="#d8d8d8" stroke-width="1.6"/>
<text x="685.3" y="255.4" font-size="16" fill="#dcdcdc" text-anchor="end" textLength="9.34" lengthAdjust="spacingAndGlyphs">0</text>
<line x1="686.4" y1="302.2" x2="692.9" y2="302.2" stroke="#d8d8d8" stroke-width="1.6"/>
<text x="685.3" y="308.4" font-size="16" fill="#dcdcdc" text-anchor="end" textLength="14.94" lengthAdjust="spacingAndGlyphs">-5</text>
<line x1="686.4" y1="357.5" x2="692.9" y2="357.5" stroke="#d8d8d8" stroke-width="1.6"/>
<text x="685.3" y="363.7" font-size="16" fill="#dcdcdc" text-anchor="end" textLength="24.28" lengthAdjust="spacingAndGlyphs">-10</text>
<line x1="686.4" y1="410" x2="692.9" y2="410" stroke="#d8d8d8" stroke-width="1.6"/>
<text x="685.3" y="419.2" font-size="16" fill="#dcdcdc" text-anchor="end" textLength="24.28" lengthAdjust="spacingAndGlyphs">-15</text>
<line x1="692.9" y1="410" x2="692.9" y2="417.5" stroke="#d8d8d8" stroke-width="1.6"/>
<line x1="859.2" y1="410" x2="859.2" y2="417.5" stroke="#d8d8d8" stroke-width="1.6"/>
<text x="776.3" y="429.3" font-size="15.6" fill="#dcdcdc" text-anchor="middle" textLength="41.89" lengthAdjust="spacingAndGlyphs">100%</text>
<text x="761" y="78.6" font-size="16.4" fill="#dcdcdc" text-anchor="middle" textLength="54.5" lengthAdjust="spacingAndGlyphs">Delta C</text>
<rect x="710.2" y="222.1" width="132.1" height="26.3" fill="url(#g36)" stroke="#000" stroke-width="1.7"/>
<rect x="920.6" y="85.4" width="166.3" height="324.6" fill="#242424"/>
<line x1="920.6" y1="139.3" x2="1086.9" y2="139.3" stroke="#8c8c8c" stroke-width="1.5"/>
<line x1="920.6" y1="194.7" x2="1086.9" y2="194.7" stroke="#8c8c8c" stroke-width="1.5"/>
<line x1="920.6" y1="249.2" x2="1086.9" y2="249.2" stroke="#8c8c8c" stroke-width="1.5"/>
<line x1="920.6" y1="302.2" x2="1086.9" y2="302.2" stroke="#8c8c8c" stroke-width="1.5"/>
<line x1="920.6" y1="357.5" x2="1086.9" y2="357.5" stroke="#8c8c8c" stroke-width="1.5"/>
<rect x="920.6" y="85.4" width="166.3" height="324.6" fill="none" stroke="#b0b0b0" stroke-width="1.6"/>
<line x1="914.1" y1="85.4" x2="920.6" y2="85.4" stroke="#d8d8d8" stroke-width="1.6"/>
<text x="913" y="91.6" font-size="16" fill="#dcdcdc" text-anchor="end" textLength="18.69" lengthAdjust="spacingAndGlyphs">15</text>
<line x1="914.1" y1="139.3" x2="920.6" y2="139.3" stroke="#d8d8d8" stroke-width="1.6"/>
<text x="913" y="145.5" font-size="16" fill="#dcdcdc" text-anchor="end" textLength="18.69" lengthAdjust="spacingAndGlyphs">10</text>
<line x1="914.1" y1="194.7" x2="920.6" y2="194.7" stroke="#d8d8d8" stroke-width="1.6"/>
<text x="913" y="200.9" font-size="16" fill="#dcdcdc" text-anchor="end" textLength="9.34" lengthAdjust="spacingAndGlyphs">5</text>
<line x1="914.1" y1="249.2" x2="920.6" y2="249.2" stroke="#d8d8d8" stroke-width="1.6"/>
<text x="913" y="255.4" font-size="16" fill="#dcdcdc" text-anchor="end" textLength="9.34" lengthAdjust="spacingAndGlyphs">0</text>
<line x1="914.1" y1="302.2" x2="920.6" y2="302.2" stroke="#d8d8d8" stroke-width="1.6"/>
<text x="913" y="308.4" font-size="16" fill="#dcdcdc" text-anchor="end" textLength="14.94" lengthAdjust="spacingAndGlyphs">-5</text>
<line x1="914.1" y1="357.5" x2="920.6" y2="357.5" stroke="#d8d8d8" stroke-width="1.6"/>
<text x="913" y="363.7" font-size="16" fill="#dcdcdc" text-anchor="end" textLength="24.28" lengthAdjust="spacingAndGlyphs">-10</text>
<line x1="914.1" y1="410" x2="920.6" y2="410" stroke="#d8d8d8" stroke-width="1.6"/>
<text x="913" y="419.2" font-size="16" fill="#dcdcdc" text-anchor="end" textLength="24.28" lengthAdjust="spacingAndGlyphs">-15</text>
<line x1="920.6" y1="410" x2="920.6" y2="417.5" stroke="#d8d8d8" stroke-width="1.6"/>
<line x1="1086.9" y1="410" x2="1086.9" y2="417.5" stroke="#d8d8d8" stroke-width="1.6"/>
<text x="1004" y="429.3" font-size="15.6" fill="#dcdcdc" text-anchor="middle" textLength="41.89" lengthAdjust="spacingAndGlyphs">100%</text>
<text x="988.7" y="78.6" font-size="16.4" fill="#dcdcdc" text-anchor="middle" textLength="56" lengthAdjust="spacingAndGlyphs">Delta H</text>
<rect x="937.9" y="248.2" width="132.1" height="34.94" fill="url(#g37)" stroke="#000" stroke-width="1.7"/>
<rect x="427.3" y="440.2" width="682.8" height="188.5" fill="#000"/>
<rect x="451" y="448.2" width="114.8" height="153.5" fill="#c5c19b"/>
<rect x="451" y="525.5" width="114.8" height="76.2" fill="#babb92"/>
<rect x="451.5" y="448.7" width="113.8" height="152.5" fill="none" stroke="#f2f2e8" stroke-width="1.2" stroke-opacity="0.95"/>
<text x="508.4" y="618.8" font-size="13.2" fill="#f4f4f4" text-anchor="middle" font-weight="bold">20%</text>
<rect x="584.4" y="448.2" width="114.8" height="153.5" fill="#c5c17e"/>
<rect x="584.4" y="525.5" width="114.8" height="76.2" fill="#bbbc77"/>
<rect x="584.9" y="448.7" width="113.8" height="152.5" fill="none" stroke="#f2f2e8" stroke-width="1.2" stroke-opacity="0.95"/>
<text x="641.8" y="618.8" font-size="13.2" fill="#f4f4f4" text-anchor="middle" font-weight="bold">40%</text>
<rect x="717.9" y="448.2" width="114.8" height="153.5" fill="#c6c05f"/>
<rect x="717.9" y="525.5" width="114.8" height="76.2" fill="#bbbc53"/>
<rect x="718.4" y="448.7" width="113.8" height="152.5" fill="none" stroke="#f2f2e8" stroke-width="1.2" stroke-opacity="0.95"/>
<text x="775.3" y="618.8" font-size="13.2" fill="#f4f4f4" text-anchor="middle" font-weight="bold">60%</text>
<rect x="851.2" y="448.2" width="114.8" height="153.5" fill="#c8bd2e"/>
<rect x="851.2" y="525.5" width="114.8" height="76.2" fill="#bcba1c"/>
<rect x="851.7" y="448.7" width="113.8" height="152.5" fill="none" stroke="#f2f2e8" stroke-width="1.2" stroke-opacity="0.95"/>
<text x="908.6" y="618.8" font-size="13.2" fill="#f4f4f4" text-anchor="middle" font-weight="bold">80%</text>
<rect x="984.7" y="448.2" width="114.8" height="153.5" fill="#cec800"/>
<rect x="984.7" y="525.5" width="114.8" height="76.2" fill="#c4c226"/>
<rect x="985.2" y="448.7" width="113.8" height="152.5" fill="none" stroke="#f2f2e8" stroke-width="1.2" stroke-opacity="0.95"/>
<text x="1042.1" y="618.8" font-size="13.2" fill="#f4f4f4" text-anchor="middle" font-weight="bold">100%</text>
<text transform="translate(442.5,503) rotate(-90)" font-size="13" font-weight="bold" fill="#f4f4f4">Actual</text>
<text transform="translate(442.5,588) rotate(-90)" font-size="13" font-weight="bold" fill="#f4f4f4">Target</text>
<rect x="1122" y="5" width="792" height="636.5" fill="#323232" stroke="#b4b100" stroke-width="8"/>
<rect x="1122" y="5" width="792" height="636.5" fill="none" stroke="#c6c300" stroke-width="5.2"/>
<text x="1518" y="28.6" font-size="16.4" fill="#dcdcdc" text-anchor="middle" textLength="97.8" lengthAdjust="spacingAndGlyphs">CIE 1976 u'v'</text>
<rect x="1169.4" y="35.4" width="737" height="567.7" fill="#242424"/>
<g clip-path="url(#cplot)"><g clip-path="url(#cloc)">
<rect x="1209" y="47" width="54" height="2.6" fill="url(#s1)"/>
<rect x="1196" y="49" width="96" height="2.6" fill="url(#s2)"/>
<rect x="1190" y="51" width="123" height="2.6" fill="url(#s3)"/>
<rect x="1186" y="53" width="147" height="2.6" fill="url(#s4)"/>
<rect x="1183" y="55" width="168" height="2.6" fill="url(#s5)"/>
<rect x="1181" y="57" width="189" height="2.6" fill="url(#s6)"/>
<rect x="1179" y="59" width="208" height="2.6" fill="url(#s7)"/>
<rect x="1177" y="61" width="228" height="2.6" fill="url(#s8)"/>
<rect x="1176" y="63" width="247" height="2.6" fill="url(#s9)"/>
<rect x="1175" y="65" width="265" height="2.6" fill="url(#s10)"/>
<rect x="1174" y="67" width="283" height="2.6" fill="url(#s11)"/>
<rect x="1173" y="69" width="302" height="2.6" fill="url(#s12)"/>
<rect x="1172" y="71" width="320" height="2.6" fill="url(#s13)"/>
<rect x="1171" y="73" width="338" height="2.6" fill="url(#s14)"/>
<rect x="1171" y="75" width="356" height="2.6" fill="url(#s15)"/>
<rect x="1170" y="77" width="374" height="2.6" fill="url(#s16)"/>
<rect x="1170" y="79" width="392" height="2.6" fill="url(#s17)"/>
<rect x="1170" y="81" width="409" height="2.6" fill="url(#s18)"/>
<rect x="1169" y="83" width="427" height="2.6" fill="url(#s19)"/>
<rect x="1169" y="85" width="445" height="2.6" fill="url(#s20)"/>
<rect x="1169" y="87" width="462" height="2.6" fill="url(#s21)"/>
<rect x="1169" y="89" width="479" height="2.6" fill="url(#s22)"/>
<rect x="1169" y="91" width="497" height="2.6" fill="url(#s23)"/>
<rect x="1169" y="93" width="514" height="2.6" fill="url(#s24)"/>
<rect x="1169" y="95" width="531" height="2.6" fill="url(#s25)"/>
<rect x="1169" y="97" width="549" height="2.6" fill="url(#s26)"/>
<rect x="1169" y="99" width="566" height="2.6" fill="url(#s27)"/>
<rect x="1169" y="101" width="584" height="2.6" fill="url(#s28)"/>
<rect x="1170" y="103" width="600" height="2.6" fill="url(#s29)"/>
<rect x="1170" y="105" width="617" height="2.6" fill="url(#s30)"/>
<rect x="1170" y="107" width="635" height="2.6" fill="url(#s31)"/>
<rect x="1170" y="109" width="652" height="2.6" fill="url(#s32)"/>
<rect x="1171" y="111" width="668" height="2.6" fill="url(#s33)"/>
<rect x="1171" y="113" width="686" height="2.6" fill="url(#s34)"/>
<rect x="1171" y="115" width="703" height="2.6" fill="url(#s35)"/>
<rect x="1171" y="117" width="720" height="2.6" fill="url(#s36)"/>
<rect x="1172" y="119" width="735" height="2.6" fill="url(#s37)"/>
<rect x="1172" y="121" width="735" height="2.6" fill="url(#s38)"/>
<rect x="1173" y="123" width="734" height="2.6" fill="url(#s39)"/>
<rect x="1173" y="125" width="734" height="2.6" fill="url(#s40)"/>
<rect x="1173" y="127" width="734" height="2.6" fill="url(#s41)"/>
<rect x="1174" y="129" width="733" height="2.6" fill="url(#s42)"/>
<rect x="1174" y="131" width="733" height="2.6" fill="url(#s43)"/>
<rect x="1175" y="133" width="732" height="2.6" fill="url(#s44)"/>
<rect x="1175" y="135" width="732" height="2.6" fill="url(#s45)"/>
<rect x="1176" y="137" width="731" height="2.6" fill="url(#s46)"/>
<rect x="1176" y="139" width="731" height="2.6" fill="url(#s47)"/>
<rect x="1177" y="141" width="730" height="2.6" fill="url(#s48)"/>
<rect x="1177" y="143" width="730" height="2.6" fill="url(#s49)"/>
<rect x="1178" y="145" width="729" height="2.6" fill="url(#s50)"/>
<rect x="1178" y="147" width="729" height="2.6" fill="url(#s51)"/>
<rect x="1179" y="149" width="728" height="2.6" fill="url(#s52)"/>
<rect x="1180" y="151" width="727" height="2.6" fill="url(#s53)"/>
<rect x="1180" y="153" width="727" height="2.6" fill="url(#s54)"/>
<rect x="1181" y="155" width="725" height="2.6" fill="url(#s55)"/>
<rect x="1181" y="157" width="723" height="2.6" fill="url(#s56)"/>
<rect x="1182" y="159" width="720" height="2.6" fill="url(#s57)"/>
<rect x="1183" y="161" width="717" height="2.6" fill="url(#s58)"/>
<rect x="1183" y="163" width="715" height="2.6" fill="url(#s59)"/>
<rect x="1184" y="165" width="712" height="2.6" fill="url(#s60)"/>
<rect x="1185" y="167" width="709" height="2.6" fill="url(#s61)"/>
<rect x="1185" y="169" width="707" height="2.6" fill="url(#s62)"/>
<rect x="1186" y="171" width="704" height="2.6" fill="url(#s63)"/>
<rect x="1187" y="173" width="701" height="2.6" fill="url(#s64)"/>
<rect x="1187" y="175" width="699" height="2.6" fill="url(#s65)"/>
<rect x="1188" y="177" width="696" height="2.6" fill="url(#s66)"/>
<rect x="1189" y="179" width="693" height="2.6" fill="url(#s67)"/>
<rect x="1189" y="181" width="691" height="2.6" fill="url(#s68)"/>
<rect x="1190" y="183" width="688" height="2.6" fill="url(#s69)"/>
<rect x="1191" y="185" width="685" height="2.6" fill="url(#s70)"/>
<rect x="1192" y="187" width="683" height="2.6" fill="url(#s71)"/>
<rect x="1192" y="189" width="681" height="2.6" fill="url(#s72)"/>
<rect x="1193" y="191" width="678" height="2.6" fill="url(#s73)"/>
<rect x="1194" y="193" width="675" height="2.6" fill="url(#s74)"/>
<rect x="1195" y="195" width="672" height="2.6" fill="url(#s75)"/>
<rect x="1195" y="197" width="670" height="2.6" fill="url(#s76)"/>
<rect x="1196" y="199" width="667" height="2.6" fill="url(#s77)"/>
<rect x="1197" y="201" width="664" height="2.6" fill="url(#s78)"/>
<rect x="1198" y="203" width="661" height="2.6" fill="url(#s79)"/>
<rect x="1198" y="205" width="659" height="2.6" fill="url(#s80)"/>
<rect x="1199" y="207" width="656" height="2.6" fill="url(#s81)"/>
<rect x="1200" y="209" width="653" height="2.6" fill="url(#s82)"/>
<rect x="1201" y="211" width="650" height="2.6" fill="url(#s83)"/>
<rect x="1202" y="213" width="647" height="2.6" fill="url(#s84)"/>
<rect x="1202" y="215" width="645" height="2.6" fill="url(#s85)"/>
<rect x="1203" y="217" width="642" height="2.6" fill="url(#s86)"/>
<rect x="1204" y="219" width="639" height="2.6" fill="url(#s87)"/>
<rect x="1205" y="221" width="637" height="2.6" fill="url(#s88)"/>
<rect x="1206" y="223" width="634" height="2.6" fill="url(#s89)"/>
<rect x="1207" y="225" width="631" height="2.6" fill="url(#s90)"/>
<rect x="1207" y="227" width="629" height="2.6" fill="url(#s91)"/>
<rect x="1208" y="229" width="626" height="2.6" fill="url(#s92)"/>
<rect x="1209" y="231" width="623" height="2.6" fill="url(#s93)"/>
<rect x="1210" y="233" width="620" height="2.6" fill="url(#s94)"/>
<rect x="1211" y="235" width="617" height="2.6" fill="url(#s95)"/>
<rect x="1212" y="237" width="614" height="2.6" fill="url(#s96)"/>
<rect x="1213" y="239" width="611" height="2.6" fill="url(#s97)"/>
<rect x="1213" y="241" width="609" height="2.6" fill="url(#s98)"/>
<rect x="1214" y="243" width="606" height="2.6" fill="url(#s99)"/>
<rect x="1215" y="245" width="603" height="2.6" fill="url(#s100)"/>
<rect x="1216" y="247" width="600" height="2.6" fill="url(#s101)"/>
<rect x="1217" y="249" width="597" height="2.6" fill="url(#s102)"/>
<rect x="1218" y="251" width="594" height="2.6" fill="url(#s103)"/>
<rect x="1219" y="253" width="592" height="2.6" fill="url(#s104)"/>
<rect x="1220" y="255" width="589" height="2.6" fill="url(#s105)"/>
<rect x="1221" y="257" width="586" height="2.6" fill="url(#s106)"/>
<rect x="1222" y="259" width="583" height="2.6" fill="url(#s107)"/>
<rect x="1223" y="261" width="580" height="2.6" fill="url(#s108)"/>
<rect x="1224" y="263" width="577" height="2.6" fill="url(#s109)"/>
<rect x="1224" y="265" width="575" height="2.6" fill="url(#s110)"/>
<rect x="1225" y="267" width="572" height="2.6" fill="url(#s111)"/>
<rect x="1226" y="269" width="569" height="2.6" fill="url(#s112)"/>
<rect x="1227" y="271" width="566" height="2.6" fill="url(#s113)"/>
<rect x="1228" y="273" width="563" height="2.6" fill="url(#s114)"/>
<rect x="1229" y="275" width="560" height="2.6" fill="url(#s115)"/>
<rect x="1230" y="277" width="557" height="2.6" fill="url(#s116)"/>
<rect x="1231" y="279" width="554" height="2.6" fill="url(#s117)"/>
<rect x="1232" y="281" width="551" height="2.6" fill="url(#s118)"/>
<rect x="1233" y="283" width="548" height="2.6" fill="url(#s119)"/>
<rect x="1234" y="285" width="546" height="2.6" fill="url(#s120)"/>
<rect x="1235" y="287" width="543" height="2.6" fill="url(#s121)"/>
<rect x="1236" y="289" width="540" height="2.6" fill="url(#s122)"/>
<rect x="1238" y="291" width="536" height="2.6" fill="url(#s123)"/>
<rect x="1239" y="293" width="533" height="2.6" fill="url(#s124)"/>
<rect x="1240" y="295" width="530" height="2.6" fill="url(#s125)"/>
<rect x="1241" y="297" width="527" height="2.6" fill="url(#s126)"/>
<rect x="1242" y="299" width="524" height="2.6" fill="url(#s127)"/>
<rect x="1243" y="301" width="521" height="2.6" fill="url(#s128)"/>
<rect x="1244" y="303" width="518" height="2.6" fill="url(#s129)"/>
<rect x="1245" y="305" width="515" height="2.6" fill="url(#s130)"/>
<rect x="1246" y="307" width="512" height="2.6" fill="url(#s131)"/>
<rect x="1247" y="309" width="509" height="2.6" fill="url(#s132)"/>
<rect x="1248" y="311" width="506" height="2.6" fill="url(#s133)"/>
<rect x="1249" y="313" width="503" height="2.6" fill="url(#s134)"/>
<rect x="1251" y="315" width="499" height="2.6" fill="url(#s135)"/>
<rect x="1252" y="317" width="496" height="2.6" fill="url(#s136)"/>
<rect x="1253" y="319" width="494" height="2.6" fill="url(#s137)"/>
<rect x="1254" y="321" width="491" height="2.6" fill="url(#s138)"/>
<rect x="1255" y="323" width="488" height="2.6" fill="url(#s139)"/>
<rect x="1256" y="325" width="485" height="2.6" fill="url(#s140)"/>
<rect x="1257" y="327" width="482" height="2.6" fill="url(#s141)"/>
<rect x="1258" y="329" width="479" height="2.6" fill="url(#s142)"/>
<rect x="1260" y="331" width="475" height="2.6" fill="url(#s143)"/>
<rect x="1261" y="333" width="472" height="2.6" fill="url(#s144)"/>
<rect x="1262" y="335" width="469" height="2.6" fill="url(#s145)"/>
<rect x="1263" y="337" width="466" height="2.6" fill="url(#s146)"/>
<rect x="1264" y="339" width="463" height="2.6" fill="url(#s147)"/>
<rect x="1265" y="341" width="460" height="2.6" fill="url(#s148)"/>
<rect x="1267" y="343" width="456" height="2.6" fill="url(#s149)"/>
<rect x="1268" y="345" width="453" height="2.6" fill="url(#s150)"/>
<rect x="1269" y="347" width="450" height="2.6" fill="url(#s151)"/>
<rect x="1270" y="349" width="447" height="2.6" fill="url(#s152)"/>
<rect x="1271" y="351" width="445" height="2.6" fill="url(#s153)"/>
<rect x="1273" y="353" width="441" height="2.6" fill="url(#s154)"/>
<rect x="1274" y="355" width="438" height="2.6" fill="url(#s155)"/>
<rect x="1275" y="357" width="435" height="2.6" fill="url(#s156)"/>
<rect x="1276" y="359" width="432" height="2.6" fill="url(#s157)"/>
<rect x="1277" y="361" width="429" height="2.6" fill="url(#s158)"/>
<rect x="1279" y="363" width="425" height="2.6" fill="url(#s159)"/>
<rect x="1280" y="365" width="422" height="2.6" fill="url(#s160)"/>
<rect x="1281" y="367" width="419" height="2.6" fill="url(#s161)"/>
<rect x="1282" y="369" width="416" height="2.6" fill="url(#s162)"/>
<rect x="1283" y="371" width="413" height="2.6" fill="url(#s163)"/>
<rect x="1285" y="373" width="409" height="2.6" fill="url(#s164)"/>
<rect x="1286" y="375" width="406" height="2.6" fill="url(#s165)"/>
<rect x="1287" y="377" width="403" height="2.6" fill="url(#s166)"/>
<rect x="1288" y="379" width="400" height="2.6" fill="url(#s167)"/>
<rect x="1290" y="381" width="396" height="2.6" fill="url(#s168)"/>
<rect x="1291" y="383" width="394" height="2.6" fill="url(#s169)"/>
<rect x="1292" y="385" width="391" height="2.6" fill="url(#s170)"/>
<rect x="1293" y="387" width="388" height="2.6" fill="url(#s171)"/>
<rect x="1295" y="389" width="384" height="2.6" fill="url(#s172)"/>
<rect x="1296" y="391" width="381" height="2.6" fill="url(#s173)"/>
<rect x="1297" y="393" width="378" height="2.6" fill="url(#s174)"/>
<rect x="1298" y="395" width="375" height="2.6" fill="url(#s175)"/>
<rect x="1300" y="397" width="371" height="2.6" fill="url(#s176)"/>
<rect x="1301" y="399" width="368" height="2.6" fill="url(#s177)"/>
<rect x="1302" y="401" width="365" height="2.6" fill="url(#s178)"/>
<rect x="1304" y="403" width="361" height="2.6" fill="url(#s179)"/>
<rect x="1305" y="405" width="358" height="2.6" fill="url(#s180)"/>
<rect x="1306" y="407" width="355" height="2.6" fill="url(#s181)"/>
<rect x="1308" y="409" width="351" height="2.6" fill="url(#s182)"/>
<rect x="1309" y="411" width="348" height="2.6" fill="url(#s183)"/>
<rect x="1310" y="413" width="345" height="2.6" fill="url(#s184)"/>
<rect x="1312" y="415" width="341" height="2.6" fill="url(#s185)"/>
<rect x="1313" y="417" width="339" height="2.6" fill="url(#s186)"/>
<rect x="1314" y="419" width="336" height="2.6" fill="url(#s187)"/>
<rect x="1316" y="421" width="332" height="2.6" fill="url(#s188)"/>
<rect x="1317" y="423" width="329" height="2.6" fill="url(#s189)"/>
<rect x="1318" y="425" width="326" height="2.6" fill="url(#s190)"/>
<rect x="1320" y="427" width="322" height="2.6" fill="url(#s191)"/>
<rect x="1321" y="429" width="319" height="2.6" fill="url(#s192)"/>
<rect x="1323" y="431" width="315" height="2.6" fill="url(#s193)"/>
<rect x="1324" y="433" width="312" height="2.6" fill="url(#s194)"/>
<rect x="1325" y="435" width="309" height="2.6" fill="url(#s195)"/>
<rect x="1327" y="437" width="305" height="2.6" fill="url(#s196)"/>
<rect x="1328" y="439" width="302" height="2.6" fill="url(#s197)"/>
<rect x="1330" y="441" width="298" height="2.6" fill="url(#s198)"/>
<rect x="1331" y="443" width="295" height="2.6" fill="url(#s199)"/>
<rect x="1333" y="445" width="291" height="2.6" fill="url(#s200)"/>
<rect x="1334" y="447" width="288" height="2.6" fill="url(#s201)"/>
<rect x="1336" y="449" width="285" height="2.6" fill="url(#s202)"/>
<rect x="1337" y="451" width="282" height="2.6" fill="url(#s203)"/>
<rect x="1339" y="453" width="278" height="2.6" fill="url(#s204)"/>
<rect x="1340" y="455" width="275" height="2.6" fill="url(#s205)"/>
<rect x="1342" y="457" width="271" height="2.6" fill="url(#s206)"/>
<rect x="1343" y="459" width="268" height="2.6" fill="url(#s207)"/>
<rect x="1345" y="461" width="264" height="2.6" fill="url(#s208)"/>
<rect x="1346" y="463" width="261" height="2.6" fill="url(#s209)"/>
<rect x="1348" y="465" width="257" height="2.6" fill="url(#s210)"/>
<rect x="1349" y="467" width="254" height="2.6" fill="url(#s211)"/>
<rect x="1351" y="469" width="250" height="2.6" fill="url(#s212)"/>
<rect x="1353" y="471" width="246" height="2.6" fill="url(#s213)"/>
<rect x="1354" y="473" width="243" height="2.6" fill="url(#s214)"/>
<rect x="1356" y="475" width="239" height="2.6" fill="url(#s215)"/>
<rect x="1357" y="477" width="236" height="2.6" fill="url(#s216)"/>
<rect x="1359" y="479" width="232" height="2.6" fill="url(#s217)"/>
<rect x="1361" y="481" width="228" height="2.6" fill="url(#s218)"/>
<rect x="1362" y="483" width="226" height="2.6" fill="url(#s219)"/>
<rect x="1364" y="485" width="222" height="2.6" fill="url(#s220)"/>
<rect x="1366" y="487" width="218" height="2.6" fill="url(#s221)"/>
<rect x="1367" y="489" width="215" height="2.6" fill="url(#s222)"/>
<rect x="1369" y="491" width="211" height="2.6" fill="url(#s223)"/>
<rect x="1371" y="493" width="207" height="2.6" fill="url(#s224)"/>
<rect x="1373" y="495" width="203" height="2.6" fill="url(#s225)"/>
<rect x="1374" y="497" width="200" height="2.6" fill="url(#s226)"/>
<rect x="1376" y="499" width="196" height="2.6" fill="url(#s227)"/>
<rect x="1378" y="501" width="192" height="2.6" fill="url(#s228)"/>
<rect x="1380" y="503" width="188" height="2.6" fill="url(#s229)"/>
<rect x="1382" y="505" width="184" height="2.6" fill="url(#s230)"/>
<rect x="1384" y="507" width="180" height="2.6" fill="url(#s231)"/>
<rect x="1386" y="509" width="176" height="2.6" fill="url(#s232)"/>
<rect x="1388" y="511" width="172" height="2.6" fill="url(#s233)"/>
<rect x="1390" y="513" width="168" height="2.6" fill="url(#s234)"/>
<rect x="1392" y="515" width="165" height="2.6" fill="url(#s235)"/>
<rect x="1394" y="517" width="161" height="2.6" fill="url(#s236)"/>
<rect x="1396" y="519" width="157" height="2.6" fill="url(#s237)"/>
<rect x="1398" y="521" width="153" height="2.6" fill="url(#s238)"/>
<rect x="1400" y="523" width="149" height="2.6" fill="url(#s239)"/>
<rect x="1402" y="525" width="145" height="2.6" fill="url(#s240)"/>
<rect x="1404" y="527" width="141" height="2.6" fill="url(#s241)"/>
<rect x="1407" y="529" width="136" height="2.6" fill="url(#s242)"/>
<rect x="1409" y="531" width="132" height="2.6" fill="url(#s243)"/>
<rect x="1411" y="533" width="128" height="2.6" fill="url(#s244)"/>
<rect x="1413" y="535" width="124" height="2.6" fill="url(#s245)"/>
<rect x="1416" y="537" width="119" height="2.6" fill="url(#s246)"/>
<rect x="1418" y="539" width="115" height="2.6" fill="url(#s247)"/>
<rect x="1420" y="541" width="111" height="2.6" fill="url(#s248)"/>
<rect x="1423" y="543" width="106" height="2.6" fill="url(#s249)"/>
<rect x="1425" y="545" width="102" height="2.6" fill="url(#s250)"/>
<rect x="1427" y="547" width="99" height="2.6" fill="url(#s251)"/>
<rect x="1430" y="549" width="94" height="2.6" fill="url(#s252)"/>
<rect x="1432" y="551" width="90" height="2.6" fill="url(#s253)"/>
<rect x="1435" y="553" width="85" height="2.6" fill="url(#s254)"/>
<rect x="1437" y="555" width="81" height="2.6" fill="url(#s255)"/>
<rect x="1440" y="557" width="76" height="2.6" fill="url(#s256)"/>
<rect x="1442" y="559" width="72" height="2.6" fill="url(#s257)"/>
<rect x="1444" y="561" width="68" height="2.6" fill="url(#s258)"/>
<rect x="1447" y="563" width="63" height="2.6" fill="url(#s259)"/>
<rect x="1449" y="565" width="59" height="2.6" fill="url(#s260)"/>
<rect x="1452" y="567" width="54" height="2.6" fill="url(#s261)"/>
<rect x="1454" y="569" width="50" height="2.6" fill="url(#s262)"/>
<rect x="1456" y="571" width="46" height="2.6" fill="url(#s263)"/>
<rect x="1459" y="573" width="41" height="2.6" fill="url(#s264)"/>
<rect x="1461" y="575" width="37" height="2.6" fill="url(#s265)"/>
<rect x="1463" y="577" width="33" height="2.6" fill="url(#s266)"/>
<rect x="1466" y="579" width="28" height="2.6" fill="url(#s267)"/>
<rect x="1468" y="581" width="25" height="2.6" fill="url(#s268)"/>
<rect x="1471" y="583" width="20" height="2.6" fill="url(#s269)"/>
<rect x="1474" y="585" width="15" height="2.6" fill="url(#s270)"/>
<rect x="1477" y="587" width="10" height="2.6" fill="url(#s271)"/>
<path d="M1484.32,587.42 L1483.09,587.82 L1481.58,587.93 L1480.13,587.78 L1478.62,587.03 L1477.46,586.33 L1476.16,585.46 L1474.69,584.39 L1473.02,583.11 L1472.1,582.39 L1471.1,581.61 L1470.02,580.76 L1468.86,579.85 L1467.63,578.87 L1466.34,577.83 L1464.99,576.71 L1463.58,575.51 L1462.1,574.23 L1460.54,572.88 L1458.91,571.48 L1457.2,570.02 L1455.42,568.51 L1453.54,566.94 L1451.57,565.29 L1449.48,563.55 L1447.27,561.72 L1444.93,559.78 L1442.47,557.74 L1439.88,555.6 L1437.18,553.36 L1434.36,551.03 L1431.44,548.62 L1428.42,546.12 L1425.28,543.51 L1422.03,540.76 L1418.63,537.87 L1415.08,534.79 L1411.37,531.54 L1407.53,528.09 L1403.56,524.46 L1399.47,520.63 L1395.26,516.6 L1390.92,512.33 L1386.39,507.73 L1381.63,502.73 L1376.57,497.2 L1371.15,491.06 L1365.35,484.26 L1359.2,476.83 L1352.75,468.8 L1346.06,460.24 L1339.2,451.18 L1332.16,441.62 L1324.94,431.52 L1317.54,420.88 L1309.99,409.7 L1302.29,397.96 L1294.5,385.74 L1286.66,373.1 L1278.78,360.14 L1270.92,346.93 L1263.1,333.55 L1255.36,320.01 L1247.76,306.37 L1240.38,292.66 L1233.32,278.97 L1226.65,265.41 L1220.39,252.06 L1214.53,238.98 L1209.05,226.2 L1203.92,213.77 L1199.13,201.74 L1194.73,190.18 L1190.73,179.14 L1187.14,168.66 L1183.95,158.77 L1181.16,149.48 L1178.76,140.77 L1176.72,132.63 L1175.02,125.01 L1173.64,117.89 L1172.56,111.28 L1171.78,105.17 L1171.29,99.52 L1171.08,94.29 L1171.14,89.44 L1171.45,84.91 L1172,80.7 L1172.79,76.8 L1173.81,73.19 L1175.08,69.89 L1176.57,66.87 L1178.26,64.11 L1180.14,61.63 L1182.2,59.42 L1184.44,57.48 L1186.85,55.79 L1189.39,54.32 L1192.07,53.07 L1194.85,52.02 L1197.74,51.14 L1200.73,50.43 L1203.81,49.87 L1206.97,49.43 L1210.22,49.08 L1213.53,48.8 L1216.91,48.59 L1220.35,48.44 L1223.82,48.33 L1227.3,48.26 L1230.78,48.23 L1234.26,48.22 L1237.73,48.24 L1241.22,48.28 L1244.72,48.34 L1248.26,48.44 L1251.84,48.56 L1255.44,48.71 L1259.09,48.88 L1262.79,49.07 L1266.53,49.29 L1270.34,49.53 L1274.21,49.8 L1278.14,50.08 L1282.13,50.39 L1286.19,50.72 L1290.31,51.07 L1294.51,51.44 L1298.78,51.82 L1303.14,52.23 L1307.57,52.65 L1312.1,53.09 L1316.71,53.55 L1321.41,54.03 L1326.21,54.52 L1331.1,55.04 L1336.09,55.56 L1341.19,56.11 L1346.39,56.67 L1351.7,57.25 L1357.11,57.84 L1362.64,58.45 L1368.29,59.08 L1374.04,59.72 L1379.92,60.38 L1385.91,61.05 L1392.03,61.74 L1398.28,62.45 L1404.64,63.17 L1411.13,63.91 L1417.75,64.67 L1424.5,65.44 L1431.38,66.23 L1438.39,67.03 L1445.53,67.86 L1452.8,68.69 L1460.19,69.55 L1467.72,70.42 L1475.37,71.3 L1483.14,72.2 L1491.03,73.11 L1499.04,74.03 L1507.17,74.97 L1515.41,75.92 L1523.76,76.88 L1532.21,77.85 L1540.76,78.83 L1549.4,79.83 L1558.12,80.83 L1566.92,81.84 L1575.79,82.86 L1584.74,83.9 L1593.74,84.94 L1602.76,85.98 L1611.75,87.02 L1620.67,88.05 L1629.5,89.07 L1638.22,90.08 L1646.88,91.07 L1655.5,92.07 L1664.1,93.06 L1672.71,94.05 L1681.28,95.04 L1689.77,96.01 L1698.15,96.98 L1706.36,97.92 L1714.36,98.84 L1722.17,99.74 L1729.8,100.61 L1737.26,101.46 L1744.55,102.3 L1751.68,103.12 L1758.64,103.92 L1765.4,104.7 L1771.98,105.46 L1778.35,106.2 L1784.52,106.91 L1790.49,107.6 L1796.25,108.27 L1801.81,108.91 L1807.18,109.53 L1812.36,110.12 L1817.36,110.7 L1822.19,111.25 L1826.85,111.79 L1831.35,112.31 L1835.68,112.8 L1839.86,113.28 L1843.9,113.75 L1847.83,114.2 L1851.65,114.64 L1855.39,115.07 L1859.03,115.49 L1862.56,115.9 L1865.98,116.3 L1869.29,116.68 L1872.49,117.05 L1875.57,117.4 L1878.55,117.75 L1881.42,118.08 L1884.18,118.4 L1886.84,118.71 L1889.4,119 L1891.85,119.28 L1894.18,119.55 L1896.39,119.81 L1898.46,120.04 L1900.4,120.27 L1902.22,120.48 L1903.94,120.67 L1905.58,120.86 L1907.17,121.05 L1908.68,121.22 L1910.13,121.39 L1911.5,121.55 L1914.03,121.84 L1916.28,122.1 L1918.24,122.33 L1919.87,122.51 L1921.23,122.67 L1923.08,122.89 L1924.79,123.08 L1926.26,123.25 L1927.62,123.41 L1929,123.57 L1930.75,123.77 L1932.1,123.93 L1933.51,124.09Z M1290.2,56.4 L1778.1,105 L1384.5,453.3Z" fill="#000" fill-opacity="0.41" fill-rule="evenodd"/>
</g></g>
<rect x="1169.4" y="35.4" width="737" height="567.7" fill="none" stroke="#b0b0b0" stroke-width="1.7"/>
<line x1="1169.4" y1="603.1" x2="1169.4" y2="610.1" stroke="#d8d8d8" stroke-width="1.6"/>
<text x="1168.9" y="627.3" font-size="15.6" fill="#dcdcdc" text-anchor="middle" textLength="9.11" lengthAdjust="spacingAndGlyphs">0</text>
<line x1="1162.9" y1="602.9" x2="1169.4" y2="602.9" stroke="#d8d8d8" stroke-width="1.6"/>
<text x="1162" y="610.2" font-size="15.6" fill="#dcdcdc" text-anchor="end" textLength="9.11" lengthAdjust="spacingAndGlyphs">0</text>
<line x1="1230.68" y1="603.1" x2="1230.68" y2="610.1" stroke="#d8d8d8" stroke-width="1.6"/>
<text x="1230.18" y="627.3" font-size="15.6" fill="#dcdcdc" text-anchor="middle" textLength="31.88" lengthAdjust="spacingAndGlyphs">0.05</text>
<line x1="1162.9" y1="556.48" x2="1169.4" y2="556.48" stroke="#d8d8d8" stroke-width="1.6"/>
<text x="1162" y="562.98" font-size="15.6" fill="#dcdcdc" text-anchor="end" textLength="31.88" lengthAdjust="spacingAndGlyphs">0.05</text>
<line x1="1291.95" y1="603.1" x2="1291.95" y2="610.1" stroke="#d8d8d8" stroke-width="1.6"/>
<text x="1291.45" y="627.3" font-size="15.6" fill="#dcdcdc" text-anchor="middle" textLength="22.77" lengthAdjust="spacingAndGlyphs">0.1</text>
<line x1="1162.9" y1="509.26" x2="1169.4" y2="509.26" stroke="#d8d8d8" stroke-width="1.6"/>
<text x="1162" y="515.76" font-size="15.6" fill="#dcdcdc" text-anchor="end" textLength="22.77" lengthAdjust="spacingAndGlyphs">0.1</text>
<line x1="1353.23" y1="603.1" x2="1353.23" y2="610.1" stroke="#d8d8d8" stroke-width="1.6"/>
<text x="1352.73" y="627.3" font-size="15.6" fill="#dcdcdc" text-anchor="middle" textLength="31.88" lengthAdjust="spacingAndGlyphs">0.15</text>
<line x1="1162.9" y1="462.04" x2="1169.4" y2="462.04" stroke="#d8d8d8" stroke-width="1.6"/>
<text x="1162" y="468.54" font-size="15.6" fill="#dcdcdc" text-anchor="end" textLength="31.88" lengthAdjust="spacingAndGlyphs">0.15</text>
<line x1="1414.5" y1="603.1" x2="1414.5" y2="610.1" stroke="#d8d8d8" stroke-width="1.6"/>
<text x="1414" y="627.3" font-size="15.6" fill="#dcdcdc" text-anchor="middle" textLength="22.77" lengthAdjust="spacingAndGlyphs">0.2</text>
<line x1="1162.9" y1="414.82" x2="1169.4" y2="414.82" stroke="#d8d8d8" stroke-width="1.6"/>
<text x="1162" y="421.32" font-size="15.6" fill="#dcdcdc" text-anchor="end" textLength="22.77" lengthAdjust="spacingAndGlyphs">0.2</text>
<line x1="1475.78" y1="603.1" x2="1475.78" y2="610.1" stroke="#d8d8d8" stroke-width="1.6"/>
<text x="1475.28" y="627.3" font-size="15.6" fill="#dcdcdc" text-anchor="middle" textLength="31.88" lengthAdjust="spacingAndGlyphs">0.25</text>
<line x1="1162.9" y1="367.6" x2="1169.4" y2="367.6" stroke="#d8d8d8" stroke-width="1.6"/>
<text x="1162" y="374.1" font-size="15.6" fill="#dcdcdc" text-anchor="end" textLength="31.88" lengthAdjust="spacingAndGlyphs">0.25</text>
<line x1="1537.05" y1="603.1" x2="1537.05" y2="610.1" stroke="#d8d8d8" stroke-width="1.6"/>
<text x="1536.55" y="627.3" font-size="15.6" fill="#dcdcdc" text-anchor="middle" textLength="22.77" lengthAdjust="spacingAndGlyphs">0.3</text>
<line x1="1162.9" y1="320.38" x2="1169.4" y2="320.38" stroke="#d8d8d8" stroke-width="1.6"/>
<text x="1162" y="326.88" font-size="15.6" fill="#dcdcdc" text-anchor="end" textLength="22.77" lengthAdjust="spacingAndGlyphs">0.3</text>
<line x1="1598.33" y1="603.1" x2="1598.33" y2="610.1" stroke="#d8d8d8" stroke-width="1.6"/>
<text x="1597.83" y="627.3" font-size="15.6" fill="#dcdcdc" text-anchor="middle" textLength="31.88" lengthAdjust="spacingAndGlyphs">0.35</text>
<line x1="1162.9" y1="273.16" x2="1169.4" y2="273.16" stroke="#d8d8d8" stroke-width="1.6"/>
<text x="1162" y="279.66" font-size="15.6" fill="#dcdcdc" text-anchor="end" textLength="31.88" lengthAdjust="spacingAndGlyphs">0.35</text>
<line x1="1659.6" y1="603.1" x2="1659.6" y2="610.1" stroke="#d8d8d8" stroke-width="1.6"/>
<text x="1659.1" y="627.3" font-size="15.6" fill="#dcdcdc" text-anchor="middle" textLength="22.77" lengthAdjust="spacingAndGlyphs">0.4</text>
<line x1="1162.9" y1="225.94" x2="1169.4" y2="225.94" stroke="#d8d8d8" stroke-width="1.6"/>
<text x="1162" y="232.44" font-size="15.6" fill="#dcdcdc" text-anchor="end" textLength="22.77" lengthAdjust="spacingAndGlyphs">0.4</text>
<line x1="1720.88" y1="603.1" x2="1720.88" y2="610.1" stroke="#d8d8d8" stroke-width="1.6"/>
<text x="1720.38" y="627.3" font-size="15.6" fill="#dcdcdc" text-anchor="middle" textLength="31.88" lengthAdjust="spacingAndGlyphs">0.45</text>
<line x1="1162.9" y1="178.72" x2="1169.4" y2="178.72" stroke="#d8d8d8" stroke-width="1.6"/>
<text x="1162" y="185.22" font-size="15.6" fill="#dcdcdc" text-anchor="end" textLength="31.88" lengthAdjust="spacingAndGlyphs">0.45</text>
<line x1="1782.15" y1="603.1" x2="1782.15" y2="610.1" stroke="#d8d8d8" stroke-width="1.6"/>
<text x="1781.65" y="627.3" font-size="15.6" fill="#dcdcdc" text-anchor="middle" textLength="22.77" lengthAdjust="spacingAndGlyphs">0.5</text>
<line x1="1162.9" y1="131.5" x2="1169.4" y2="131.5" stroke="#d8d8d8" stroke-width="1.6"/>
<text x="1162" y="138" font-size="15.6" fill="#dcdcdc" text-anchor="end" textLength="22.77" lengthAdjust="spacingAndGlyphs">0.5</text>
<line x1="1843.43" y1="603.1" x2="1843.43" y2="610.1" stroke="#d8d8d8" stroke-width="1.6"/>
<text x="1842.93" y="627.3" font-size="15.6" fill="#dcdcdc" text-anchor="middle" textLength="31.88" lengthAdjust="spacingAndGlyphs">0.55</text>
<line x1="1162.9" y1="84.28" x2="1169.4" y2="84.28" stroke="#d8d8d8" stroke-width="1.6"/>
<text x="1162" y="90.78" font-size="15.6" fill="#dcdcdc" text-anchor="end" textLength="31.88" lengthAdjust="spacingAndGlyphs">0.55</text>
<rect x="1363.65" y="118.75" width="15.9" height="15.9" fill="none" stroke="#fff" stroke-width="1.6" stroke-opacity="0.9"/>
<rect x="1334.15" y="92.35" width="15.9" height="15.9" fill="none" stroke="#fff" stroke-width="1.6" stroke-opacity="0.9"/>
<rect x="1310.55" y="73.45" width="15.9" height="15.9" fill="none" stroke="#fff" stroke-width="1.6" stroke-opacity="0.9"/>
<rect x="1294.65" y="58.95" width="15.9" height="15.9" fill="none" stroke="#fff" stroke-width="1.6" stroke-opacity="0.9"/>
<rect x="1282.25" y="48.25" width="15.9" height="15.9" fill="none" stroke="#fff" stroke-width="1.6" stroke-opacity="0.9"/>
<rect x="1406.05" y="126.65" width="15.9" height="15.9" fill="none" stroke="#fff" stroke-width="1.6" stroke-opacity="0.9"/>
<rect x="1407.45" y="106.25" width="15.9" height="15.9" fill="none" stroke="#fff" stroke-width="1.6" stroke-opacity="0.9"/>
<rect x="1409.15" y="89.55" width="15.9" height="15.9" fill="none" stroke="#fff" stroke-width="1.6" stroke-opacity="0.9"/>
<rect x="1410.95" y="73.65" width="15.9" height="15.9" fill="none" stroke="#fff" stroke-width="1.6" stroke-opacity="0.9"/>
<rect x="1412.65" y="60.35" width="15.9" height="15.9" fill="none" stroke="#fff" stroke-width="1.6" stroke-opacity="0.9"/>
<rect x="1382.45" y="155.05" width="15.9" height="15.9" fill="none" stroke="#fff" stroke-width="1.6" stroke-opacity="0.9"/>
<rect x="1362.25" y="158.05" width="15.9" height="15.9" fill="none" stroke="#fff" stroke-width="1.6" stroke-opacity="0.9"/>
<rect x="1343.65" y="161.55" width="15.9" height="15.9" fill="none" stroke="#fff" stroke-width="1.6" stroke-opacity="0.9"/>
<rect x="1326.05" y="163.15" width="15.9" height="15.9" fill="none" stroke="#fff" stroke-width="1.6" stroke-opacity="0.9"/>
<rect x="1309.05" y="166.05" width="15.9" height="15.9" fill="none" stroke="#fff" stroke-width="1.6" stroke-opacity="0.9"/>
<rect x="1426.25" y="170.95" width="15.9" height="15.9" fill="none" stroke="#fff" stroke-width="1.6" stroke-opacity="0.9"/>
<rect x="1454.45" y="193.85" width="15.9" height="15.9" fill="none" stroke="#fff" stroke-width="1.6" stroke-opacity="0.9"/>
<rect x="1486.15" y="222.45" width="15.9" height="15.9" fill="none" stroke="#fff" stroke-width="1.6" stroke-opacity="0.9"/>
<rect x="1522.05" y="252.35" width="15.9" height="15.9" fill="none" stroke="#fff" stroke-width="1.6" stroke-opacity="0.9"/>
<rect x="1559.85" y="283.65" width="15.9" height="15.9" fill="none" stroke="#fff" stroke-width="1.6" stroke-opacity="0.9"/>
<rect x="1399.85" y="189.45" width="15.9" height="15.9" fill="none" stroke="#fff" stroke-width="1.6" stroke-opacity="0.9"/>
<rect x="1395.35" y="238.55" width="15.9" height="15.9" fill="none" stroke="#fff" stroke-width="1.6" stroke-opacity="0.9"/>
<rect x="1390.45" y="295.95" width="15.9" height="15.9" fill="none" stroke="#fff" stroke-width="1.6" stroke-opacity="0.9"/>
<rect x="1382.45" y="366.65" width="15.9" height="15.9" fill="none" stroke="#fff" stroke-width="1.6" stroke-opacity="0.9"/>
<rect x="1376.55" y="445.25" width="15.9" height="15.9" fill="none" stroke="#fff" stroke-width="1.6" stroke-opacity="0.9"/>
<rect x="1475.35" y="140.45" width="15.9" height="15.9" fill="none" stroke="#fff" stroke-width="1.6" stroke-opacity="0.9"/>
<rect x="1548.85" y="129.55" width="15.9" height="15.9" fill="none" stroke="#fff" stroke-width="1.6" stroke-opacity="0.9"/>
<rect x="1632.25" y="117.45" width="15.9" height="15.9" fill="none" stroke="#fff" stroke-width="1.6" stroke-opacity="0.9"/>
<rect x="1705.85" y="106.05" width="15.9" height="15.9" fill="none" stroke="#fff" stroke-width="1.6" stroke-opacity="0.9"/>
<rect x="1770.15" y="96.85" width="15.9" height="15.9" fill="none" stroke="#fff" stroke-width="1.6" stroke-opacity="0.9"/>
<circle cx="1370.2" cy="126.9" r="4.6" fill="#9bbf98" stroke="#0a0a0a" stroke-width="1.5"/>
<circle cx="1340" cy="103.2" r="4.6" fill="#7fc07c" stroke="#0a0a0a" stroke-width="1.5"/>
<circle cx="1316.5" cy="84.4" r="4.6" fill="#60bd5e" stroke="#0a0a0a" stroke-width="1.5"/>
<circle cx="1296.5" cy="68.8" r="4.6" fill="#44ba42" stroke="#0a0a0a" stroke-width="1.5"/>
<circle cx="1275.6" cy="52.7" r="4.6" fill="#00b800" stroke="#0a0a0a" stroke-width="1.5"/>
<circle cx="1415.5" cy="132.6" r="4.6" fill="#c2c19c" stroke="#0a0a0a" stroke-width="1.5"/>
<circle cx="1419.1" cy="115.9" r="4.6" fill="#c4c080" stroke="#0a0a0a" stroke-width="1.5"/>
<circle cx="1420.1" cy="98.2" r="4.6" fill="#c5c063" stroke="#0a0a0a" stroke-width="1.5"/>
<circle cx="1423.3" cy="84.5" r="4.6" fill="#c8be34" stroke="#0a0a0a" stroke-width="1.5"/>
<circle cx="1424.9" cy="68.5" r="4.6" fill="#cdc700" stroke="#0a0a0a" stroke-width="1.5"/>
<circle cx="1387.5" cy="159.5" r="4.6" fill="#a3bcba" stroke="#0a0a0a" stroke-width="1.5"/>
<circle cx="1365.7" cy="162.9" r="4.6" fill="#8dbcb9" stroke="#0a0a0a" stroke-width="1.5"/>
<circle cx="1347" cy="166.4" r="4.6" fill="#74bcba" stroke="#0a0a0a" stroke-width="1.5"/>
<circle cx="1324.5" cy="167.3" r="4.6" fill="#57bdbc" stroke="#0a0a0a" stroke-width="1.5"/>
<circle cx="1301.1" cy="167.3" r="4.6" fill="#00c2c4" stroke="#0a0a0a" stroke-width="1.5"/>
<circle cx="1437.7" cy="177.4" r="4.6" fill="#bfa2bd" stroke="#0a0a0a" stroke-width="1.5"/>
<circle cx="1464.5" cy="197.5" r="4.6" fill="#c08cbf" stroke="#0a0a0a" stroke-width="1.5"/>
<circle cx="1496" cy="220.4" r="4.6" fill="#c272c1" stroke="#0a0a0a" stroke-width="1.5"/>
<circle cx="1530.5" cy="247.3" r="4.6" fill="#c455c3" stroke="#0a0a0a" stroke-width="1.5"/>
<circle cx="1579" cy="285.4" r="4.6" fill="#c400c6" stroke="#0a0a0a" stroke-width="1.5"/>
<circle cx="1406.3" cy="194" r="4.6" fill="#9d9dc0" stroke="#0a0a0a" stroke-width="1.5"/>
<circle cx="1400.4" cy="236.5" r="4.6" fill="#8584c2" stroke="#0a0a0a" stroke-width="1.5"/>
<circle cx="1392.5" cy="286.6" r="4.6" fill="#6b6bc4" stroke="#0a0a0a" stroke-width="1.5"/>
<circle cx="1381.6" cy="355.8" r="4.6" fill="#4d4dc6" stroke="#0a0a0a" stroke-width="1.5"/>
<circle cx="1363.5" cy="465.5" r="4.6" fill="#0000c8" stroke="#0a0a0a" stroke-width="1.5"/>
<circle cx="1484.4" cy="147.5" r="4.6" fill="#c49a9a" stroke="#0a0a0a" stroke-width="1.5"/>
<circle cx="1552.3" cy="139.6" r="4.6" fill="#c87e7e" stroke="#0a0a0a" stroke-width="1.5"/>
<circle cx="1629.3" cy="128.4" r="4.6" fill="#cb6060" stroke="#0a0a0a" stroke-width="1.5"/>
<circle cx="1699.4" cy="119" r="4.6" fill="#ce4242" stroke="#0a0a0a" stroke-width="1.5"/>
<circle cx="1790.4" cy="106.3" r="4.6" fill="#d00000" stroke="#0a0a0a" stroke-width="1.5"/>
<rect x="1404.3" y="152.9" width="14" height="14" fill="none" stroke="#000" stroke-width="1.8" stroke-opacity="1"/>
<circle cx="1412.1" cy="158.3" r="4.4" fill="#ffffff" stroke="#0a0a0a" stroke-width="1.4"/>
<circle cx="1426.8" cy="155.5" r="5.1" fill="#000"/>
<rect x="1651.4" y="424.6" width="251" height="172.4" fill="#2c2c2c"/>
<rect x="1655.1" y="428.4" width="243.4" height="164.8" fill="#242424"/>
<g clip-path="url(#cin)"><g clip-path="url(#ciloc)">
<rect x="1655" y="428.4" width="244" height="2.6" fill="url(#i1)"/>
<rect x="1655" y="430.4" width="244" height="2.6" fill="url(#i2)"/>
<rect x="1655" y="432.4" width="244" height="2.6" fill="url(#i3)"/>
<rect x="1655" y="434.4" width="244" height="2.6" fill="url(#i4)"/>
<rect x="1655" y="436.4" width="244" height="2.6" fill="url(#i5)"/>
<rect x="1655" y="438.4" width="244" height="2.6" fill="url(#i6)"/>
<rect x="1655" y="440.4" width="244" height="2.6" fill="url(#i7)"/>
<rect x="1655" y="442.4" width="244" height="2.6" fill="url(#i8)"/>
<rect x="1655" y="444.4" width="244" height="2.6" fill="url(#i9)"/>
<rect x="1655" y="446.4" width="244" height="2.6" fill="url(#i10)"/>
<rect x="1655" y="448.4" width="244" height="2.6" fill="url(#i11)"/>
<rect x="1655" y="450.4" width="244" height="2.6" fill="url(#i12)"/>
<rect x="1655" y="452.4" width="244" height="2.6" fill="url(#i13)"/>
<rect x="1655" y="454.4" width="244" height="2.6" fill="url(#i14)"/>
<rect x="1655" y="456.4" width="244" height="2.6" fill="url(#i15)"/>
<rect x="1655" y="458.4" width="244" height="2.6" fill="url(#i16)"/>
<rect x="1655" y="460.4" width="244" height="2.6" fill="url(#i17)"/>
<rect x="1655" y="462.4" width="244" height="2.6" fill="url(#i18)"/>
<rect x="1655" y="464.4" width="244" height="2.6" fill="url(#i19)"/>
<rect x="1655" y="466.4" width="244" height="2.6" fill="url(#i20)"/>
<rect x="1655" y="468.4" width="244" height="2.6" fill="url(#i21)"/>
<rect x="1655" y="470.4" width="244" height="2.6" fill="url(#i22)"/>
<rect x="1655" y="472.4" width="244" height="2.6" fill="url(#i23)"/>
<rect x="1655" y="474.4" width="244" height="2.6" fill="url(#i24)"/>
<rect x="1655" y="476.4" width="244" height="2.6" fill="url(#i25)"/>
<rect x="1655" y="478.4" width="244" height="2.6" fill="url(#i26)"/>
<rect x="1655" y="480.4" width="244" height="2.6" fill="url(#i27)"/>
<rect x="1655" y="482.4" width="244" height="2.6" fill="url(#i28)"/>
<rect x="1655" y="484.4" width="244" height="2.6" fill="url(#i29)"/>
<rect x="1655" y="486.4" width="244" height="2.6" fill="url(#i30)"/>
<rect x="1655" y="488.4" width="244" height="2.6" fill="url(#i31)"/>
<rect x="1655" y="490.4" width="244" height="2.6" fill="url(#i32)"/>
<rect x="1655" y="492.4" width="244" height="2.6" fill="url(#i33)"/>
<rect x="1655" y="494.4" width="244" height="2.6" fill="url(#i34)"/>
<rect x="1655" y="496.4" width="244" height="2.6" fill="url(#i35)"/>
<rect x="1655" y="498.4" width="244" height="2.6" fill="url(#i36)"/>
<rect x="1655" y="500.4" width="244" height="2.6" fill="url(#i37)"/>
<rect x="1655" y="502.4" width="244" height="2.6" fill="url(#i38)"/>
<rect x="1655" y="504.4" width="244" height="2.6" fill="url(#i39)"/>
<rect x="1655" y="506.4" width="244" height="2.6" fill="url(#i40)"/>
<rect x="1655" y="508.4" width="244" height="2.6" fill="url(#i41)"/>
<rect x="1655" y="510.4" width="244" height="2.6" fill="url(#i42)"/>
<rect x="1655" y="512.4" width="244" height="2.6" fill="url(#i43)"/>
<rect x="1655" y="514.4" width="244" height="2.6" fill="url(#i44)"/>
<rect x="1655" y="516.4" width="244" height="2.6" fill="url(#i45)"/>
<rect x="1655" y="518.4" width="244" height="2.6" fill="url(#i46)"/>
<rect x="1655" y="520.4" width="244" height="2.6" fill="url(#i47)"/>
<rect x="1655" y="522.4" width="244" height="2.6" fill="url(#i48)"/>
<rect x="1655" y="524.4" width="244" height="2.6" fill="url(#i49)"/>
<rect x="1655" y="526.4" width="244" height="2.6" fill="url(#i50)"/>
<rect x="1655" y="528.4" width="244" height="2.6" fill="url(#i51)"/>
<rect x="1655" y="530.4" width="244" height="2.6" fill="url(#i52)"/>
<rect x="1655" y="532.4" width="244" height="2.6" fill="url(#i53)"/>
<rect x="1655" y="534.4" width="244" height="2.6" fill="url(#i54)"/>
<rect x="1655" y="536.4" width="244" height="2.6" fill="url(#i55)"/>
<rect x="1655" y="538.4" width="244" height="2.6" fill="url(#i56)"/>
<rect x="1655" y="540.4" width="244" height="2.6" fill="url(#i57)"/>
<rect x="1655" y="542.4" width="244" height="2.6" fill="url(#i58)"/>
<rect x="1655" y="544.4" width="244" height="2.6" fill="url(#i59)"/>
<rect x="1655" y="546.4" width="244" height="2.6" fill="url(#i60)"/>
<rect x="1655" y="548.4" width="244" height="2.6" fill="url(#i61)"/>
<rect x="1655" y="550.4" width="244" height="2.6" fill="url(#i62)"/>
<rect x="1655" y="552.4" width="244" height="2.6" fill="url(#i63)"/>
<rect x="1655" y="554.4" width="244" height="2.6" fill="url(#i64)"/>
<rect x="1655" y="556.4" width="244" height="2.6" fill="url(#i65)"/>
<rect x="1655" y="558.4" width="244" height="2.6" fill="url(#i66)"/>
<rect x="1655" y="560.4" width="244" height="2.6" fill="url(#i67)"/>
<rect x="1655" y="562.4" width="244" height="2.6" fill="url(#i68)"/>
<rect x="1655" y="564.4" width="244" height="2.6" fill="url(#i69)"/>
<rect x="1655" y="566.4" width="244" height="2.6" fill="url(#i70)"/>
<rect x="1655" y="568.4" width="244" height="2.6" fill="url(#i71)"/>
<rect x="1655" y="570.4" width="244" height="2.6" fill="url(#i72)"/>
<rect x="1655" y="572.4" width="244" height="2.6" fill="url(#i73)"/>
<rect x="1655" y="574.4" width="244" height="2.6" fill="url(#i74)"/>
<rect x="1655" y="576.4" width="244" height="2.6" fill="url(#i75)"/>
<rect x="1655" y="578.4" width="244" height="2.6" fill="url(#i76)"/>
<rect x="1655" y="580.4" width="244" height="2.6" fill="url(#i77)"/>
<rect x="1655" y="582.4" width="244" height="2.6" fill="url(#i78)"/>
<rect x="1655" y="584.4" width="244" height="2.6" fill="url(#i79)"/>
<rect x="1655" y="586.4" width="244" height="2.6" fill="url(#i80)"/>
<rect x="1655" y="588.4" width="244" height="2.6" fill="url(#i81)"/>
<rect x="1655" y="590.4" width="244" height="2.6" fill="url(#i82)"/>
<rect x="1655" y="592.4" width="244" height="1.4" fill="url(#i83)"/>
<path d="M493.17,2260.77 L493.05,2260.77 L492.97,2260.74 L492.9,2260.71 L492.8,2260.69 L492.66,2260.71 L492.48,2260.76 L492.29,2260.83 L492.08,2260.89 L491.87,2260.92 L491.65,2260.93 L491.43,2260.89 L491.19,2260.85 L490.94,2260.83 L490.7,2260.84 L490.48,2260.9 L490.26,2260.99 L490.03,2261.09 L489.82,2261.19 L489.6,2261.26 L489.39,2261.32 L489.17,2261.35 L488.91,2261.38 L488.6,2261.39 L488.25,2261.39 L487.86,2261.39 L487.43,2261.37 L486.99,2261.34 L486.54,2261.31 L486.11,2261.3 L485.69,2261.31 L485.27,2261.32 L484.81,2261.32 L484.33,2261.3 L483.82,2261.26 L483.31,2261.2 L482.8,2261.12 L482.26,2261.01 L481.63,2260.85 L480.88,2260.61 L480,2260.31 L479.02,2259.95 L477.98,2259.55 L476.9,2259.1 L475.78,2258.6 L474.61,2258.05 L473.39,2257.44 L472.11,2256.77 L470.74,2256.04 L469.27,2255.25 L467.69,2254.38 L465.97,2253.45 L464.13,2252.44 L462.18,2251.35 L460.14,2250.18 L458.04,2248.93 L455.85,2247.58 L453.56,2246.14 L451.16,2244.61 L448.63,2243.01 L445.95,2241.34 L443.11,2239.6 L440.1,2237.78 L436.89,2235.86 L433.48,2233.83 L429.85,2231.66 L425.98,2229.36 L421.87,2226.92 L417.52,2224.34 L412.94,2221.62 L408.12,2218.77 L403.08,2215.79 L397.82,2212.67 L392.33,2209.38 L386.59,2205.89 L380.59,2202.17 L374.28,2198.19 L367.69,2193.91 L360.84,2189.34 L353.73,2184.45 L346.39,2179.23 L338.82,2173.65 L330.98,2167.66 L322.83,2161.11 L314.28,2153.85 L305.22,2145.68 L295.51,2136.41 L285.1,2125.92 L273.98,2114.14 L262.18,2101.03 L249.8,2086.61 L236.9,2070.84 L223.43,2053.56 L209.34,2034.6 L194.58,2013.79 L179.09,1990.89 L162.87,1965.7 L145.9,1938.09 L128.14,1907.95 L109.53,1875.2 L90.01,1839.74 L69.51,1801.46 L48.07,1760.1 L25.86,1715.42 L3.08,1667.26 L-19.95,1615.54 L-42.89,1560.35 L-65.66,1501.73 L-88.29,1439.63 L-110.86,1374.02 L-133.45,1304.89 L-156,1232.36 L-178.21,1156.82 L-199.82,1078.71 L-220.57,998.54 L-240.21,916.86 L-258.49,834.28 L-275.22,751.23 L-290.24,668 L-303.41,584.95 L-314.65,502.48 L-323.82,421.25 L-330.68,341.99 L-335.02,265.09 L-336.71,190.72 L-335.63,118.83 L-331.8,49.37 L-325.15,-17.29 L-315.52,-80.64 L-302.79,-140.2 L-286.89,-195.49 L-267.92,-246.33 L-246.13,-292.53 L-221.64,-333.65 L-194.64,-369.32 L-165.28,-399.28 L-133.75,-423.59 L-100.41,-442.61 L-65.61,-456.66 L-29.64,-466.05 L7.29,-471.09 L45.03,-472.04 L83.43,-469.39 L122.36,-463.8 L161.7,-455.84 L201.32,-446.05 L241.18,-434.72 L281.09,-422.06 L320.79,-408.37 L360.08,-393.93 L398.78,-379 L436.81,-363.76 L474.3,-348.2 L511.36,-332.27 L548.07,-315.93 L584.51,-299.12 L620.69,-281.89 L656.62,-264.27 L692.35,-246.28 L727.92,-227.9 L763.38,-209.14 L798.74,-190.01 L834.03,-170.53 L869.23,-150.73 L904.34,-130.62 L939.38,-110.25 L974.35,-89.61 L1009.26,-68.72 L1044.13,-47.6 L1078.97,-26.26 L1113.8,-4.72 L1148.63,17.02 L1183.46,38.93 L1218.28,61 L1253.08,83.22 L1287.87,105.56 L1322.68,128.04 L1357.49,150.64 L1392.29,173.33 L1427.08,196.1 L1461.85,218.94 L1496.62,241.84 L1531.35,264.78 L1566.05,287.76 L1600.7,310.76 L1635.32,333.78 L1669.88,356.82 L1704.37,379.85 L1738.77,402.86 L1773.08,425.84 L1807.29,448.79 L1841.37,471.69 L1875.33,494.53 L1909.14,517.29 L1942.79,539.97 L1976.27,562.54 L2009.55,585 L2042.62,607.32 L2075.46,629.5 L2108.04,651.5 L2140.37,673.32 L2172.43,694.95 L2204.21,716.38 L2235.68,737.59 L2266.83,758.58 L2297.61,779.31 L2328.01,799.78 L2358,819.97 L2387.58,839.88 L2416.73,859.51 L2445.43,878.86 L2473.67,897.93 L2501.4,916.67 L2528.54,935.03 L2554.99,952.92 L2580.67,970.27 L2605.5,987.04 L2629.56,1003.27 L2652.94,1019.02 L2675.72,1034.38 L2698,1049.4 L2719.83,1064.11 L2741.15,1078.49 L2761.87,1092.45 L2781.91,1105.95 L2801.19,1118.93 L2819.66,1131.34 L2837.39,1143.24 L2854.41,1154.66 L2870.78,1165.65 L2886.53,1176.23 L2901.67,1186.42 L2916.2,1196.21 L2930.12,1205.61 L2943.46,1214.62 L2956.21,1223.24 L2968.4,1231.47 L2980.03,1239.34 L2991.12,1246.84 L3001.72,1254 L3011.83,1260.83 L3021.5,1267.35 L3030.74,1273.57 L3039.59,1279.51 L3048.05,1285.19 L3056.14,1290.63 L3063.86,1295.83 L3071.24,1300.79 L3078.32,1305.56 L3085.14,1310.16 L3091.73,1314.61 L3098.13,1318.92 L3104.31,1323.09 L3110.26,1327.11 L3115.99,1330.99 L3121.5,1334.7 L3126.78,1338.28 L3131.85,1341.71 L3136.72,1345 L3141.38,1348.15 L3145.84,1351.16 L3150.12,1354.05 L3154.21,1356.82 L3158.12,1359.46 L3161.82,1361.95 L3165.31,1364.3 L3168.57,1366.5 L3171.62,1368.55 L3174.47,1370.47 L3177.16,1372.28 L3179.72,1374 L3182.17,1375.65 L3184.5,1377.24 L3186.73,1378.74 L3188.83,1380.17 L3190.82,1381.51 L3192.69,1382.78 L3194.46,1383.98 L3196.12,1385.1 L3197.66,1386.14 L3199.08,1387.1 L3200.37,1387.98 L3201.54,1388.77 L3202.6,1389.49 L3203.59,1390.16 L3204.53,1390.8 L3205.46,1391.42 L3206.37,1392.04 L3207.26,1392.64 L3208.12,1393.23 L3208.93,1393.78 L3209.7,1394.29 L3210.43,1394.79 L3211.12,1395.26 L3211.8,1395.72 L3212.47,1396.17 L3213.15,1396.63 L3213.83,1397.1 L3214.52,1397.56 L3215.2,1398.02 L3215.86,1398.47 L3216.51,1398.91 L3217.16,1399.35 L3217.79,1399.77 L3218.39,1400.18 L3218.93,1400.55 L3219.4,1400.86 L3219.78,1401.12 L3220.1,1401.33 L3220.36,1401.51 L3220.6,1401.68 L3220.83,1401.83 L3221.05,1401.98 L3221.25,1402.11 L3221.43,1402.23 L3221.58,1402.34 L3221.73,1402.44 L3221.86,1402.53 L3221.98,1402.61 L3222.06,1402.66 L3222.06,1402.66Z M2955.83,1222.41 L935.61,2.89 L375.79,2079.37Z" fill="#000" fill-opacity="0.41" fill-rule="evenodd"/>
</g></g>
<rect x="1655.1" y="428.4" width="243.4" height="164.8" fill="none" stroke="#9c9c9c" stroke-width="1.7"/>
<rect x="1768.1" y="502.4" width="15.8" height="15.8" fill="none" stroke="#fff" stroke-width="1.7" stroke-opacity="0.9"/>
<circle cx="1810.9" cy="521.4" r="4.6" fill="#c8c200" stroke="#0a0a0a" stroke-width="1.4"/>
<text x="53.6" y="679.9" font-size="30.6" fill="#f2f2f2" textLength="268" lengthAdjust="spacingAndGlyphs" stroke="#f2f2f2" stroke-width="0.35">Avg dE2000: 2.85</text>
<text x="49.4" y="727.8" font-size="30.6" fill="#f2f2f2" textLength="277.6" lengthAdjust="spacingAndGlyphs" stroke="#f2f2f2" stroke-width="0.35">Max dE2000: 5.19</text>
<text x="12.5" y="782.1" font-size="30.6" fill="#f2f2f2" textLength="251.3" lengthAdjust="spacingAndGlyphs" stroke="#f2f2f2" stroke-width="0.35">Current Reading</text>
<text x="12.5" y="824" font-size="27" fill="#f2f2f2" textLength="117.1" lengthAdjust="spacingAndGlyphs" stroke="#f2f2f2" stroke-width="0.35">x: 0.4451</text>
<text x="192" y="824" font-size="27" fill="#f2f2f2" textLength="119.6" lengthAdjust="spacingAndGlyphs" stroke="#f2f2f2" stroke-width="0.35">y: 0.5326</text>
<text x="12.5" y="869.4" font-size="27" fill="#f2f2f2" textLength="110.9" lengthAdjust="spacingAndGlyphs" stroke="#f2f2f2" stroke-width="0.35">fL: 55.59</text>
<text x="12.5" y="909.3" font-size="27" fill="#f2f2f2" textLength="183.2" lengthAdjust="spacingAndGlyphs" stroke="#f2f2f2" stroke-width="0.35">cd/m²: 190.46</text>
<rect x="406.6" y="689.3" width="288.5" height="207.4" fill="#242424"/>
<text x="533.4" y="682.9" font-size="16.5" fill="#dcdcdc" text-anchor="middle" textLength="95" lengthAdjust="spacingAndGlyphs">RGB Balance</text>
<line x1="406.6" y1="711" x2="695.1" y2="711" stroke="#8c8c8c" stroke-width="1.5"/>
<line x1="406.6" y1="752.2" x2="695.1" y2="752.2" stroke="#8c8c8c" stroke-width="1.5"/>
<line x1="406.6" y1="794" x2="695.1" y2="794" stroke="#8c8c8c" stroke-width="1.5"/>
<line x1="406.6" y1="836.2" x2="695.1" y2="836.2" stroke="#8c8c8c" stroke-width="1.5"/>
<line x1="406.6" y1="877.4" x2="695.1" y2="877.4" stroke="#8c8c8c" stroke-width="1.5"/>
<rect x="406.6" y="689.3" width="288.5" height="207.4" fill="none" stroke="#b0b0b0" stroke-width="1.6"/>
<line x1="400.1" y1="711" x2="406.6" y2="711" stroke="#d8d8d8" stroke-width="1.6"/>
<text x="399.2" y="717" font-size="16" fill="#dcdcdc" text-anchor="end" textLength="28.03" lengthAdjust="spacingAndGlyphs">104</text>
<line x1="400.1" y1="752.2" x2="406.6" y2="752.2" stroke="#d8d8d8" stroke-width="1.6"/>
<text x="399.2" y="758.2" font-size="16" fill="#dcdcdc" text-anchor="end" textLength="28.03" lengthAdjust="spacingAndGlyphs">102</text>
<line x1="400.1" y1="794" x2="406.6" y2="794" stroke="#d8d8d8" stroke-width="1.6"/>
<text x="399.2" y="800" font-size="16" fill="#dcdcdc" text-anchor="end" textLength="28.03" lengthAdjust="spacingAndGlyphs">100</text>
<line x1="400.1" y1="836.2" x2="406.6" y2="836.2" stroke="#d8d8d8" stroke-width="1.6"/>
<text x="399.2" y="842.2" font-size="16" fill="#dcdcdc" text-anchor="end" textLength="18.69" lengthAdjust="spacingAndGlyphs">98</text>
<line x1="400.1" y1="877.4" x2="406.6" y2="877.4" stroke="#d8d8d8" stroke-width="1.6"/>
<text x="399.2" y="883.4" font-size="16" fill="#dcdcdc" text-anchor="end" textLength="18.69" lengthAdjust="spacingAndGlyphs">96</text>
<line x1="406.6" y1="896.7" x2="406.6" y2="904.2" stroke="#d8d8d8" stroke-width="1.6"/>
<line x1="695.1" y1="896.7" x2="695.1" y2="904.2" stroke="#d8d8d8" stroke-width="1.6"/>
<text x="551" y="914.7" font-size="15.6" fill="#dcdcdc" text-anchor="middle" textLength="41.89" lengthAdjust="spacingAndGlyphs">100%</text>
<rect x="435.1" y="706" width="74.9" height="190.5" fill="url(#g38)" stroke="#000" stroke-width="1.5"/>
<rect x="511.8" y="745" width="74.8" height="151.5" fill="url(#g39)" stroke="#000" stroke-width="1.5"/>
<rect x="588.6" y="852.4" width="74.8" height="44.1" fill="url(#g40)" stroke="#000" stroke-width="1.5"/>
<rect x="741.9" y="653.6" width="809.6" height="32.6" fill="url(#g41)"/>
<rect x="719.8" y="653.6" width="22.1" height="32.6" fill="#000"/>
<text x="934.7" y="676.2" font-size="19.6" fill="#f4f4f4" textLength="46.6" lengthAdjust="spacingAndGlyphs">20%</text>
<text x="1059.4" y="676.2" font-size="19.6" fill="#f4f4f4" textLength="46.6" lengthAdjust="spacingAndGlyphs">40%</text>
<text x="1184.4" y="676.2" font-size="19.6" fill="#f4f4f4" textLength="46.6" lengthAdjust="spacingAndGlyphs">60%</text>
<text x="1309.4" y="676.2" font-size="19.6" fill="#f4f4f4" textLength="46.6" lengthAdjust="spacingAndGlyphs">80%</text>
<text x="1434.3" y="676.2" font-size="19.6" fill="#f4f4f4" textLength="59.5" lengthAdjust="spacingAndGlyphs">100%</text>
<rect x="741.9" y="686.2" width="809.6" height="30.02" fill="#444444"/>
<rect x="719.8" y="687" width="22.1" height="28.92" fill="url(#g42)"/>
<text x="750.4" y="708.2" font-size="19.8" fill="#f4f4f4" textLength="90.4" lengthAdjust="spacingAndGlyphs">x: CIE31</text>
<text x="934.7" y="708.2" font-size="19.8" fill="#f4f4f4" textLength="78.2" lengthAdjust="spacingAndGlyphs">0.3438</text>
<text x="1059.4" y="708.2" font-size="19.8" fill="#f4f4f4" textLength="78.2" lengthAdjust="spacingAndGlyphs">0.3673</text>
<text x="1184.4" y="708.2" font-size="19.8" fill="#f4f4f4" textLength="78.2" lengthAdjust="spacingAndGlyphs">0.3918</text>
<text x="1309.4" y="708.2" font-size="19.8" fill="#f4f4f4" textLength="78.2" lengthAdjust="spacingAndGlyphs">0.4174</text>
<text x="1434.3" y="708.2" font-size="19.8" fill="#f4f4f4" textLength="78.2" lengthAdjust="spacingAndGlyphs">0.4451</text>
<rect x="741.9" y="715.92" width="809.6" height="30.02" fill="#808080"/>
<rect x="719.8" y="716.72" width="22.1" height="28.92" fill="url(#g42)"/>
<text x="750.4" y="737.92" font-size="19.8" fill="#f4f4f4" textLength="91.4" lengthAdjust="spacingAndGlyphs">y: CIE31</text>
<text x="934.7" y="737.92" font-size="19.8" fill="#f4f4f4" textLength="78.2" lengthAdjust="spacingAndGlyphs">0.3772</text>
<text x="1059.4" y="737.92" font-size="19.8" fill="#f4f4f4" textLength="78.2" lengthAdjust="spacingAndGlyphs">0.4132</text>
<text x="1184.4" y="737.92" font-size="19.8" fill="#f4f4f4" textLength="78.2" lengthAdjust="spacingAndGlyphs">0.4512</text>
<text x="1309.4" y="737.92" font-size="19.8" fill="#f4f4f4" textLength="78.2" lengthAdjust="spacingAndGlyphs">0.4908</text>
<text x="1434.3" y="737.92" font-size="19.8" fill="#f4f4f4" textLength="78.2" lengthAdjust="spacingAndGlyphs">0.5326</text>
<rect x="741.9" y="745.64" width="809.6" height="30.02" fill="#444444"/>
<rect x="719.8" y="746.44" width="22.1" height="28.92" fill="url(#g42)"/>
<text x="750.4" y="767.64" font-size="19.8" fill="#f4f4f4" textLength="13.5" lengthAdjust="spacingAndGlyphs">Y</text>
<text x="935.9" y="767.64" font-size="19.8" fill="#f4f4f4" textLength="105.6" lengthAdjust="spacingAndGlyphs">197.1491</text>
<text x="1060.6" y="767.64" font-size="19.8" fill="#f4f4f4" textLength="105.6" lengthAdjust="spacingAndGlyphs">194.6684</text>
<text x="1185.6" y="767.64" font-size="19.8" fill="#f4f4f4" textLength="105.6" lengthAdjust="spacingAndGlyphs">192.9430</text>
<text x="1310.6" y="767.64" font-size="19.8" fill="#f4f4f4" textLength="105.6" lengthAdjust="spacingAndGlyphs">191.2944</text>
<text x="1435.5" y="767.64" font-size="19.8" fill="#f4f4f4" textLength="105.6" lengthAdjust="spacingAndGlyphs">190.4639</text>
<rect x="741.9" y="775.36" width="809.6" height="30.02" fill="#808080"/>
<rect x="719.8" y="776.16" width="22.1" height="28.92" fill="url(#g42)"/>
<text x="750.4" y="797.36" font-size="19.8" fill="#f4f4f4" textLength="164.7" lengthAdjust="spacingAndGlyphs">Target x:CIE31</text>
<text x="934.7" y="797.36" font-size="19.8" fill="#f4f4f4" textLength="78.2" lengthAdjust="spacingAndGlyphs">0.3406</text>
<text x="1059.4" y="797.36" font-size="19.8" fill="#f4f4f4" textLength="78.2" lengthAdjust="spacingAndGlyphs">0.3657</text>
<text x="1184.4" y="797.36" font-size="19.8" fill="#f4f4f4" textLength="78.2" lengthAdjust="spacingAndGlyphs">0.3916</text>
<text x="1309.4" y="797.36" font-size="19.8" fill="#f4f4f4" textLength="78.2" lengthAdjust="spacingAndGlyphs">0.4168</text>
<text x="1434.3" y="797.36" font-size="19.8" fill="#f4f4f4" textLength="78.2" lengthAdjust="spacingAndGlyphs">0.4378</text>
<rect x="741.9" y="805.08" width="809.6" height="30.02" fill="#444444"/>
<rect x="719.8" y="805.88" width="22.1" height="28.92" fill="url(#g42)"/>
<text x="750.4" y="827.08" font-size="19.8" fill="#f4f4f4" textLength="165.7" lengthAdjust="spacingAndGlyphs">Target y:CIE31</text>
<text x="934.7" y="827.08" font-size="19.8" fill="#f4f4f4" textLength="78.2" lengthAdjust="spacingAndGlyphs">0.3751</text>
<text x="1059.4" y="827.08" font-size="19.8" fill="#f4f4f4" textLength="78.2" lengthAdjust="spacingAndGlyphs">0.4166</text>
<text x="1184.4" y="827.08" font-size="19.8" fill="#f4f4f4" textLength="78.2" lengthAdjust="spacingAndGlyphs">0.4594</text>
<text x="1309.4" y="827.08" font-size="19.8" fill="#f4f4f4" textLength="78.2" lengthAdjust="spacingAndGlyphs">0.5010</text>
<text x="1434.3" y="827.08" font-size="19.8" fill="#f4f4f4" textLength="78.2" lengthAdjust="spacingAndGlyphs">0.5359</text>
<rect x="741.9" y="834.8" width="809.6" height="30.02" fill="#808080"/>
<rect x="719.8" y="835.6" width="22.1" height="28.92" fill="url(#g42)"/>
<text x="750.4" y="856.8" font-size="19.8" fill="#f4f4f4" textLength="95.5" lengthAdjust="spacingAndGlyphs">Target Y</text>
<text x="935.9" y="856.8" font-size="19.8" fill="#f4f4f4" textLength="105.6" lengthAdjust="spacingAndGlyphs">184.1225</text>
<text x="1060.6" y="856.8" font-size="19.8" fill="#f4f4f4" textLength="105.6" lengthAdjust="spacingAndGlyphs">180.6917</text>
<text x="1185.6" y="856.8" font-size="19.8" fill="#f4f4f4" textLength="105.6" lengthAdjust="spacingAndGlyphs">177.9034</text>
<text x="1310.6" y="856.8" font-size="19.8" fill="#f4f4f4" textLength="105.6" lengthAdjust="spacingAndGlyphs">175.7110</text>
<text x="1435.5" y="856.8" font-size="19.8" fill="#f4f4f4" textLength="105.6" lengthAdjust="spacingAndGlyphs">174.1704</text>
<rect x="741.9" y="864.52" width="809.6" height="30.02" fill="#444444"/>
<rect x="719.8" y="865.32" width="22.1" height="28.92" fill="url(#g42)"/>
<text x="750.4" y="886.52" font-size="19.8" fill="#f4f4f4" textLength="96.8" lengthAdjust="spacingAndGlyphs">ΔE 2000</text>
<text x="934.7" y="886.52" font-size="19.8" fill="#f4f4f4" textLength="78.2" lengthAdjust="spacingAndGlyphs">1.8467</text>
<text x="1059.4" y="886.52" font-size="19.8" fill="#f4f4f4" textLength="78.2" lengthAdjust="spacingAndGlyphs">1.9099</text>
<text x="1184.4" y="886.52" font-size="19.8" fill="#f4f4f4" textLength="78.2" lengthAdjust="spacingAndGlyphs">2.1239</text>
<text x="1309.4" y="886.52" font-size="19.8" fill="#f4f4f4" textLength="78.2" lengthAdjust="spacingAndGlyphs">2.2135</text>
<text x="1434.3" y="886.52" font-size="19.8" fill="#f4f4f4" textLength="78.2" lengthAdjust="spacingAndGlyphs">2.6818</text>
<rect x="741.9" y="894.24" width="809.6" height="30.02" fill="#808080"/>
<rect x="719.8" y="895.04" width="22.1" height="28.92" fill="url(#g42)"/>
<text x="750.4" y="916.24" font-size="19.8" fill="#f4f4f4" textLength="74.7" lengthAdjust="spacingAndGlyphs">ΔE ITP</text>
<text x="934.7" y="916.24" font-size="19.8" fill="#f4f4f4" textLength="78.2" lengthAdjust="spacingAndGlyphs">5.4537</text>
<text x="1059.4" y="916.24" font-size="19.8" fill="#f4f4f4" textLength="78.2" lengthAdjust="spacingAndGlyphs">5.9823</text>
<text x="1184.4" y="916.24" font-size="19.8" fill="#f4f4f4" textLength="78.2" lengthAdjust="spacingAndGlyphs">7.2912</text>
<text x="1309.4" y="916.24" font-size="19.8" fill="#f4f4f4" textLength="78.2" lengthAdjust="spacingAndGlyphs">8.4151</text>
<text x="1434.3" y="916.24" font-size="19.8" fill="#f4f4f4" textLength="78.2" lengthAdjust="spacingAndGlyphs">8.4362</text>
<rect x="0" y="1101" width="1920" height="62" fill="url(#g43)"/>
<rect x="-3" y="1100.6" width="43.3" height="59.8" fill="url(#g44)" rx="3"/>
<circle cx="18.2" cy="1109.6" r="7.2" fill="#6c6c6c"/>
<circle cx="18.2" cy="1109" r="6.4" fill="#7a7a7a"/>
<polygon points="13.4,1111.6 23,1111.6 18.2,1105.6" fill="#1c1c1c"/>
<rect x="1.6" y="1127" width="34" height="28.6" fill="#ffff00" rx="2.5"/>
<rect x="46.5" y="1100.8" width="148" height="59.4" fill="url(#g45)" rx="3.5"/>
<rect x="51.7" y="1105.8" width="138" height="35.4" fill="#c1c29f" stroke="#8a8a78" stroke-width="0.8" rx="2.2"/>
<text x="120.1" y="1155.8" font-size="10.6" fill="#262626" text-anchor="middle">20%</text>
<rect x="196.4" y="1100.8" width="148" height="59.4" fill="url(#g45)" rx="3.5"/>
<rect x="201.6" y="1105.8" width="138" height="35.4" fill="#c2c186" stroke="#8a8a78" stroke-width="0.8" rx="2.2"/>
<text x="270" y="1155.8" font-size="10.6" fill="#262626" text-anchor="middle">40%</text>
<rect x="346.3" y="1100.8" width="148" height="59.4" fill="url(#g45)" rx="3.5"/>
<rect x="351.5" y="1105.8" width="138" height="35.4" fill="#c2c16c" stroke="#8a8a78" stroke-width="0.8" rx="2.2"/>
<text x="419.9" y="1155.8" font-size="10.6" fill="#262626" text-anchor="middle">60%</text>
<rect x="496.2" y="1100.8" width="148" height="59.4" fill="url(#g45)" rx="3.5"/>
<rect x="501.4" y="1105.8" width="138" height="35.4" fill="#c2bf4f" stroke="#8a8a78" stroke-width="0.8" rx="2.2"/>
<text x="569.8" y="1155.8" font-size="10.6" fill="#262626" text-anchor="middle">80%</text>
<rect x="646.6" y="1100.8" width="148" height="59.4" fill="url(#g46)" rx="3.5"/>
<rect x="651.8" y="1105.8" width="138" height="35.4" fill="#c4c000" stroke="#3a3a1a" stroke-width="0.8" rx="2.2"/>
<text x="720.8" y="1155.8" font-size="10.6" fill="#ffffff" text-anchor="middle" font-weight="bold">100%</text>
<rect x="1600.6" y="1124.3" width="46" height="36.5" fill="url(#g48)" rx="3"/>
<rect x="1608.7" y="1126.6" width="29.6" height="27.2" fill="#9c9c9c" stroke="#1e1e1e" stroke-width="2.2" rx="4.5"/>
<rect x="1617.5" y="1133" width="13.2" height="13.2" fill="#000"/>
<rect x="1649.2" y="1101.5" width="45.1" height="28.6" fill="url(#g47)" rx="1.5"/>
<circle cx="1671.75" cy="1116.5" r="9" fill="#a2a2a2" fill-opacity="0.7"/>
<circle cx="1671.75" cy="1116.5" r="3.6" fill="#3a3a3a" fill-opacity="0.8"/>
<rect x="1695.1" y="1101.5" width="43.4" height="28.6" fill="url(#g47)" rx="1.5"/>
<circle cx="1716.8" cy="1116.5" r="9" fill="#a2a2a2" fill-opacity="0.7"/>
<circle cx="1716.8" cy="1116.5" r="3.6" fill="#3a3a3a" fill-opacity="0.8"/>
<rect x="1739.3" y="1101.5" width="43.9" height="28.6" fill="url(#g47)" rx="1.5"/>
<circle cx="1761.25" cy="1116.5" r="9" fill="#a2a2a2" fill-opacity="0.7"/>
<circle cx="1761.25" cy="1116.5" r="3.6" fill="#3a3a3a" fill-opacity="0.8"/>
<rect x="1784" y="1101.5" width="43" height="28.6" fill="url(#g47)" rx="1.5"/>
<circle cx="1805.5" cy="1116.5" r="9" fill="#a2a2a2" fill-opacity="0.7"/>
<circle cx="1805.5" cy="1116.5" r="3.6" fill="#3a3a3a" fill-opacity="0.8"/>
<rect x="1827.8" y="1101.5" width="43.7" height="28.6" fill="url(#g47)" rx="1.5"/>
<circle cx="1849.65" cy="1116.5" r="9" fill="#a2a2a2" fill-opacity="0.7"/>
<circle cx="1849.65" cy="1116.5" r="3.6" fill="#3a3a3a" fill-opacity="0.8"/>
<rect x="1648.8" y="1131.7" width="134.5" height="29.1" fill="url(#g49)" rx="3.5"/>
<rect x="1783.9" y="1131.7" width="133.9" height="29.1" fill="url(#g49)" rx="3.5"/>
<circle cx="1678.6" cy="1146.3" r="9.9" fill="url(#g50)"/>
<circle cx="1888.9" cy="1146.3" r="9.9" fill="url(#g50)"/>
<text x="1678.6" y="1152" font-size="19" fill="#2c2c2c" text-anchor="middle">«</text>
<text x="1889.2" y="1152" font-size="19" fill="#2c2c2c" text-anchor="middle">»</text>
<text x="1705.6" y="1153.3" font-size="20.3" fill="#2c2c2c" textLength="49.6" lengthAdjust="spacingAndGlyphs">Back</text>
<text x="1810.6" y="1153.3" font-size="20.3" fill="#2c2c2c" textLength="51.1" lengthAdjust="spacingAndGlyphs">Next</text>
<rect x="1917.9" y="1101" width="2.1" height="62" fill="#2a2a2a"/>
<g opacity="0.74">
<path d="M1541.7,1083.3 L1590.2,1092.7 L1591.7,1121.6 L1552.3,1125.1" fill="none" stroke="#c9c9c9" stroke-width="6.6" stroke-linejoin="round" stroke-linecap="round"/>
<path d="M1541.7,1083.3 L1544.5,1127 L1573.8,1146.2 L1626.9,1128.6 L1596.4,1123.9" fill="none" stroke="#c9c9c9" stroke-width="6.6" stroke-linejoin="round" stroke-linecap="round"/>
<path d="M1541.7,1083.3 L1590.2,1092.7 L1591.7,1121.6 L1552.3,1125.1" fill="none" stroke="#98262c" stroke-width="4.4" stroke-linejoin="round" stroke-linecap="round"/>
<path d="M1541.7,1083.3 L1544.5,1127 L1573.8,1146.2 L1626.9,1128.6 L1596.4,1123.9" fill="none" stroke="#98262c" stroke-width="4.4" stroke-linejoin="round" stroke-linecap="round"/>
<path d="M1553.4,1099.6 Q1558.5,1094.6 1562.6,1096.2 Q1567,1102.5 1570.2,1110.6 Q1580,1094 1597.6,1080.4 Q1584.5,1098 1569.4,1119.2 Q1562.5,1104.5 1553.4,1099.6 Z" fill="#383436" stroke="#cfcfcf" stroke-width="1.4" stroke-linejoin="round"/>
<text x="1598.4" y="1119.2" font-size="35" fill="#a8262f" textLength="194.8" lengthAdjust="spacingAndGlyphs" font-weight="bold" stroke="#dcd0d0" stroke-width="1.5" paint-order="stroke">NOTEBOOK</text>
<text x="1794.6" y="1119.2" font-size="35" fill="#2a2a2a" textLength="114.6" lengthAdjust="spacingAndGlyphs" font-weight="bold" stroke="#d2d2d2" stroke-width="2" paint-order="stroke">CHECK</text>
</g>
</svg>
</body></html>
